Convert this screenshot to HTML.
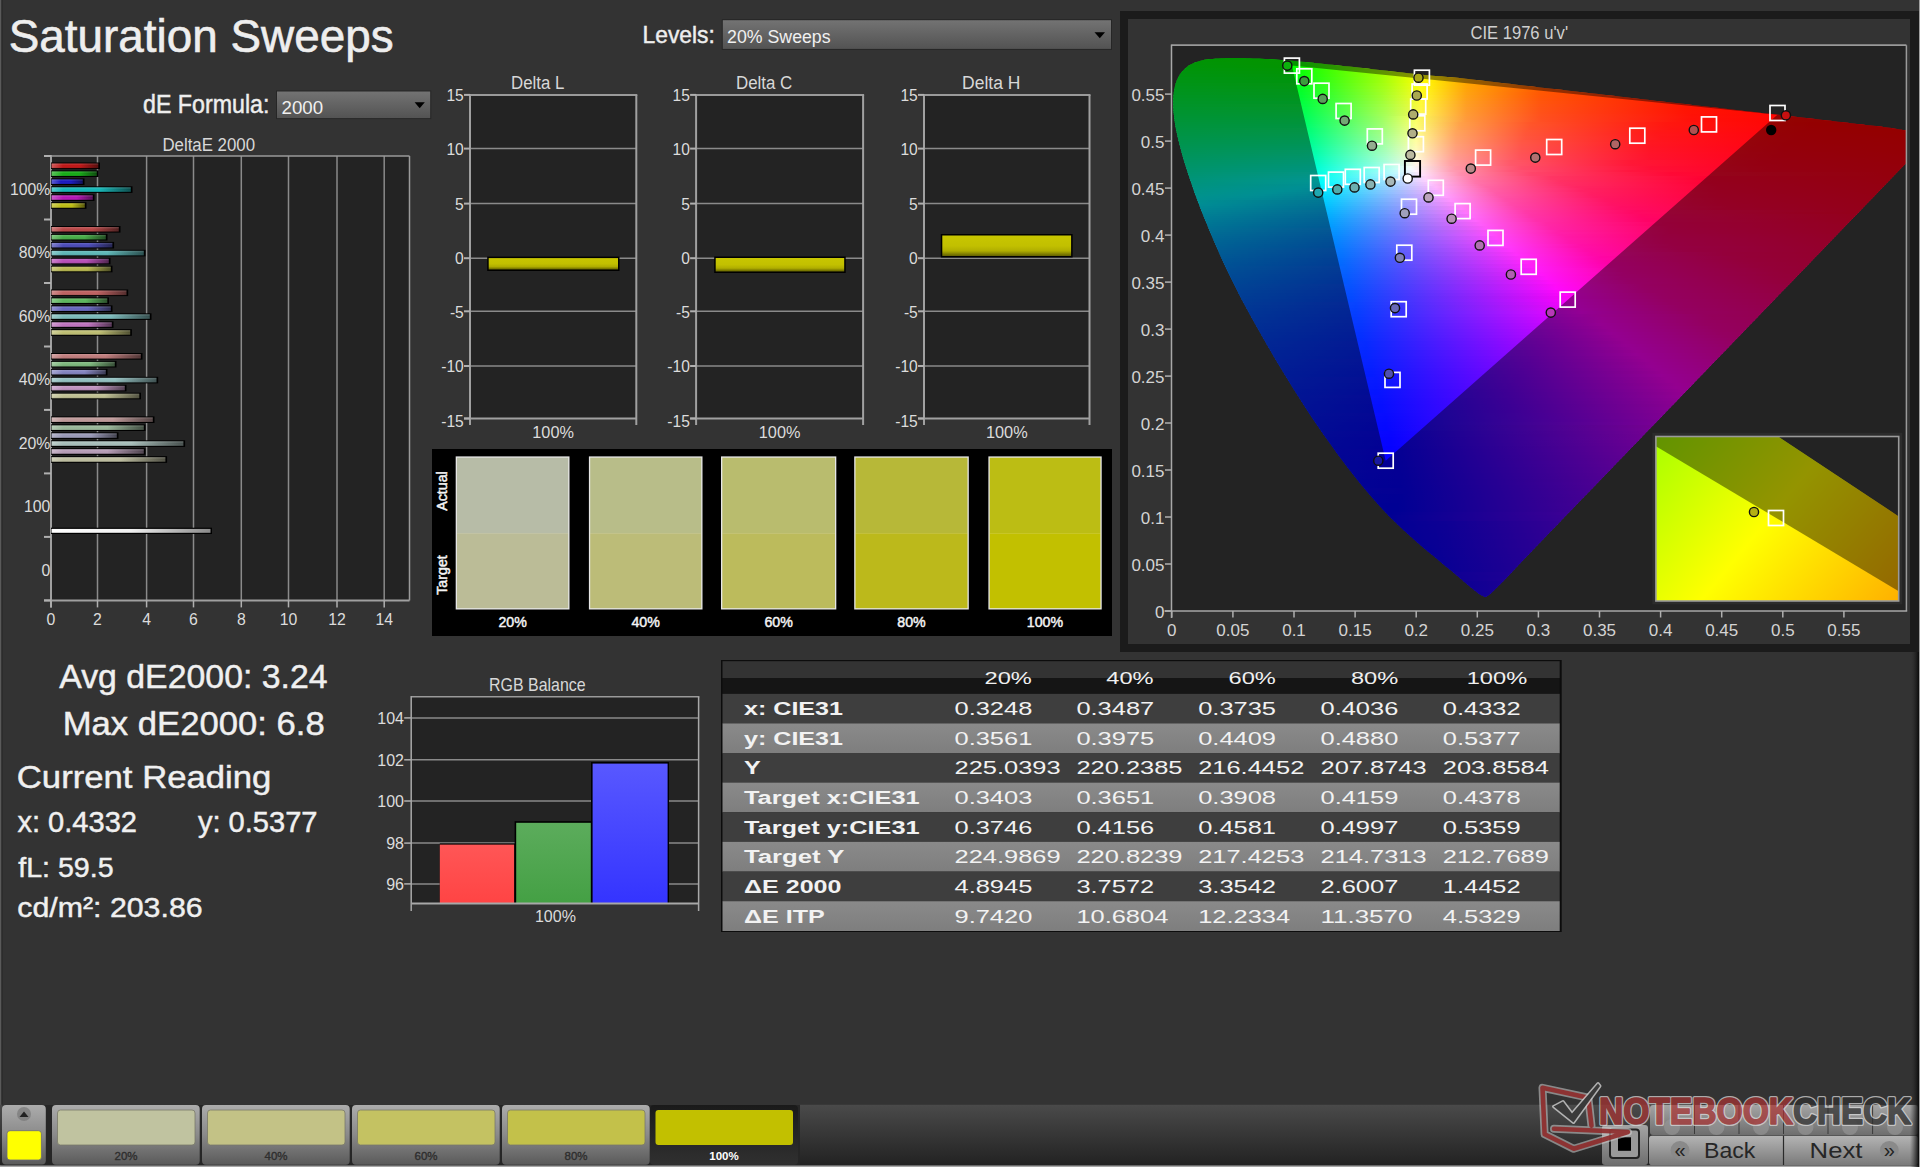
<!DOCTYPE html>
<html><head><meta charset="utf-8"><title>Saturation Sweeps</title>
<style>html,body{margin:0;padding:0;background:#333;overflow:hidden;width:1920px;height:1167px}svg{display:block}text{font-family:"Liberation Sans",sans-serif}</style></head>
<body><svg width="1920" height="1167" viewBox="0 0 1920 1167" font-family='"Liberation Sans", sans-serif'>
<defs><linearGradient id="dd" x1="0" y1="0" x2="0" y2="1"><stop offset="0" stop-color="#737373"/><stop offset="1" stop-color="#535353"/></linearGradient><linearGradient id="bhl" x1="0" y1="0" x2="0" y2="1"><stop offset="0" stop-color="#fff" stop-opacity="0.18"/><stop offset="0.5" stop-color="#fff" stop-opacity="0"/><stop offset="1" stop-color="#000" stop-opacity="0.15"/></linearGradient><linearGradient id="b1" gradientUnits="userSpaceOnUse" x1="51" y1="0" x2="99.5" y2="0"><stop offset="0" stop-color="#d25a5a"/><stop offset="0.247" stop-color="#be1313"/><stop offset="0.6" stop-color="#be1313"/><stop offset="1" stop-color="#4c0808"/></linearGradient><linearGradient id="b2" gradientUnits="userSpaceOnUse" x1="51" y1="0" x2="98" y2="0"><stop offset="0" stop-color="#5ac45a"/><stop offset="0.255" stop-color="#13ab13"/><stop offset="0.6" stop-color="#13ab13"/><stop offset="1" stop-color="#084408"/></linearGradient><linearGradient id="b3" gradientUnits="userSpaceOnUse" x1="51" y1="0" x2="84" y2="0"><stop offset="0" stop-color="#5d5dd2"/><stop offset="0.300" stop-color="#1717be"/><stop offset="0.6" stop-color="#1717be"/><stop offset="1" stop-color="#09094c"/></linearGradient><linearGradient id="b4" gradientUnits="userSpaceOnUse" x1="51" y1="0" x2="132" y2="0"><stop offset="0" stop-color="#5acccc"/><stop offset="0.148" stop-color="#13b6b6"/><stop offset="0.6" stop-color="#13b6b6"/><stop offset="1" stop-color="#084949"/></linearGradient><linearGradient id="b5" gradientUnits="userSpaceOnUse" x1="51" y1="0" x2="94" y2="0"><stop offset="0" stop-color="#cc5acc"/><stop offset="0.279" stop-color="#b613b6"/><stop offset="0.6" stop-color="#b613b6"/><stop offset="1" stop-color="#490849"/></linearGradient><linearGradient id="b6" gradientUnits="userSpaceOnUse" x1="51" y1="0" x2="86" y2="0"><stop offset="0" stop-color="#d2d25a"/><stop offset="0.300" stop-color="#bebe13"/><stop offset="0.6" stop-color="#bebe13"/><stop offset="1" stop-color="#4c4c08"/></linearGradient><linearGradient id="b7" gradientUnits="userSpaceOnUse" x1="51" y1="0" x2="120" y2="0"><stop offset="0" stop-color="#cc7c7c"/><stop offset="0.174" stop-color="#b64444"/><stop offset="0.6" stop-color="#b64444"/><stop offset="1" stop-color="#491b1b"/></linearGradient><linearGradient id="b8" gradientUnits="userSpaceOnUse" x1="51" y1="0" x2="107" y2="0"><stop offset="0" stop-color="#7cc47c"/><stop offset="0.214" stop-color="#44ab44"/><stop offset="0.6" stop-color="#44ab44"/><stop offset="1" stop-color="#1b441b"/></linearGradient><linearGradient id="b9" gradientUnits="userSpaceOnUse" x1="51" y1="0" x2="113.6" y2="0"><stop offset="0" stop-color="#7f7fcc"/><stop offset="0.192" stop-color="#4848b6"/><stop offset="0.6" stop-color="#4848b6"/><stop offset="1" stop-color="#1d1d49"/></linearGradient><linearGradient id="b10" gradientUnits="userSpaceOnUse" x1="51" y1="0" x2="145" y2="0"><stop offset="0" stop-color="#8ccccc"/><stop offset="0.128" stop-color="#5bb6b6"/><stop offset="0.6" stop-color="#5bb6b6"/><stop offset="1" stop-color="#244949"/></linearGradient><linearGradient id="b11" gradientUnits="userSpaceOnUse" x1="51" y1="0" x2="110" y2="0"><stop offset="0" stop-color="#cc82cc"/><stop offset="0.203" stop-color="#b64cb6"/><stop offset="0.6" stop-color="#b64cb6"/><stop offset="1" stop-color="#491e49"/></linearGradient><linearGradient id="b12" gradientUnits="userSpaceOnUse" x1="51" y1="0" x2="112" y2="0"><stop offset="0" stop-color="#cccc82"/><stop offset="0.197" stop-color="#b6b64c"/><stop offset="0.6" stop-color="#b6b64c"/><stop offset="1" stop-color="#49491e"/></linearGradient><linearGradient id="b13" gradientUnits="userSpaceOnUse" x1="51" y1="0" x2="127.7" y2="0"><stop offset="0" stop-color="#d28f8f"/><stop offset="0.156" stop-color="#be5f5f"/><stop offset="0.6" stop-color="#be5f5f"/><stop offset="1" stop-color="#4c2626"/></linearGradient><linearGradient id="b14" gradientUnits="userSpaceOnUse" x1="51" y1="0" x2="108.5" y2="0"><stop offset="0" stop-color="#8ccc8c"/><stop offset="0.209" stop-color="#5bb65b"/><stop offset="0.6" stop-color="#5bb65b"/><stop offset="1" stop-color="#244924"/></linearGradient><linearGradient id="b15" gradientUnits="userSpaceOnUse" x1="51" y1="0" x2="112" y2="0"><stop offset="0" stop-color="#9393d2"/><stop offset="0.197" stop-color="#6565be"/><stop offset="0.6" stop-color="#6565be"/><stop offset="1" stop-color="#28284c"/></linearGradient><linearGradient id="b16" gradientUnits="userSpaceOnUse" x1="51" y1="0" x2="151" y2="0"><stop offset="0" stop-color="#a2cfcf"/><stop offset="0.120" stop-color="#7ababa"/><stop offset="0.6" stop-color="#7ababa"/><stop offset="1" stop-color="#314a4a"/></linearGradient><linearGradient id="b17" gradientUnits="userSpaceOnUse" x1="51" y1="0" x2="113" y2="0"><stop offset="0" stop-color="#d29cd2"/><stop offset="0.194" stop-color="#be72be"/><stop offset="0.6" stop-color="#be72be"/><stop offset="1" stop-color="#4c2e4c"/></linearGradient><linearGradient id="b18" gradientUnits="userSpaceOnUse" x1="51" y1="0" x2="131.4" y2="0"><stop offset="0" stop-color="#d2d29c"/><stop offset="0.149" stop-color="#bebe72"/><stop offset="0.6" stop-color="#bebe72"/><stop offset="1" stop-color="#4c4c2e"/></linearGradient><linearGradient id="b19" gradientUnits="userSpaceOnUse" x1="51" y1="0" x2="142" y2="0"><stop offset="0" stop-color="#d2a2a2"/><stop offset="0.132" stop-color="#be7a7a"/><stop offset="0.6" stop-color="#be7a7a"/><stop offset="1" stop-color="#4c3131"/></linearGradient><linearGradient id="b20" gradientUnits="userSpaceOnUse" x1="51" y1="0" x2="116" y2="0"><stop offset="0" stop-color="#a2cca2"/><stop offset="0.185" stop-color="#7ab67a"/><stop offset="0.6" stop-color="#7ab67a"/><stop offset="1" stop-color="#314931"/></linearGradient><linearGradient id="b21" gradientUnits="userSpaceOnUse" x1="51" y1="0" x2="107" y2="0"><stop offset="0" stop-color="#a7a7d2"/><stop offset="0.214" stop-color="#8181be"/><stop offset="0.6" stop-color="#8181be"/><stop offset="1" stop-color="#34344c"/></linearGradient><linearGradient id="b22" gradientUnits="userSpaceOnUse" x1="51" y1="0" x2="157.7" y2="0"><stop offset="0" stop-color="#b1d2d2"/><stop offset="0.112" stop-color="#90bebe"/><stop offset="0.6" stop-color="#90bebe"/><stop offset="1" stop-color="#3a4c4c"/></linearGradient><linearGradient id="b23" gradientUnits="userSpaceOnUse" x1="51" y1="0" x2="126" y2="0"><stop offset="0" stop-color="#d2b1d2"/><stop offset="0.160" stop-color="#be90be"/><stop offset="0.6" stop-color="#be90be"/><stop offset="1" stop-color="#4c3a4c"/></linearGradient><linearGradient id="b24" gradientUnits="userSpaceOnUse" x1="51" y1="0" x2="140.5" y2="0"><stop offset="0" stop-color="#d2d2b1"/><stop offset="0.134" stop-color="#bebe90"/><stop offset="0.6" stop-color="#bebe90"/><stop offset="1" stop-color="#4c4c3a"/></linearGradient><linearGradient id="b25" gradientUnits="userSpaceOnUse" x1="51" y1="0" x2="154" y2="0"><stop offset="0" stop-color="#d2b7b7"/><stop offset="0.117" stop-color="#be9898"/><stop offset="0.6" stop-color="#be9898"/><stop offset="1" stop-color="#4c3d3d"/></linearGradient><linearGradient id="b26" gradientUnits="userSpaceOnUse" x1="51" y1="0" x2="145" y2="0"><stop offset="0" stop-color="#b7ccb7"/><stop offset="0.128" stop-color="#98b698"/><stop offset="0.6" stop-color="#98b698"/><stop offset="1" stop-color="#3d493d"/></linearGradient><linearGradient id="b27" gradientUnits="userSpaceOnUse" x1="51" y1="0" x2="118" y2="0"><stop offset="0" stop-color="#b7b7cc"/><stop offset="0.179" stop-color="#9898b6"/><stop offset="0.6" stop-color="#9898b6"/><stop offset="1" stop-color="#3d3d49"/></linearGradient><linearGradient id="b28" gradientUnits="userSpaceOnUse" x1="51" y1="0" x2="184.6" y2="0"><stop offset="0" stop-color="#c1d2cf"/><stop offset="0.090" stop-color="#a7beba"/><stop offset="0.6" stop-color="#a7beba"/><stop offset="1" stop-color="#434c4a"/></linearGradient><linearGradient id="b29" gradientUnits="userSpaceOnUse" x1="51" y1="0" x2="145" y2="0"><stop offset="0" stop-color="#ccbacc"/><stop offset="0.128" stop-color="#b69cb6"/><stop offset="0.6" stop-color="#b69cb6"/><stop offset="1" stop-color="#493e49"/></linearGradient><linearGradient id="b30" gradientUnits="userSpaceOnUse" x1="51" y1="0" x2="166.6" y2="0"><stop offset="0" stop-color="#d2d2bc"/><stop offset="0.104" stop-color="#bebea0"/><stop offset="0.6" stop-color="#bebea0"/><stop offset="1" stop-color="#4c4c40"/></linearGradient><linearGradient id="bw"><stop offset="0" stop-color="#ffffff"/><stop offset="0.5" stop-color="#f0f0f0"/><stop offset="1" stop-color="#8a8a8a"/></linearGradient><linearGradient id="yb" x1="0" y1="0" x2="0" y2="1"><stop offset="0" stop-color="#c8c600"/><stop offset="0.5" stop-color="#c2c000"/><stop offset="0.75" stop-color="#b0ae00"/><stop offset="1" stop-color="#626000"/></linearGradient><clipPath id="pf"><rect x="1171.5" y="45.2" width="734.9000000000001" height="565.8"/></clipPath><clipPath id="hs"><path d="M1482.6 595.6 L1482.0 595.8 L1481.7 595.9 L1481.7 595.8 L1481.7 595.8 L1481.7 595.6 L1481.4 595.4 L1481.0 595.1 L1480.5 594.8 L1479.9 594.4 L1479.2 594.0 L1478.6 593.5 L1477.9 593.0 L1477.2 592.5 L1476.5 591.9 L1475.8 591.3 L1475.0 590.7 L1474.1 590.1 L1473.3 589.3 L1472.3 588.6 L1471.3 587.8 L1470.3 586.9 L1469.2 586.0 L1468.0 585.1 L1466.8 584.1 L1465.6 583.1 L1464.3 582.0 L1463.0 580.8 L1461.7 579.6 L1460.2 578.4 L1458.7 577.1 L1457.2 575.8 L1455.6 574.5 L1453.9 573.1 L1452.2 571.6 L1450.4 570.1 L1448.5 568.5 L1446.5 566.9 L1444.4 565.2 L1442.3 563.4 L1440.0 561.5 L1437.7 559.6 L1435.3 557.6 L1432.9 555.6 L1430.4 553.5 L1427.9 551.4 L1425.2 549.2 L1422.5 546.9 L1419.7 544.5 L1416.7 541.9 L1413.7 539.3 L1410.6 536.5 L1407.4 533.6 L1404.0 530.6 L1400.6 527.3 L1397.1 523.9 L1393.6 520.5 L1389.9 516.9 L1386.1 513.0 L1382.1 508.7 L1377.8 504.0 L1373.2 498.8 L1368.4 493.2 L1363.4 487.3 L1358.2 481.0 L1352.9 474.3 L1347.4 467.2 L1341.8 459.7 L1336.0 451.9 L1330.0 443.6 L1323.9 435.1 L1317.7 426.1 L1311.5 416.9 L1305.2 407.2 L1298.7 397.1 L1292.1 386.7 L1285.6 376.1 L1279.0 365.3 L1272.6 354.4 L1266.2 343.4 L1259.7 332.1 L1253.3 320.7 L1247.0 309.3 L1240.9 297.9 L1235.2 286.7 L1229.7 275.7 L1224.4 264.5 L1219.4 253.5 L1214.6 242.6 L1210.1 232.0 L1205.9 221.8 L1201.9 212.0 L1198.2 202.3 L1194.7 192.9 L1191.6 183.8 L1188.6 175.2 L1186.0 167.1 L1183.6 159.5 L1181.6 152.3 L1179.8 145.6 L1178.2 139.2 L1176.9 133.2 L1175.7 127.4 L1174.8 121.9 L1174.1 116.8 L1173.6 112.0 L1173.3 107.4 L1173.2 103.2 L1173.2 99.1 L1173.5 95.2 L1173.9 91.7 L1174.5 88.3 L1175.2 85.2 L1176.1 82.3 L1177.2 79.6 L1178.4 77.1 L1179.7 74.7 L1181.2 72.6 L1182.9 70.7 L1184.6 68.9 L1186.5 67.3 L1188.4 65.8 L1190.5 64.6 L1192.7 63.5 L1195.0 62.5 L1197.3 61.7 L1199.7 61.0 L1202.2 60.3 L1204.7 59.8 L1207.3 59.4 L1210.0 59.1 L1212.7 58.9 L1215.4 58.6 L1218.2 58.4 L1221.1 58.3 L1223.9 58.2 L1226.8 58.1 L1229.7 58.1 L1232.6 58.1 L1235.5 58.0 L1238.4 58.0 L1241.3 58.1 L1244.2 58.1 L1247.1 58.2 L1250.0 58.3 L1253.0 58.4 L1256.0 58.5 L1259.0 58.6 L1262.0 58.8 L1265.1 58.9 L1268.2 59.1 L1271.4 59.3 L1274.6 59.5 L1277.8 59.8 L1281.1 60.0 L1284.4 60.3 L1287.8 60.5 L1291.2 60.8 L1294.7 61.1 L1298.2 61.4 L1301.8 61.8 L1305.4 62.1 L1309.1 62.5 L1312.8 62.8 L1316.6 63.2 L1320.5 63.6 L1324.4 64.0 L1328.4 64.4 L1332.5 64.8 L1336.7 65.3 L1340.9 65.7 L1345.1 66.2 L1349.5 66.6 L1353.9 67.1 L1358.4 67.6 L1363.0 68.1 L1367.7 68.6 L1372.4 69.2 L1377.2 69.7 L1382.1 70.3 L1387.1 70.8 L1392.2 71.4 L1397.3 72.0 L1402.6 72.6 L1407.9 73.2 L1413.3 73.8 L1418.8 74.4 L1424.4 74.9 L1430.1 75.4 L1435.8 75.9 L1441.7 76.3 L1447.7 76.9 L1453.7 77.4 L1459.8 78.1 L1466.0 78.8 L1472.3 79.5 L1478.7 80.3 L1485.2 81.0 L1491.8 81.8 L1498.4 82.6 L1505.1 83.4 L1511.9 84.1 L1518.8 84.9 L1525.8 85.7 L1532.8 86.5 L1539.9 87.4 L1547.0 88.2 L1554.2 89.0 L1561.5 89.8 L1568.8 90.7 L1576.2 91.5 L1583.6 92.4 L1591.0 93.2 L1598.5 94.1 L1606.0 95.0 L1613.5 95.8 L1620.9 96.7 L1628.2 97.5 L1635.4 98.4 L1642.6 99.2 L1649.8 100.0 L1657.0 100.9 L1664.1 101.7 L1671.2 102.5 L1678.4 103.3 L1685.5 104.1 L1692.5 104.9 L1699.4 105.7 L1706.2 106.5 L1712.8 107.3 L1719.3 108.0 L1725.7 108.8 L1732.0 109.5 L1738.2 110.2 L1744.2 110.9 L1750.1 111.6 L1755.9 112.2 L1761.6 112.9 L1767.2 113.5 L1772.6 114.1 L1777.9 114.8 L1783.0 115.3 L1788.0 115.9 L1792.8 116.5 L1797.5 117.0 L1802.1 117.6 L1806.6 118.1 L1810.9 118.6 L1815.1 119.1 L1819.1 119.5 L1823.1 120.0 L1826.9 120.4 L1830.6 120.8 L1834.3 121.3 L1837.8 121.7 L1841.2 122.0 L1844.5 122.4 L1847.7 122.8 L1850.9 123.2 L1854.0 123.5 L1857.0 123.9 L1860.0 124.2 L1862.9 124.5 L1865.7 124.9 L1868.4 125.2 L1871.1 125.5 L1873.7 125.8 L1876.2 126.1 L1878.6 126.3 L1881.0 126.6 L1883.3 126.9 L1885.5 127.2 L1887.6 127.5 L1889.7 127.8 L1891.7 128.1 L1893.6 128.4 L1895.4 128.7 L1897.0 129.0 L1898.5 129.2 L1899.8 129.4 L1901.2 129.6 L1902.8 129.9 L1904.6 130.2 L1906.7 130.5 L1909.2 130.9 L1911.9 131.4 L1914.5 131.8 L1916.9 132.2 L1918.9 132.6 L1920.6 132.9 L1921.9 133.2 L1923.0 133.5 L1924.1 133.7 L1925.1 134.0 L1926.1 134.3 L1927.3 134.5 L1928.6 134.8 L1929.8 135.1 L1930.9 135.4 L1931.8 135.6 L1932.5 135.8 L1933.4 135.3 L1934.6 134.2 L1935.7 133.0 L1936.0 132.5 L1935.1 133.2 L1932.5 135.8 L1927.7 140.8 L1921.1 147.6 L1913.2 155.8 L1904.8 164.5 L1896.3 173.3 L1888.4 181.5 L1881.1 189.1 L1873.8 196.7 L1866.4 204.3 L1859.1 211.9 L1851.7 219.5 L1844.4 227.1 L1837.0 234.7 L1829.7 242.3 L1822.4 250.0 L1815.0 257.6 L1807.7 265.2 L1800.3 272.8 L1793.0 280.4 L1785.6 288.0 L1778.3 295.6 L1771.0 303.2 L1763.6 310.8 L1756.3 318.5 L1748.9 326.1 L1741.6 333.7 L1734.2 341.3 L1726.9 348.9 L1719.5 356.5 L1712.2 364.1 L1704.9 371.7 L1697.5 379.3 L1690.2 386.9 L1682.8 394.6 L1675.5 402.2 L1668.1 409.8 L1660.8 417.4 L1653.5 425.0 L1646.1 432.6 L1638.8 440.2 L1631.4 447.8 L1624.1 455.4 L1616.7 463.1 L1609.4 470.7 L1602.1 478.3 L1594.7 485.9 L1587.4 493.5 L1580.0 501.1 L1572.7 508.7 L1565.3 516.3 L1558.0 523.9 L1550.6 531.6 L1543.3 539.2 L1536.0 546.8 L1528.2 554.9 L1520.0 563.6 L1511.8 572.3 L1504.0 580.4 L1497.2 587.3 L1491.9 592.4 L1488.3 595.5 L1485.9 596.8 L1484.6 596.9 L1483.8 596.4 L1483.3 595.8Z"/></clipPath><linearGradient id="c0" gradientUnits="userSpaceOnUse" x1="1171" y1="0" x2="1907" y2="0"><stop offset="0.000" stop-color="#00ff05"/><stop offset="0.163" stop-color="#02ff00"/><stop offset="0.285" stop-color="#9eff00"/><stop offset="0.346" stop-color="#fff900"/><stop offset="0.414" stop-color="#ffa000"/><stop offset="0.530" stop-color="#ff5400"/><stop offset="0.754" stop-color="#ff1600"/><stop offset="0.999" stop-color="#ff0000"/><stop offset="1.005" stop-color="#ff0000"/></linearGradient><linearGradient id="c1" gradientUnits="userSpaceOnUse" x1="1171" y1="0" x2="1907" y2="0"><stop offset="0.000" stop-color="#00ff09"/><stop offset="0.170" stop-color="#08ff00"/><stop offset="0.292" stop-color="#a8ff00"/><stop offset="0.346" stop-color="#fff800"/><stop offset="0.414" stop-color="#ff9f00"/><stop offset="0.530" stop-color="#ff5300"/><stop offset="0.754" stop-color="#ff1500"/><stop offset="0.992" stop-color="#ff0000"/><stop offset="1.005" stop-color="#ff0000"/></linearGradient><linearGradient id="c2" gradientUnits="userSpaceOnUse" x1="1171" y1="0" x2="1907" y2="0"><stop offset="0.000" stop-color="#00ff0d"/><stop offset="0.170" stop-color="#07ff00"/><stop offset="0.292" stop-color="#a8ff00"/><stop offset="0.346" stop-color="#fff700"/><stop offset="0.414" stop-color="#ff9e00"/><stop offset="0.530" stop-color="#ff5300"/><stop offset="0.754" stop-color="#ff1400"/><stop offset="0.992" stop-color="#ff0000"/><stop offset="1.005" stop-color="#ff0000"/></linearGradient><linearGradient id="c3" gradientUnits="userSpaceOnUse" x1="1171" y1="0" x2="1907" y2="0"><stop offset="0.000" stop-color="#00ff11"/><stop offset="0.170" stop-color="#06ff01"/><stop offset="0.292" stop-color="#a9ff00"/><stop offset="0.346" stop-color="#fff600"/><stop offset="0.414" stop-color="#ff9d00"/><stop offset="0.530" stop-color="#ff5200"/><stop offset="0.754" stop-color="#ff1400"/><stop offset="0.985" stop-color="#ff0000"/><stop offset="1.005" stop-color="#ff0000"/></linearGradient><linearGradient id="c4" gradientUnits="userSpaceOnUse" x1="1171" y1="0" x2="1907" y2="0"><stop offset="0.000" stop-color="#00ff15"/><stop offset="0.170" stop-color="#05ff06"/><stop offset="0.292" stop-color="#a9ff00"/><stop offset="0.340" stop-color="#fcff00"/><stop offset="0.414" stop-color="#ff9c00"/><stop offset="0.530" stop-color="#ff5100"/><stop offset="0.754" stop-color="#ff1300"/><stop offset="0.985" stop-color="#ff0000"/><stop offset="1.005" stop-color="#ff0000"/></linearGradient><linearGradient id="c5" gradientUnits="userSpaceOnUse" x1="1171" y1="0" x2="1907" y2="0"><stop offset="0.000" stop-color="#00ff19"/><stop offset="0.170" stop-color="#04ff0a"/><stop offset="0.285" stop-color="#9eff00"/><stop offset="0.340" stop-color="#fcff00"/><stop offset="0.408" stop-color="#ffa200"/><stop offset="0.516" stop-color="#ff5700"/><stop offset="0.727" stop-color="#ff1700"/><stop offset="0.965" stop-color="#ff0000"/><stop offset="1.005" stop-color="#ff0000"/></linearGradient><linearGradient id="c6" gradientUnits="userSpaceOnUse" x1="1171" y1="0" x2="1907" y2="0"><stop offset="0.000" stop-color="#00ff1d"/><stop offset="0.170" stop-color="#03ff0f"/><stop offset="0.285" stop-color="#9eff02"/><stop offset="0.340" stop-color="#fdff00"/><stop offset="0.408" stop-color="#ffa100"/><stop offset="0.516" stop-color="#ff5600"/><stop offset="0.727" stop-color="#ff1700"/><stop offset="0.958" stop-color="#ff0000"/><stop offset="1.005" stop-color="#ff0000"/></linearGradient><linearGradient id="c7" gradientUnits="userSpaceOnUse" x1="1171" y1="0" x2="1907" y2="0"><stop offset="0.000" stop-color="#00ff21"/><stop offset="0.170" stop-color="#02ff14"/><stop offset="0.285" stop-color="#9dff08"/><stop offset="0.340" stop-color="#feff00"/><stop offset="0.408" stop-color="#ffa000"/><stop offset="0.516" stop-color="#ff5500"/><stop offset="0.727" stop-color="#ff1600"/><stop offset="0.958" stop-color="#ff0000"/><stop offset="1.005" stop-color="#ff0000"/></linearGradient><linearGradient id="c8" gradientUnits="userSpaceOnUse" x1="1171" y1="0" x2="1907" y2="0"><stop offset="0.000" stop-color="#00ff25"/><stop offset="0.170" stop-color="#01ff19"/><stop offset="0.285" stop-color="#9dff0e"/><stop offset="0.340" stop-color="#ffff06"/><stop offset="0.401" stop-color="#ffa600"/><stop offset="0.510" stop-color="#ff5700"/><stop offset="0.713" stop-color="#ff1800"/><stop offset="0.944" stop-color="#ff0000"/><stop offset="1.005" stop-color="#ff0000"/></linearGradient><linearGradient id="c9" gradientUnits="userSpaceOnUse" x1="1171" y1="0" x2="1907" y2="0"><stop offset="0.000" stop-color="#00ff29"/><stop offset="0.177" stop-color="#07ff1e"/><stop offset="0.292" stop-color="#a9ff13"/><stop offset="0.340" stop-color="#ffff0d"/><stop offset="0.401" stop-color="#ffa602"/><stop offset="0.510" stop-color="#ff5600"/><stop offset="0.713" stop-color="#ff1800"/><stop offset="0.944" stop-color="#ff0000"/><stop offset="1.005" stop-color="#ff0000"/></linearGradient><linearGradient id="c10" gradientUnits="userSpaceOnUse" x1="1171" y1="0" x2="1907" y2="0"><stop offset="0.000" stop-color="#00ff2e"/><stop offset="0.177" stop-color="#06ff23"/><stop offset="0.292" stop-color="#a9ff19"/><stop offset="0.340" stop-color="#fffe13"/><stop offset="0.401" stop-color="#ffa507"/><stop offset="0.510" stop-color="#ff5600"/><stop offset="0.713" stop-color="#ff1700"/><stop offset="0.938" stop-color="#ff0000"/><stop offset="1.005" stop-color="#ff0000"/></linearGradient><linearGradient id="c11" gradientUnits="userSpaceOnUse" x1="1171" y1="0" x2="1907" y2="0"><stop offset="0.000" stop-color="#00ff32"/><stop offset="0.177" stop-color="#05ff29"/><stop offset="0.292" stop-color="#a9ff1f"/><stop offset="0.340" stop-color="#fffd1a"/><stop offset="0.401" stop-color="#ffa40c"/><stop offset="0.510" stop-color="#ff5500"/><stop offset="0.713" stop-color="#ff1600"/><stop offset="0.938" stop-color="#ff0000"/><stop offset="1.005" stop-color="#ff0000"/></linearGradient><linearGradient id="c12" gradientUnits="userSpaceOnUse" x1="1171" y1="0" x2="1907" y2="0"><stop offset="0.000" stop-color="#00ff36"/><stop offset="0.177" stop-color="#04ff2e"/><stop offset="0.285" stop-color="#9dff26"/><stop offset="0.340" stop-color="#fffc21"/><stop offset="0.401" stop-color="#ffa311"/><stop offset="0.503" stop-color="#ff5703"/><stop offset="0.700" stop-color="#ff1800"/><stop offset="0.924" stop-color="#ff0000"/><stop offset="1.005" stop-color="#ff0000"/></linearGradient><linearGradient id="c13" gradientUnits="userSpaceOnUse" x1="1171" y1="0" x2="1907" y2="0"><stop offset="0.000" stop-color="#00ff3b"/><stop offset="0.177" stop-color="#03ff33"/><stop offset="0.285" stop-color="#9dff2d"/><stop offset="0.340" stop-color="#fffc28"/><stop offset="0.401" stop-color="#ffa216"/><stop offset="0.503" stop-color="#ff5606"/><stop offset="0.700" stop-color="#ff1800"/><stop offset="0.924" stop-color="#ff0000"/><stop offset="1.005" stop-color="#ff0000"/></linearGradient><linearGradient id="c14" gradientUnits="userSpaceOnUse" x1="1171" y1="0" x2="1907" y2="0"><stop offset="0.000" stop-color="#00ff3f"/><stop offset="0.177" stop-color="#02ff39"/><stop offset="0.285" stop-color="#9dff33"/><stop offset="0.340" stop-color="#fffb2f"/><stop offset="0.401" stop-color="#ffa11b"/><stop offset="0.503" stop-color="#ff550a"/><stop offset="0.700" stop-color="#ff1700"/><stop offset="0.917" stop-color="#ff0000"/><stop offset="1.005" stop-color="#ff0000"/></linearGradient><linearGradient id="c15" gradientUnits="userSpaceOnUse" x1="1171" y1="0" x2="1907" y2="0"><stop offset="0.000" stop-color="#00ff44"/><stop offset="0.177" stop-color="#01ff3f"/><stop offset="0.285" stop-color="#9dff3a"/><stop offset="0.340" stop-color="#fffa36"/><stop offset="0.401" stop-color="#ffa020"/><stop offset="0.503" stop-color="#ff550d"/><stop offset="0.700" stop-color="#ff1600"/><stop offset="0.917" stop-color="#ff0000"/><stop offset="1.005" stop-color="#ff0000"/></linearGradient><linearGradient id="c16" gradientUnits="userSpaceOnUse" x1="1171" y1="0" x2="1907" y2="0"><stop offset="0.000" stop-color="#00ff48"/><stop offset="0.183" stop-color="#08ff44"/><stop offset="0.292" stop-color="#a9ff41"/><stop offset="0.340" stop-color="#fff93d"/><stop offset="0.401" stop-color="#ff9f25"/><stop offset="0.503" stop-color="#ff5411"/><stop offset="0.700" stop-color="#ff1600"/><stop offset="0.910" stop-color="#ff0000"/><stop offset="1.005" stop-color="#ff0000"/></linearGradient><linearGradient id="c17" gradientUnits="userSpaceOnUse" x1="1171" y1="0" x2="1907" y2="0"><stop offset="0.000" stop-color="#00ff4d"/><stop offset="0.183" stop-color="#07ff4a"/><stop offset="0.292" stop-color="#a9ff48"/><stop offset="0.340" stop-color="#fff844"/><stop offset="0.401" stop-color="#ff9e2a"/><stop offset="0.503" stop-color="#ff5314"/><stop offset="0.700" stop-color="#ff1502"/><stop offset="0.910" stop-color="#ff0000"/><stop offset="1.005" stop-color="#ff0000"/></linearGradient><linearGradient id="c18" gradientUnits="userSpaceOnUse" x1="1171" y1="0" x2="1907" y2="0"><stop offset="0.000" stop-color="#00ff51"/><stop offset="0.183" stop-color="#06ff4f"/><stop offset="0.292" stop-color="#a9ff4d"/><stop offset="0.340" stop-color="#fff84a"/><stop offset="0.401" stop-color="#ff9d2e"/><stop offset="0.503" stop-color="#ff5217"/><stop offset="0.700" stop-color="#ff1404"/><stop offset="0.904" stop-color="#ff0000"/><stop offset="1.005" stop-color="#ff0000"/></linearGradient><linearGradient id="c19" gradientUnits="userSpaceOnUse" x1="1171" y1="0" x2="1907" y2="0"><stop offset="0.000" stop-color="#00ff54"/><stop offset="0.183" stop-color="#05ff53"/><stop offset="0.292" stop-color="#a9ff52"/><stop offset="0.340" stop-color="#fff74f"/><stop offset="0.401" stop-color="#ff9c32"/><stop offset="0.503" stop-color="#ff5119"/><stop offset="0.700" stop-color="#ff1405"/><stop offset="0.904" stop-color="#ff0000"/><stop offset="1.005" stop-color="#ff0000"/></linearGradient><linearGradient id="c20" gradientUnits="userSpaceOnUse" x1="1171" y1="0" x2="1907" y2="0"><stop offset="0.000" stop-color="#00ff57"/><stop offset="0.183" stop-color="#04ff57"/><stop offset="0.292" stop-color="#a9ff57"/><stop offset="0.340" stop-color="#fff654"/><stop offset="0.401" stop-color="#ff9c35"/><stop offset="0.503" stop-color="#ff511c"/><stop offset="0.707" stop-color="#ff1206"/><stop offset="0.910" stop-color="#ff0000"/><stop offset="1.005" stop-color="#ff0000"/></linearGradient><linearGradient id="c21" gradientUnits="userSpaceOnUse" x1="1171" y1="0" x2="1907" y2="0"><stop offset="0.000" stop-color="#00ff5a"/><stop offset="0.183" stop-color="#03ff5b"/><stop offset="0.285" stop-color="#9cff5c"/><stop offset="0.333" stop-color="#faff5c"/><stop offset="0.401" stop-color="#ff9b39"/><stop offset="0.503" stop-color="#ff501e"/><stop offset="0.707" stop-color="#ff1208"/><stop offset="0.910" stop-color="#ff0000"/><stop offset="1.005" stop-color="#ff0000"/></linearGradient><linearGradient id="c22" gradientUnits="userSpaceOnUse" x1="1171" y1="0" x2="1907" y2="0"><stop offset="0.000" stop-color="#00ff5d"/><stop offset="0.183" stop-color="#02ff5f"/><stop offset="0.285" stop-color="#9cff61"/><stop offset="0.333" stop-color="#faff62"/><stop offset="0.401" stop-color="#ff9a3c"/><stop offset="0.503" stop-color="#ff5020"/><stop offset="0.707" stop-color="#ff1109"/><stop offset="0.904" stop-color="#ff0000"/><stop offset="1.005" stop-color="#ff0000"/></linearGradient><linearGradient id="c23" gradientUnits="userSpaceOnUse" x1="1171" y1="0" x2="1907" y2="0"><stop offset="0.000" stop-color="#00ff60"/><stop offset="0.183" stop-color="#02ff63"/><stop offset="0.285" stop-color="#9cff66"/><stop offset="0.333" stop-color="#fbff67"/><stop offset="0.401" stop-color="#ff9a40"/><stop offset="0.503" stop-color="#ff4f23"/><stop offset="0.707" stop-color="#ff110b"/><stop offset="0.904" stop-color="#ff0000"/><stop offset="1.005" stop-color="#ff0000"/></linearGradient><linearGradient id="c24" gradientUnits="userSpaceOnUse" x1="1171" y1="0" x2="1907" y2="0"><stop offset="0.000" stop-color="#00ff64"/><stop offset="0.183" stop-color="#01ff67"/><stop offset="0.285" stop-color="#9cff6b"/><stop offset="0.333" stop-color="#fbff6d"/><stop offset="0.394" stop-color="#ffa047"/><stop offset="0.489" stop-color="#ff5528"/><stop offset="0.673" stop-color="#ff170f"/><stop offset="0.876" stop-color="#ff0002"/><stop offset="1.005" stop-color="#ff0000"/></linearGradient><linearGradient id="c25" gradientUnits="userSpaceOnUse" x1="1171" y1="0" x2="1907" y2="0"><stop offset="0.000" stop-color="#00ff67"/><stop offset="0.183" stop-color="#00ff6c"/><stop offset="0.285" stop-color="#9cff70"/><stop offset="0.333" stop-color="#fcff72"/><stop offset="0.394" stop-color="#ffa04a"/><stop offset="0.489" stop-color="#ff552b"/><stop offset="0.673" stop-color="#ff1710"/><stop offset="0.876" stop-color="#ff0003"/><stop offset="1.005" stop-color="#ff0000"/></linearGradient><linearGradient id="c26" gradientUnits="userSpaceOnUse" x1="1171" y1="0" x2="1907" y2="0"><stop offset="0.000" stop-color="#00ff6a"/><stop offset="0.183" stop-color="#00ff70"/><stop offset="0.285" stop-color="#9cff75"/><stop offset="0.333" stop-color="#fcff78"/><stop offset="0.394" stop-color="#ff9f4e"/><stop offset="0.489" stop-color="#ff542d"/><stop offset="0.673" stop-color="#ff1612"/><stop offset="0.876" stop-color="#ff0005"/><stop offset="1.005" stop-color="#ff0000"/></linearGradient><linearGradient id="c27" gradientUnits="userSpaceOnUse" x1="1171" y1="0" x2="1907" y2="0"><stop offset="0.000" stop-color="#00ff6d"/><stop offset="0.190" stop-color="#07ff75"/><stop offset="0.292" stop-color="#a9ff7b"/><stop offset="0.333" stop-color="#fdff7e"/><stop offset="0.394" stop-color="#ff9e52"/><stop offset="0.489" stop-color="#ff5330"/><stop offset="0.679" stop-color="#ff1413"/><stop offset="0.876" stop-color="#ff0006"/><stop offset="1.005" stop-color="#ff0000"/></linearGradient><linearGradient id="c28" gradientUnits="userSpaceOnUse" x1="1171" y1="0" x2="1907" y2="0"><stop offset="0.000" stop-color="#00ff71"/><stop offset="0.190" stop-color="#06ff79"/><stop offset="0.292" stop-color="#a9ff80"/><stop offset="0.333" stop-color="#fdff84"/><stop offset="0.387" stop-color="#ffa659"/><stop offset="0.482" stop-color="#ff5734"/><stop offset="0.659" stop-color="#ff1816"/><stop offset="0.863" stop-color="#ff0007"/><stop offset="1.005" stop-color="#ff0001"/></linearGradient><linearGradient id="c29" gradientUnits="userSpaceOnUse" x1="1171" y1="0" x2="1907" y2="0"><stop offset="0.000" stop-color="#00ff74"/><stop offset="0.190" stop-color="#06ff7d"/><stop offset="0.292" stop-color="#a9ff85"/><stop offset="0.333" stop-color="#feff89"/><stop offset="0.387" stop-color="#ffa55d"/><stop offset="0.482" stop-color="#ff5637"/><stop offset="0.659" stop-color="#ff1718"/><stop offset="0.856" stop-color="#ff0009"/><stop offset="1.005" stop-color="#ff0002"/></linearGradient><linearGradient id="c30" gradientUnits="userSpaceOnUse" x1="1171" y1="0" x2="1907" y2="0"><stop offset="0.000" stop-color="#00ff77"/><stop offset="0.190" stop-color="#05ff82"/><stop offset="0.292" stop-color="#a9ff8b"/><stop offset="0.333" stop-color="#ffff8f"/><stop offset="0.387" stop-color="#ffa461"/><stop offset="0.482" stop-color="#ff5539"/><stop offset="0.659" stop-color="#ff171a"/><stop offset="0.856" stop-color="#ff000a"/><stop offset="1.005" stop-color="#ff0003"/></linearGradient><linearGradient id="c31" gradientUnits="userSpaceOnUse" x1="1171" y1="0" x2="1907" y2="0"><stop offset="0.000" stop-color="#00ff7b"/><stop offset="0.190" stop-color="#04ff86"/><stop offset="0.285" stop-color="#9cff8f"/><stop offset="0.333" stop-color="#ffff95"/><stop offset="0.387" stop-color="#ffa465"/><stop offset="0.482" stop-color="#ff553c"/><stop offset="0.666" stop-color="#ff151a"/><stop offset="0.856" stop-color="#ff000b"/><stop offset="1.005" stop-color="#ff0004"/></linearGradient><linearGradient id="c32" gradientUnits="userSpaceOnUse" x1="1171" y1="0" x2="1907" y2="0"><stop offset="0.000" stop-color="#00ff7e"/><stop offset="0.190" stop-color="#03ff8b"/><stop offset="0.285" stop-color="#9cff95"/><stop offset="0.333" stop-color="#fffe9b"/><stop offset="0.387" stop-color="#ffa369"/><stop offset="0.482" stop-color="#ff543e"/><stop offset="0.666" stop-color="#ff151c"/><stop offset="0.856" stop-color="#ff000c"/><stop offset="1.005" stop-color="#ff0005"/></linearGradient><linearGradient id="c33" gradientUnits="userSpaceOnUse" x1="1171" y1="0" x2="1907" y2="0"><stop offset="0.000" stop-color="#00ff82"/><stop offset="0.190" stop-color="#02ff90"/><stop offset="0.285" stop-color="#9bff9b"/><stop offset="0.333" stop-color="#fffea1"/><stop offset="0.387" stop-color="#ffa26d"/><stop offset="0.476" stop-color="#ff5743"/><stop offset="0.652" stop-color="#ff171f"/><stop offset="0.849" stop-color="#ff000e"/><stop offset="1.005" stop-color="#ff0006"/></linearGradient><linearGradient id="c34" gradientUnits="userSpaceOnUse" x1="1171" y1="0" x2="1907" y2="0"><stop offset="0.000" stop-color="#00ff85"/><stop offset="0.190" stop-color="#01ff94"/><stop offset="0.285" stop-color="#9bffa0"/><stop offset="0.333" stop-color="#fffda7"/><stop offset="0.387" stop-color="#ffa171"/><stop offset="0.476" stop-color="#ff5746"/><stop offset="0.652" stop-color="#ff1721"/><stop offset="0.842" stop-color="#ff000f"/><stop offset="1.005" stop-color="#ff0007"/></linearGradient><linearGradient id="c35" gradientUnits="userSpaceOnUse" x1="1171" y1="0" x2="1907" y2="0"><stop offset="0.000" stop-color="#00ff89"/><stop offset="0.190" stop-color="#01ff99"/><stop offset="0.285" stop-color="#9bffa6"/><stop offset="0.333" stop-color="#fffcad"/><stop offset="0.387" stop-color="#ffa176"/><stop offset="0.476" stop-color="#ff5649"/><stop offset="0.652" stop-color="#ff1622"/><stop offset="0.842" stop-color="#ff0010"/><stop offset="1.005" stop-color="#ff0008"/></linearGradient><linearGradient id="c36" gradientUnits="userSpaceOnUse" x1="1171" y1="0" x2="1907" y2="0"><stop offset="0.000" stop-color="#00ff8c"/><stop offset="0.190" stop-color="#00ff9e"/><stop offset="0.285" stop-color="#9bffac"/><stop offset="0.333" stop-color="#fffcb3"/><stop offset="0.387" stop-color="#ffa07a"/><stop offset="0.476" stop-color="#ff554c"/><stop offset="0.652" stop-color="#ff1524"/><stop offset="0.836" stop-color="#ff0012"/><stop offset="1.005" stop-color="#ff0009"/></linearGradient><linearGradient id="c37" gradientUnits="userSpaceOnUse" x1="1171" y1="0" x2="1907" y2="0"><stop offset="0.000" stop-color="#00ff90"/><stop offset="0.190" stop-color="#00ffa3"/><stop offset="0.285" stop-color="#9bffb2"/><stop offset="0.333" stop-color="#fffbb9"/><stop offset="0.387" stop-color="#ff9f7e"/><stop offset="0.476" stop-color="#ff544e"/><stop offset="0.652" stop-color="#ff1526"/><stop offset="0.836" stop-color="#ff0013"/><stop offset="1.005" stop-color="#ff0009"/></linearGradient><linearGradient id="c38" gradientUnits="userSpaceOnUse" x1="1171" y1="0" x2="1907" y2="0"><stop offset="0.000" stop-color="#00ff93"/><stop offset="0.197" stop-color="#07ffa8"/><stop offset="0.292" stop-color="#a9ffb9"/><stop offset="0.333" stop-color="#fffbbf"/><stop offset="0.387" stop-color="#ff9e82"/><stop offset="0.476" stop-color="#ff5451"/><stop offset="0.652" stop-color="#ff1427"/><stop offset="0.836" stop-color="#ff0014"/><stop offset="1.005" stop-color="#ff000a"/></linearGradient><linearGradient id="c39" gradientUnits="userSpaceOnUse" x1="1171" y1="0" x2="1907" y2="0"><stop offset="0.000" stop-color="#00ff97"/><stop offset="0.197" stop-color="#06ffad"/><stop offset="0.292" stop-color="#a9ffbf"/><stop offset="0.333" stop-color="#fffac5"/><stop offset="0.387" stop-color="#ff9e86"/><stop offset="0.476" stop-color="#ff5354"/><stop offset="0.652" stop-color="#ff1429"/><stop offset="0.836" stop-color="#ff0016"/><stop offset="1.005" stop-color="#ff000b"/></linearGradient><linearGradient id="c40" gradientUnits="userSpaceOnUse" x1="1171" y1="0" x2="1907" y2="0"><stop offset="0.000" stop-color="#00ff9b"/><stop offset="0.197" stop-color="#06ffb2"/><stop offset="0.292" stop-color="#a9ffc5"/><stop offset="0.333" stop-color="#fff9cb"/><stop offset="0.387" stop-color="#ff9d8b"/><stop offset="0.476" stop-color="#ff5257"/><stop offset="0.652" stop-color="#ff132b"/><stop offset="0.829" stop-color="#ff0017"/><stop offset="1.005" stop-color="#ff000c"/></linearGradient><linearGradient id="c41" gradientUnits="userSpaceOnUse" x1="1171" y1="0" x2="1907" y2="0"><stop offset="0.000" stop-color="#00ff9e"/><stop offset="0.197" stop-color="#05ffb8"/><stop offset="0.292" stop-color="#a9ffcb"/><stop offset="0.333" stop-color="#fff9d1"/><stop offset="0.387" stop-color="#ff9c8f"/><stop offset="0.476" stop-color="#ff5259"/><stop offset="0.652" stop-color="#ff132c"/><stop offset="0.829" stop-color="#ff0018"/><stop offset="1.005" stop-color="#ff000d"/></linearGradient><linearGradient id="c42" gradientUnits="userSpaceOnUse" x1="1171" y1="0" x2="1907" y2="0"><stop offset="0.000" stop-color="#00ffa2"/><stop offset="0.197" stop-color="#04ffbd"/><stop offset="0.285" stop-color="#9bffd0"/><stop offset="0.333" stop-color="#fff8d8"/><stop offset="0.387" stop-color="#ff9b93"/><stop offset="0.476" stop-color="#ff515c"/><stop offset="0.652" stop-color="#ff122e"/><stop offset="0.829" stop-color="#ff001a"/><stop offset="1.005" stop-color="#ff000e"/></linearGradient><linearGradient id="c43" gradientUnits="userSpaceOnUse" x1="1171" y1="0" x2="1907" y2="0"><stop offset="0.000" stop-color="#00ffa6"/><stop offset="0.197" stop-color="#03ffc2"/><stop offset="0.285" stop-color="#9bffd6"/><stop offset="0.333" stop-color="#fff7de"/><stop offset="0.380" stop-color="#ffa39e"/><stop offset="0.462" stop-color="#ff5865"/><stop offset="0.625" stop-color="#ff1835"/><stop offset="0.808" stop-color="#ff001d"/><stop offset="1.005" stop-color="#ff000f"/></linearGradient><linearGradient id="c44" gradientUnits="userSpaceOnUse" x1="1171" y1="0" x2="1907" y2="0"><stop offset="0.000" stop-color="#00ffaa"/><stop offset="0.197" stop-color="#02ffc7"/><stop offset="0.285" stop-color="#9bffdd"/><stop offset="0.333" stop-color="#fff7e4"/><stop offset="0.380" stop-color="#ffa2a3"/><stop offset="0.462" stop-color="#ff5868"/><stop offset="0.625" stop-color="#ff1836"/><stop offset="0.808" stop-color="#ff001e"/><stop offset="1.005" stop-color="#ff0010"/></linearGradient><linearGradient id="c45" gradientUnits="userSpaceOnUse" x1="1171" y1="0" x2="1907" y2="0"><stop offset="0.000" stop-color="#00ffad"/><stop offset="0.197" stop-color="#01ffcd"/><stop offset="0.285" stop-color="#9affe3"/><stop offset="0.333" stop-color="#fff6eb"/><stop offset="0.380" stop-color="#ffa2a7"/><stop offset="0.462" stop-color="#ff576b"/><stop offset="0.625" stop-color="#ff1738"/><stop offset="0.802" stop-color="#ff0020"/><stop offset="1.005" stop-color="#ff0011"/></linearGradient><linearGradient id="c46" gradientUnits="userSpaceOnUse" x1="1171" y1="0" x2="1907" y2="0"><stop offset="0.000" stop-color="#00ffb1"/><stop offset="0.197" stop-color="#00ffd2"/><stop offset="0.285" stop-color="#9affea"/><stop offset="0.326" stop-color="#f8fff8"/><stop offset="0.387" stop-color="#ff98a5"/><stop offset="0.476" stop-color="#ff4e68"/><stop offset="0.652" stop-color="#ff1035"/><stop offset="0.822" stop-color="#ff001f"/><stop offset="1.005" stop-color="#ff0012"/></linearGradient><linearGradient id="c47" gradientUnits="userSpaceOnUse" x1="1171" y1="0" x2="1907" y2="0"><stop offset="0.000" stop-color="#00ffb5"/><stop offset="0.197" stop-color="#00ffd7"/><stop offset="0.285" stop-color="#9afff1"/><stop offset="0.326" stop-color="#f8feff"/><stop offset="0.387" stop-color="#ff97a9"/><stop offset="0.476" stop-color="#ff4d6b"/><stop offset="0.652" stop-color="#ff1037"/><stop offset="0.822" stop-color="#ff0020"/><stop offset="1.005" stop-color="#ff0013"/></linearGradient><linearGradient id="c48" gradientUnits="userSpaceOnUse" x1="1171" y1="0" x2="1907" y2="0"><stop offset="0.000" stop-color="#00ffb9"/><stop offset="0.197" stop-color="#00ffdd"/><stop offset="0.279" stop-color="#8cfff5"/><stop offset="0.333" stop-color="#fff4ff"/><stop offset="0.380" stop-color="#ff9fb5"/><stop offset="0.462" stop-color="#ff5575"/><stop offset="0.625" stop-color="#ff153e"/><stop offset="0.795" stop-color="#ff0024"/><stop offset="1.005" stop-color="#ff0014"/></linearGradient><linearGradient id="c49" gradientUnits="userSpaceOnUse" x1="1171" y1="0" x2="1907" y2="0"><stop offset="0.000" stop-color="#00ffbd"/><stop offset="0.204" stop-color="#07ffe4"/><stop offset="0.306" stop-color="#c2f8ff"/><stop offset="0.340" stop-color="#ffe4f8"/><stop offset="0.394" stop-color="#ff8eab"/><stop offset="0.489" stop-color="#ff456a"/><stop offset="0.679" stop-color="#ff0935"/><stop offset="0.999" stop-color="#ff0015"/><stop offset="1.005" stop-color="#ff0015"/></linearGradient><linearGradient id="c50" gradientUnits="userSpaceOnUse" x1="1171" y1="0" x2="1907" y2="0"><stop offset="0.000" stop-color="#00ffc1"/><stop offset="0.204" stop-color="#06ffea"/><stop offset="0.299" stop-color="#b0f4ff"/><stop offset="0.340" stop-color="#ffe3fe"/><stop offset="0.394" stop-color="#ff8daf"/><stop offset="0.489" stop-color="#ff446d"/><stop offset="0.679" stop-color="#ff0937"/><stop offset="1.005" stop-color="#ff0015"/></linearGradient><linearGradient id="c51" gradientUnits="userSpaceOnUse" x1="1171" y1="0" x2="1907" y2="0"><stop offset="0.000" stop-color="#00ffc5"/><stop offset="0.204" stop-color="#06fff0"/><stop offset="0.285" stop-color="#92f2ff"/><stop offset="0.346" stop-color="#ffd4f7"/><stop offset="0.408" stop-color="#ff7ea6"/><stop offset="0.516" stop-color="#ff3664"/><stop offset="0.734" stop-color="#ff0030"/><stop offset="1.005" stop-color="#ff0016"/></linearGradient><linearGradient id="c52" gradientUnits="userSpaceOnUse" x1="1171" y1="0" x2="1907" y2="0"><stop offset="0.000" stop-color="#00ffc9"/><stop offset="0.204" stop-color="#05fff6"/><stop offset="0.319" stop-color="#cddfff"/><stop offset="0.346" stop-color="#ffd3fd"/><stop offset="0.408" stop-color="#ff7daa"/><stop offset="0.516" stop-color="#ff3666"/><stop offset="0.727" stop-color="#ff0032"/><stop offset="1.005" stop-color="#ff0017"/></linearGradient><linearGradient id="c53" gradientUnits="userSpaceOnUse" x1="1171" y1="0" x2="1907" y2="0"><stop offset="0.000" stop-color="#00ffcd"/><stop offset="0.204" stop-color="#04fffc"/><stop offset="0.346" stop-color="#fbcfff"/><stop offset="0.414" stop-color="#ff75a8"/><stop offset="0.530" stop-color="#ff3063"/><stop offset="0.740" stop-color="#ff0032"/><stop offset="1.005" stop-color="#ff0018"/></linearGradient><linearGradient id="c54" gradientUnits="userSpaceOnUse" x1="1171" y1="0" x2="1907" y2="0"><stop offset="0.000" stop-color="#00ffd1"/><stop offset="0.204" stop-color="#03fcff"/><stop offset="0.353" stop-color="#ffc5fd"/><stop offset="0.414" stop-color="#ff75ac"/><stop offset="0.530" stop-color="#ff2f66"/><stop offset="0.734" stop-color="#ff0034"/><stop offset="1.005" stop-color="#ff0019"/></linearGradient><linearGradient id="c55" gradientUnits="userSpaceOnUse" x1="1171" y1="0" x2="1907" y2="0"><stop offset="0.000" stop-color="#00ffd5"/><stop offset="0.204" stop-color="#02f7ff"/><stop offset="0.353" stop-color="#fbc1ff"/><stop offset="0.421" stop-color="#ff6eaa"/><stop offset="0.537" stop-color="#ff2c65"/><stop offset="0.740" stop-color="#ff0035"/><stop offset="1.005" stop-color="#ff001a"/></linearGradient><linearGradient id="c56" gradientUnits="userSpaceOnUse" x1="1171" y1="0" x2="1907" y2="0"><stop offset="0.000" stop-color="#00ffd9"/><stop offset="0.183" stop-color="#00f7ff"/><stop offset="0.211" stop-color="#0befff"/><stop offset="0.360" stop-color="#ffb7fc"/><stop offset="0.428" stop-color="#ff67a7"/><stop offset="0.550" stop-color="#ff2663"/><stop offset="0.747" stop-color="#ff0035"/><stop offset="1.005" stop-color="#ff001b"/></linearGradient><linearGradient id="c57" gradientUnits="userSpaceOnUse" x1="1171" y1="0" x2="1907" y2="0"><stop offset="0.000" stop-color="#00ffde"/><stop offset="0.170" stop-color="#00f6ff"/><stop offset="0.204" stop-color="#00ebff"/><stop offset="0.360" stop-color="#fcb4ff"/><stop offset="0.435" stop-color="#ff61a5"/><stop offset="0.564" stop-color="#ff2160"/><stop offset="0.747" stop-color="#ff0036"/><stop offset="1.005" stop-color="#ff001c"/></linearGradient><linearGradient id="c58" gradientUnits="userSpaceOnUse" x1="1171" y1="0" x2="1907" y2="0"><stop offset="0.000" stop-color="#00ffe2"/><stop offset="0.149" stop-color="#00f7ff"/><stop offset="0.211" stop-color="#09e4ff"/><stop offset="0.367" stop-color="#ffaafb"/><stop offset="0.435" stop-color="#ff60a9"/><stop offset="0.557" stop-color="#ff2265"/><stop offset="0.740" stop-color="#ff0039"/><stop offset="1.005" stop-color="#ff001d"/></linearGradient><linearGradient id="c59" gradientUnits="userSpaceOnUse" x1="1171" y1="0" x2="1907" y2="0"><stop offset="0.000" stop-color="#00ffe6"/><stop offset="0.136" stop-color="#00f6ff"/><stop offset="0.211" stop-color="#07dfff"/><stop offset="0.367" stop-color="#fda8ff"/><stop offset="0.442" stop-color="#ff5aa7"/><stop offset="0.571" stop-color="#ff1e62"/><stop offset="0.747" stop-color="#ff0039"/><stop offset="1.005" stop-color="#ff001e"/></linearGradient><linearGradient id="c60" gradientUnits="userSpaceOnUse" x1="1171" y1="0" x2="1907" y2="0"><stop offset="0.000" stop-color="#00ffea"/><stop offset="0.122" stop-color="#00f5ff"/><stop offset="0.211" stop-color="#06daff"/><stop offset="0.374" stop-color="#ff9efb"/><stop offset="0.442" stop-color="#ff59ab"/><stop offset="0.571" stop-color="#ff1d64"/><stop offset="0.740" stop-color="#ff003c"/><stop offset="1.005" stop-color="#ff001f"/></linearGradient><linearGradient id="c61" gradientUnits="userSpaceOnUse" x1="1171" y1="0" x2="1907" y2="0"><stop offset="0.000" stop-color="#00ffef"/><stop offset="0.115" stop-color="#00f2ff"/><stop offset="0.211" stop-color="#05d5ff"/><stop offset="0.374" stop-color="#fe9dff"/><stop offset="0.448" stop-color="#ff54a9"/><stop offset="0.577" stop-color="#ff1a64"/><stop offset="0.740" stop-color="#ff003d"/><stop offset="1.005" stop-color="#ff0020"/></linearGradient><linearGradient id="c62" gradientUnits="userSpaceOnUse" x1="1171" y1="0" x2="1907" y2="0"><stop offset="0.000" stop-color="#00fff3"/><stop offset="0.115" stop-color="#00edff"/><stop offset="0.211" stop-color="#05d1ff"/><stop offset="0.380" stop-color="#ff93fa"/><stop offset="0.455" stop-color="#ff4ea7"/><stop offset="0.591" stop-color="#ff1662"/><stop offset="0.747" stop-color="#ff003e"/><stop offset="1.005" stop-color="#ff0021"/></linearGradient><linearGradient id="c63" gradientUnits="userSpaceOnUse" x1="1171" y1="0" x2="1907" y2="0"><stop offset="0.000" stop-color="#00fff8"/><stop offset="0.211" stop-color="#04ccff"/><stop offset="0.380" stop-color="#fe92ff"/><stop offset="0.455" stop-color="#ff4eaa"/><stop offset="0.591" stop-color="#ff1564"/><stop offset="0.747" stop-color="#ff003f"/><stop offset="1.005" stop-color="#ff0022"/></linearGradient><linearGradient id="c64" gradientUnits="userSpaceOnUse" x1="1171" y1="0" x2="1907" y2="0"><stop offset="0.000" stop-color="#00fffc"/><stop offset="0.211" stop-color="#03c8ff"/><stop offset="0.387" stop-color="#ff89fa"/><stop offset="0.462" stop-color="#ff49a8"/><stop offset="0.598" stop-color="#ff1364"/><stop offset="0.747" stop-color="#ff0040"/><stop offset="1.005" stop-color="#ff0023"/></linearGradient><linearGradient id="c65" gradientUnits="userSpaceOnUse" x1="1171" y1="0" x2="1907" y2="0"><stop offset="0.000" stop-color="#00fdff"/><stop offset="0.211" stop-color="#02c4ff"/><stop offset="0.387" stop-color="#ff88ff"/><stop offset="0.462" stop-color="#ff48ab"/><stop offset="0.598" stop-color="#ff1266"/><stop offset="0.747" stop-color="#ff0042"/><stop offset="1.005" stop-color="#ff0024"/></linearGradient><linearGradient id="c66" gradientUnits="userSpaceOnUse" x1="1171" y1="0" x2="1907" y2="0"><stop offset="0.000" stop-color="#00f9ff"/><stop offset="0.211" stop-color="#01c0ff"/><stop offset="0.394" stop-color="#ff7ff9"/><stop offset="0.469" stop-color="#ff43a9"/><stop offset="0.611" stop-color="#ff0e64"/><stop offset="0.768" stop-color="#ff0040"/><stop offset="1.005" stop-color="#ff0025"/></linearGradient><linearGradient id="c67" gradientUnits="userSpaceOnUse" x1="1171" y1="0" x2="1907" y2="0"><stop offset="0.000" stop-color="#00f5ff"/><stop offset="0.211" stop-color="#00bcff"/><stop offset="0.394" stop-color="#ff7efe"/><stop offset="0.469" stop-color="#ff42ad"/><stop offset="0.605" stop-color="#ff0f68"/><stop offset="0.747" stop-color="#ff0045"/><stop offset="1.005" stop-color="#ff0026"/></linearGradient><linearGradient id="c68" gradientUnits="userSpaceOnUse" x1="1171" y1="0" x2="1907" y2="0"><stop offset="0.000" stop-color="#00f0ff"/><stop offset="0.217" stop-color="#08b6ff"/><stop offset="0.401" stop-color="#ff76f9"/><stop offset="0.482" stop-color="#ff3aa6"/><stop offset="0.632" stop-color="#ff0861"/><stop offset="0.951" stop-color="#ff002b"/><stop offset="1.005" stop-color="#ff0027"/></linearGradient><linearGradient id="c69" gradientUnits="userSpaceOnUse" x1="1171" y1="0" x2="1907" y2="0"><stop offset="0.000" stop-color="#00ecff"/><stop offset="0.217" stop-color="#07b2ff"/><stop offset="0.401" stop-color="#ff75fe"/><stop offset="0.482" stop-color="#ff39a9"/><stop offset="0.625" stop-color="#ff0965"/><stop offset="0.883" stop-color="#ff0034"/><stop offset="1.005" stop-color="#ff0027"/></linearGradient><linearGradient id="c70" gradientUnits="userSpaceOnUse" x1="1171" y1="0" x2="1907" y2="0"><stop offset="0.000" stop-color="#00e8ff"/><stop offset="0.217" stop-color="#06aeff"/><stop offset="0.408" stop-color="#ff6df9"/><stop offset="0.489" stop-color="#ff35a7"/><stop offset="0.639" stop-color="#ff0663"/><stop offset="0.958" stop-color="#ff002d"/><stop offset="1.005" stop-color="#ff0028"/></linearGradient><linearGradient id="c71" gradientUnits="userSpaceOnUse" x1="1171" y1="0" x2="1907" y2="0"><stop offset="0.000" stop-color="#00e4ff"/><stop offset="0.217" stop-color="#05abff"/><stop offset="0.408" stop-color="#ff6cfd"/><stop offset="0.489" stop-color="#ff34aa"/><stop offset="0.639" stop-color="#ff0565"/><stop offset="0.958" stop-color="#ff002e"/><stop offset="1.005" stop-color="#ff0029"/></linearGradient><linearGradient id="c72" gradientUnits="userSpaceOnUse" x1="1171" y1="0" x2="1907" y2="0"><stop offset="0.000" stop-color="#00e1ff"/><stop offset="0.217" stop-color="#04a7ff"/><stop offset="0.414" stop-color="#ff65f8"/><stop offset="0.496" stop-color="#ff30a9"/><stop offset="0.645" stop-color="#ff0365"/><stop offset="0.965" stop-color="#ff002e"/><stop offset="1.005" stop-color="#ff002a"/></linearGradient><linearGradient id="c73" gradientUnits="userSpaceOnUse" x1="1171" y1="0" x2="1907" y2="0"><stop offset="0.000" stop-color="#00ddff"/><stop offset="0.217" stop-color="#04a4ff"/><stop offset="0.414" stop-color="#ff64fd"/><stop offset="0.496" stop-color="#ff2fac"/><stop offset="0.645" stop-color="#ff0367"/><stop offset="0.965" stop-color="#ff002f"/><stop offset="1.005" stop-color="#ff002b"/></linearGradient><linearGradient id="c74" gradientUnits="userSpaceOnUse" x1="1171" y1="0" x2="1907" y2="0"><stop offset="0.000" stop-color="#00d9ff"/><stop offset="0.217" stop-color="#03a1ff"/><stop offset="0.421" stop-color="#ff5df8"/><stop offset="0.510" stop-color="#ff29a5"/><stop offset="0.673" stop-color="#ff0061"/><stop offset="1.005" stop-color="#ff002c"/></linearGradient><linearGradient id="c75" gradientUnits="userSpaceOnUse" x1="1171" y1="0" x2="1907" y2="0"><stop offset="0.000" stop-color="#00d6ff"/><stop offset="0.217" stop-color="#029eff"/><stop offset="0.421" stop-color="#ff5cfc"/><stop offset="0.510" stop-color="#ff28a8"/><stop offset="0.666" stop-color="#ff0064"/><stop offset="0.999" stop-color="#ff002e"/><stop offset="1.005" stop-color="#ff002d"/></linearGradient><linearGradient id="c76" gradientUnits="userSpaceOnUse" x1="1171" y1="0" x2="1907" y2="0"><stop offset="0.000" stop-color="#00d2ff"/><stop offset="0.217" stop-color="#019bff"/><stop offset="0.428" stop-color="#ff56f7"/><stop offset="0.516" stop-color="#ff25a7"/><stop offset="0.679" stop-color="#ff0062"/><stop offset="1.005" stop-color="#ff002e"/></linearGradient><linearGradient id="c77" gradientUnits="userSpaceOnUse" x1="1171" y1="0" x2="1907" y2="0"><stop offset="0.000" stop-color="#00cfff"/><stop offset="0.224" stop-color="#0896ff"/><stop offset="0.428" stop-color="#ff55fc"/><stop offset="0.516" stop-color="#ff24a9"/><stop offset="0.679" stop-color="#ff0064"/><stop offset="1.005" stop-color="#ff002f"/></linearGradient><linearGradient id="c78" gradientUnits="userSpaceOnUse" x1="1171" y1="0" x2="1907" y2="0"><stop offset="0.000" stop-color="#00ccff"/><stop offset="0.224" stop-color="#0793ff"/><stop offset="0.435" stop-color="#ff4ff7"/><stop offset="0.530" stop-color="#ff1ea4"/><stop offset="0.679" stop-color="#ff0066"/><stop offset="1.005" stop-color="#ff0030"/></linearGradient><linearGradient id="c79" gradientUnits="userSpaceOnUse" x1="1171" y1="0" x2="1907" y2="0"><stop offset="0.000" stop-color="#00c8ff"/><stop offset="0.224" stop-color="#0690ff"/><stop offset="0.435" stop-color="#ff4efb"/><stop offset="0.523" stop-color="#ff20ab"/><stop offset="0.679" stop-color="#ff0067"/><stop offset="1.005" stop-color="#ff0031"/></linearGradient><linearGradient id="c80" gradientUnits="userSpaceOnUse" x1="1171" y1="0" x2="1907" y2="0"><stop offset="0.000" stop-color="#00c5ff"/><stop offset="0.224" stop-color="#068dff"/><stop offset="0.435" stop-color="#ff4dff"/><stop offset="0.530" stop-color="#ff1ca9"/><stop offset="0.673" stop-color="#ff006b"/><stop offset="0.999" stop-color="#ff0033"/><stop offset="1.005" stop-color="#ff0032"/></linearGradient><linearGradient id="c81" gradientUnits="userSpaceOnUse" x1="1171" y1="0" x2="1907" y2="0"><stop offset="0.000" stop-color="#00c2ff"/><stop offset="0.224" stop-color="#058aff"/><stop offset="0.442" stop-color="#ff47fb"/><stop offset="0.537" stop-color="#ff19a7"/><stop offset="0.673" stop-color="#ff006d"/><stop offset="0.992" stop-color="#ff0035"/><stop offset="1.005" stop-color="#ff0033"/></linearGradient><linearGradient id="c82" gradientUnits="userSpaceOnUse" x1="1171" y1="0" x2="1907" y2="0"><stop offset="0.000" stop-color="#00bfff"/><stop offset="0.224" stop-color="#0488ff"/><stop offset="0.442" stop-color="#ff46ff"/><stop offset="0.537" stop-color="#ff19aa"/><stop offset="0.673" stop-color="#ff006f"/><stop offset="0.992" stop-color="#ff0036"/><stop offset="1.005" stop-color="#ff0034"/></linearGradient><linearGradient id="c83" gradientUnits="userSpaceOnUse" x1="1171" y1="0" x2="1907" y2="0"><stop offset="0.000" stop-color="#00bcff"/><stop offset="0.224" stop-color="#0385ff"/><stop offset="0.448" stop-color="#ff41fa"/><stop offset="0.543" stop-color="#ff16a9"/><stop offset="0.673" stop-color="#ff0071"/><stop offset="0.985" stop-color="#ff0037"/><stop offset="1.005" stop-color="#ff0035"/></linearGradient><linearGradient id="c84" gradientUnits="userSpaceOnUse" x1="1171" y1="0" x2="1907" y2="0"><stop offset="0.000" stop-color="#00b9ff"/><stop offset="0.224" stop-color="#0382ff"/><stop offset="0.448" stop-color="#ff40fe"/><stop offset="0.543" stop-color="#ff15ab"/><stop offset="0.673" stop-color="#ff0072"/><stop offset="0.985" stop-color="#ff0038"/><stop offset="1.005" stop-color="#ff0036"/></linearGradient><linearGradient id="c85" gradientUnits="userSpaceOnUse" x1="1171" y1="0" x2="1907" y2="0"><stop offset="0.000" stop-color="#00b6ff"/><stop offset="0.224" stop-color="#0280ff"/><stop offset="0.455" stop-color="#ff3bfa"/><stop offset="0.557" stop-color="#ff10a6"/><stop offset="0.686" stop-color="#ff0070"/><stop offset="1.005" stop-color="#ff0037"/></linearGradient><linearGradient id="c86" gradientUnits="userSpaceOnUse" x1="1171" y1="0" x2="1907" y2="0"><stop offset="0.000" stop-color="#00b4ff"/><stop offset="0.224" stop-color="#017eff"/><stop offset="0.455" stop-color="#ff3afe"/><stop offset="0.550" stop-color="#ff11ac"/><stop offset="0.673" stop-color="#ff0076"/><stop offset="0.978" stop-color="#ff003b"/><stop offset="1.005" stop-color="#ff0038"/></linearGradient><linearGradient id="c87" gradientUnits="userSpaceOnUse" x1="1171" y1="0" x2="1907" y2="0"><stop offset="0.000" stop-color="#00b1ff"/><stop offset="0.231" stop-color="#0779ff"/><stop offset="0.462" stop-color="#ff35fa"/><stop offset="0.564" stop-color="#ff0da7"/><stop offset="0.693" stop-color="#ff0071"/><stop offset="1.005" stop-color="#ff0039"/></linearGradient><linearGradient id="c88" gradientUnits="userSpaceOnUse" x1="1171" y1="0" x2="1907" y2="0"><stop offset="0.000" stop-color="#00aeff"/><stop offset="0.231" stop-color="#0777ff"/><stop offset="0.462" stop-color="#ff34fe"/><stop offset="0.564" stop-color="#ff0ca9"/><stop offset="0.707" stop-color="#ff006f"/><stop offset="1.005" stop-color="#ff003a"/></linearGradient><linearGradient id="c89" gradientUnits="userSpaceOnUse" x1="1171" y1="0" x2="1907" y2="0"><stop offset="0.000" stop-color="#00acff"/><stop offset="0.231" stop-color="#0675ff"/><stop offset="0.469" stop-color="#ff2ff9"/><stop offset="0.571" stop-color="#ff0aa8"/><stop offset="0.761" stop-color="#ff0063"/><stop offset="1.005" stop-color="#ff003b"/></linearGradient><linearGradient id="c90" gradientUnits="userSpaceOnUse" x1="1171" y1="0" x2="1907" y2="0"><stop offset="0.000" stop-color="#00a9ff"/><stop offset="0.231" stop-color="#0573ff"/><stop offset="0.469" stop-color="#ff2ffd"/><stop offset="0.571" stop-color="#ff09aa"/><stop offset="0.754" stop-color="#ff0066"/><stop offset="1.005" stop-color="#ff003c"/></linearGradient><linearGradient id="c91" gradientUnits="userSpaceOnUse" x1="1171" y1="0" x2="1907" y2="0"><stop offset="0.000" stop-color="#00a7ff"/><stop offset="0.231" stop-color="#0571ff"/><stop offset="0.476" stop-color="#ff2af9"/><stop offset="0.584" stop-color="#ff05a5"/><stop offset="0.781" stop-color="#ff0061"/><stop offset="1.005" stop-color="#ff003d"/></linearGradient><linearGradient id="c92" gradientUnits="userSpaceOnUse" x1="1171" y1="0" x2="1907" y2="0"><stop offset="0.000" stop-color="#00a4ff"/><stop offset="0.231" stop-color="#046eff"/><stop offset="0.476" stop-color="#ff29fd"/><stop offset="0.577" stop-color="#ff06ab"/><stop offset="0.768" stop-color="#ff0065"/><stop offset="1.005" stop-color="#ff003e"/></linearGradient><linearGradient id="c93" gradientUnits="userSpaceOnUse" x1="1171" y1="0" x2="1907" y2="0"><stop offset="0.000" stop-color="#00a2ff"/><stop offset="0.231" stop-color="#036cff"/><stop offset="0.482" stop-color="#ff25f9"/><stop offset="0.591" stop-color="#ff02a6"/><stop offset="0.788" stop-color="#ff0062"/><stop offset="1.005" stop-color="#ff003f"/></linearGradient><linearGradient id="c94" gradientUnits="userSpaceOnUse" x1="1171" y1="0" x2="1907" y2="0"><stop offset="0.000" stop-color="#009fff"/><stop offset="0.231" stop-color="#036aff"/><stop offset="0.482" stop-color="#ff24fc"/><stop offset="0.591" stop-color="#ff01a9"/><stop offset="0.788" stop-color="#ff0064"/><stop offset="1.005" stop-color="#ff0040"/></linearGradient><linearGradient id="c95" gradientUnits="userSpaceOnUse" x1="1171" y1="0" x2="1907" y2="0"><stop offset="0.000" stop-color="#009dff"/><stop offset="0.231" stop-color="#0268ff"/><stop offset="0.489" stop-color="#ff20f8"/><stop offset="0.598" stop-color="#ff00a7"/><stop offset="0.802" stop-color="#ff0062"/><stop offset="1.005" stop-color="#ff0041"/></linearGradient><linearGradient id="c96" gradientUnits="userSpaceOnUse" x1="1171" y1="0" x2="1907" y2="0"><stop offset="0.000" stop-color="#009bff"/><stop offset="0.238" stop-color="#0865ff"/><stop offset="0.489" stop-color="#ff1ffc"/><stop offset="0.598" stop-color="#ff00aa"/><stop offset="0.795" stop-color="#ff0065"/><stop offset="1.005" stop-color="#ff0042"/></linearGradient><linearGradient id="c97" gradientUnits="userSpaceOnUse" x1="1171" y1="0" x2="1907" y2="0"><stop offset="0.000" stop-color="#0099ff"/><stop offset="0.238" stop-color="#0763ff"/><stop offset="0.496" stop-color="#ff1cf8"/><stop offset="0.611" stop-color="#ff00a5"/><stop offset="0.822" stop-color="#ff0060"/><stop offset="1.005" stop-color="#ff0043"/></linearGradient><linearGradient id="c98" gradientUnits="userSpaceOnUse" x1="1171" y1="0" x2="1907" y2="0"><stop offset="0.000" stop-color="#0096ff"/><stop offset="0.238" stop-color="#0661ff"/><stop offset="0.496" stop-color="#ff1bfc"/><stop offset="0.611" stop-color="#ff00a7"/><stop offset="0.822" stop-color="#ff0062"/><stop offset="1.005" stop-color="#ff0044"/></linearGradient><linearGradient id="c99" gradientUnits="userSpaceOnUse" x1="1171" y1="0" x2="1907" y2="0"><stop offset="0.000" stop-color="#0094ff"/><stop offset="0.238" stop-color="#065fff"/><stop offset="0.503" stop-color="#ff17f8"/><stop offset="0.618" stop-color="#ff00a6"/><stop offset="0.829" stop-color="#ff0062"/><stop offset="1.005" stop-color="#ff0045"/></linearGradient><linearGradient id="c100" gradientUnits="userSpaceOnUse" x1="1171" y1="0" x2="1907" y2="0"><stop offset="0.000" stop-color="#0092ff"/><stop offset="0.238" stop-color="#055dff"/><stop offset="0.503" stop-color="#ff16fb"/><stop offset="0.611" stop-color="#ff00ab"/><stop offset="0.815" stop-color="#ff0066"/><stop offset="1.005" stop-color="#ff0046"/></linearGradient><linearGradient id="c101" gradientUnits="userSpaceOnUse" x1="1171" y1="0" x2="1907" y2="0"><stop offset="0.000" stop-color="#0090ff"/><stop offset="0.238" stop-color="#055cff"/><stop offset="0.510" stop-color="#ff13f8"/><stop offset="0.618" stop-color="#ff00aa"/><stop offset="0.829" stop-color="#ff0064"/><stop offset="1.005" stop-color="#ff0047"/></linearGradient><linearGradient id="c102" gradientUnits="userSpaceOnUse" x1="1171" y1="0" x2="1907" y2="0"><stop offset="0.000" stop-color="#008eff"/><stop offset="0.238" stop-color="#045aff"/><stop offset="0.510" stop-color="#ff12fb"/><stop offset="0.611" stop-color="#ff00b0"/><stop offset="0.815" stop-color="#ff0069"/><stop offset="1.005" stop-color="#ff0048"/></linearGradient><linearGradient id="c103" gradientUnits="userSpaceOnUse" x1="1171" y1="0" x2="1907" y2="0"><stop offset="0.000" stop-color="#008cff"/><stop offset="0.238" stop-color="#0358ff"/><stop offset="0.516" stop-color="#ff0ff7"/><stop offset="0.625" stop-color="#ff00ab"/><stop offset="0.836" stop-color="#ff0066"/><stop offset="1.005" stop-color="#ff0049"/></linearGradient><linearGradient id="c104" gradientUnits="userSpaceOnUse" x1="1171" y1="0" x2="1907" y2="0"><stop offset="0.000" stop-color="#008aff"/><stop offset="0.238" stop-color="#0357ff"/><stop offset="0.516" stop-color="#ff0efb"/><stop offset="0.625" stop-color="#ff00ad"/><stop offset="0.836" stop-color="#ff0067"/><stop offset="1.005" stop-color="#ff004a"/></linearGradient><linearGradient id="c105" gradientUnits="userSpaceOnUse" x1="1171" y1="0" x2="1907" y2="0"><stop offset="0.000" stop-color="#0088ff"/><stop offset="0.245" stop-color="#0853ff"/><stop offset="0.523" stop-color="#ff0bf7"/><stop offset="0.645" stop-color="#ff00a5"/><stop offset="0.870" stop-color="#ff0061"/><stop offset="1.005" stop-color="#ff004b"/></linearGradient><linearGradient id="c106" gradientUnits="userSpaceOnUse" x1="1171" y1="0" x2="1907" y2="0"><stop offset="0.000" stop-color="#0086ff"/><stop offset="0.245" stop-color="#0752ff"/><stop offset="0.523" stop-color="#ff0afa"/><stop offset="0.645" stop-color="#ff00a7"/><stop offset="0.870" stop-color="#ff0062"/><stop offset="1.005" stop-color="#ff004c"/></linearGradient><linearGradient id="c107" gradientUnits="userSpaceOnUse" x1="1171" y1="0" x2="1907" y2="0"><stop offset="0.000" stop-color="#0084ff"/><stop offset="0.245" stop-color="#0750ff"/><stop offset="0.523" stop-color="#ff09fd"/><stop offset="0.645" stop-color="#ff00a9"/><stop offset="0.870" stop-color="#ff0064"/><stop offset="1.005" stop-color="#ff004d"/></linearGradient><linearGradient id="c108" gradientUnits="userSpaceOnUse" x1="1171" y1="0" x2="1907" y2="0"><stop offset="0.000" stop-color="#0082ff"/><stop offset="0.245" stop-color="#064eff"/><stop offset="0.530" stop-color="#ff06fb"/><stop offset="0.652" stop-color="#ff00a9"/><stop offset="0.876" stop-color="#ff0064"/><stop offset="1.005" stop-color="#ff004f"/></linearGradient><linearGradient id="c109" gradientUnits="userSpaceOnUse" x1="1171" y1="0" x2="1907" y2="0"><stop offset="0.000" stop-color="#007fff"/><stop offset="0.245" stop-color="#054cff"/><stop offset="0.537" stop-color="#ff03f9"/><stop offset="0.666" stop-color="#ff00a6"/><stop offset="0.904" stop-color="#ff0061"/><stop offset="1.005" stop-color="#ff0050"/></linearGradient><linearGradient id="c110" gradientUnits="userSpaceOnUse" x1="1171" y1="0" x2="1907" y2="0"><stop offset="0.000" stop-color="#007dff"/><stop offset="0.245" stop-color="#044aff"/><stop offset="0.543" stop-color="#ff00f7"/><stop offset="0.673" stop-color="#ff00a5"/><stop offset="0.910" stop-color="#ff0061"/><stop offset="1.005" stop-color="#ff0052"/></linearGradient><linearGradient id="c111" gradientUnits="userSpaceOnUse" x1="1171" y1="0" x2="1907" y2="0"><stop offset="0.000" stop-color="#007aff"/><stop offset="0.245" stop-color="#0448ff"/><stop offset="0.543" stop-color="#ff00fc"/><stop offset="0.673" stop-color="#ff00a8"/><stop offset="0.910" stop-color="#ff0063"/><stop offset="1.005" stop-color="#ff0053"/></linearGradient><linearGradient id="c112" gradientUnits="userSpaceOnUse" x1="1171" y1="0" x2="1907" y2="0"><stop offset="0.000" stop-color="#0078ff"/><stop offset="0.251" stop-color="#0844ff"/><stop offset="0.550" stop-color="#ff00fa"/><stop offset="0.679" stop-color="#ff00a8"/><stop offset="0.917" stop-color="#ff0063"/><stop offset="1.005" stop-color="#ff0055"/></linearGradient><linearGradient id="c113" gradientUnits="userSpaceOnUse" x1="1171" y1="0" x2="1907" y2="0"><stop offset="0.000" stop-color="#0075ff"/><stop offset="0.251" stop-color="#0742ff"/><stop offset="0.557" stop-color="#ff00f8"/><stop offset="0.693" stop-color="#ff00a5"/><stop offset="0.944" stop-color="#ff0060"/><stop offset="1.005" stop-color="#ff0056"/></linearGradient><linearGradient id="c114" gradientUnits="userSpaceOnUse" x1="1171" y1="0" x2="1907" y2="0"><stop offset="0.000" stop-color="#0073ff"/><stop offset="0.251" stop-color="#0640ff"/><stop offset="0.557" stop-color="#ff00fc"/><stop offset="0.693" stop-color="#ff00a8"/><stop offset="0.938" stop-color="#ff0063"/><stop offset="1.005" stop-color="#ff0058"/></linearGradient><linearGradient id="c115" gradientUnits="userSpaceOnUse" x1="1171" y1="0" x2="1907" y2="0"><stop offset="0.000" stop-color="#0070ff"/><stop offset="0.251" stop-color="#053fff"/><stop offset="0.557" stop-color="#fd00ff"/><stop offset="0.700" stop-color="#ff00a8"/><stop offset="0.951" stop-color="#ff0062"/><stop offset="1.005" stop-color="#ff0059"/></linearGradient><linearGradient id="c116" gradientUnits="userSpaceOnUse" x1="1171" y1="0" x2="1907" y2="0"><stop offset="0.000" stop-color="#006eff"/><stop offset="0.251" stop-color="#053dff"/><stop offset="0.550" stop-color="#f300ff"/><stop offset="0.584" stop-color="#ff00ee"/><stop offset="0.734" stop-color="#ff009d"/><stop offset="1.005" stop-color="#ff005b"/></linearGradient><linearGradient id="c117" gradientUnits="userSpaceOnUse" x1="1171" y1="0" x2="1907" y2="0"><stop offset="0.000" stop-color="#006cff"/><stop offset="0.251" stop-color="#043bff"/><stop offset="0.543" stop-color="#e900ff"/><stop offset="0.584" stop-color="#ff00f2"/><stop offset="0.734" stop-color="#ff009f"/><stop offset="1.005" stop-color="#ff005d"/></linearGradient><linearGradient id="c118" gradientUnits="userSpaceOnUse" x1="1171" y1="0" x2="1907" y2="0"><stop offset="0.000" stop-color="#006aff"/><stop offset="0.258" stop-color="#0838ff"/><stop offset="0.543" stop-color="#e500ff"/><stop offset="0.584" stop-color="#ff00f6"/><stop offset="0.727" stop-color="#ff00a5"/><stop offset="0.992" stop-color="#ff0060"/><stop offset="1.005" stop-color="#ff005e"/></linearGradient><linearGradient id="c119" gradientUnits="userSpaceOnUse" x1="1171" y1="0" x2="1907" y2="0"><stop offset="0.000" stop-color="#0068ff"/><stop offset="0.258" stop-color="#0736ff"/><stop offset="0.537" stop-color="#dc00ff"/><stop offset="0.584" stop-color="#ff00fa"/><stop offset="0.727" stop-color="#ff00a7"/><stop offset="0.992" stop-color="#ff0062"/><stop offset="1.005" stop-color="#ff0060"/></linearGradient><linearGradient id="c120" gradientUnits="userSpaceOnUse" x1="1171" y1="0" x2="1907" y2="0"><stop offset="0.000" stop-color="#0066ff"/><stop offset="0.258" stop-color="#0734ff"/><stop offset="0.537" stop-color="#d800ff"/><stop offset="0.591" stop-color="#ff00f8"/><stop offset="0.740" stop-color="#ff00a5"/><stop offset="1.005" stop-color="#ff0061"/></linearGradient><linearGradient id="c121" gradientUnits="userSpaceOnUse" x1="1171" y1="0" x2="1907" y2="0"><stop offset="0.000" stop-color="#0064ff"/><stop offset="0.258" stop-color="#0633ff"/><stop offset="0.530" stop-color="#cf00ff"/><stop offset="0.598" stop-color="#ff00f7"/><stop offset="0.747" stop-color="#ff00a4"/><stop offset="1.005" stop-color="#ff0063"/></linearGradient><linearGradient id="c122" gradientUnits="userSpaceOnUse" x1="1171" y1="0" x2="1907" y2="0"><stop offset="0.000" stop-color="#0062ff"/><stop offset="0.258" stop-color="#0531ff"/><stop offset="0.530" stop-color="#cc00ff"/><stop offset="0.598" stop-color="#ff00fb"/><stop offset="0.747" stop-color="#ff00a7"/><stop offset="1.005" stop-color="#ff0065"/></linearGradient><linearGradient id="c123" gradientUnits="userSpaceOnUse" x1="1171" y1="0" x2="1907" y2="0"><stop offset="0.000" stop-color="#0060ff"/><stop offset="0.258" stop-color="#0430ff"/><stop offset="0.523" stop-color="#c400ff"/><stop offset="0.605" stop-color="#ff00f9"/><stop offset="0.754" stop-color="#ff00a7"/><stop offset="1.005" stop-color="#ff0066"/></linearGradient><linearGradient id="c124" gradientUnits="userSpaceOnUse" x1="1171" y1="0" x2="1907" y2="0"><stop offset="0.000" stop-color="#005eff"/><stop offset="0.258" stop-color="#042eff"/><stop offset="0.516" stop-color="#bb00ff"/><stop offset="0.611" stop-color="#ff00f8"/><stop offset="0.768" stop-color="#ff00a4"/><stop offset="1.005" stop-color="#ff0068"/></linearGradient><linearGradient id="c125" gradientUnits="userSpaceOnUse" x1="1171" y1="0" x2="1907" y2="0"><stop offset="0.000" stop-color="#005cff"/><stop offset="0.265" stop-color="#072bff"/><stop offset="0.516" stop-color="#b800ff"/><stop offset="0.618" stop-color="#ff00f6"/><stop offset="0.774" stop-color="#ff00a4"/><stop offset="1.005" stop-color="#ff0069"/></linearGradient><linearGradient id="c126" gradientUnits="userSpaceOnUse" x1="1171" y1="0" x2="1907" y2="0"><stop offset="0.000" stop-color="#005aff"/><stop offset="0.265" stop-color="#072aff"/><stop offset="0.510" stop-color="#b100ff"/><stop offset="0.618" stop-color="#ff00fa"/><stop offset="0.774" stop-color="#ff00a7"/><stop offset="1.005" stop-color="#ff006b"/></linearGradient><linearGradient id="c127" gradientUnits="userSpaceOnUse" x1="1171" y1="0" x2="1907" y2="0"><stop offset="0.000" stop-color="#0058ff"/><stop offset="0.265" stop-color="#0629ff"/><stop offset="0.510" stop-color="#ae00ff"/><stop offset="0.625" stop-color="#ff00f9"/><stop offset="0.781" stop-color="#ff00a7"/><stop offset="1.005" stop-color="#ff006d"/></linearGradient><linearGradient id="c128" gradientUnits="userSpaceOnUse" x1="1171" y1="0" x2="1907" y2="0"><stop offset="0.000" stop-color="#0056ff"/><stop offset="0.265" stop-color="#0527ff"/><stop offset="0.503" stop-color="#a600ff"/><stop offset="0.632" stop-color="#ff00f7"/><stop offset="0.795" stop-color="#ff00a4"/><stop offset="1.005" stop-color="#ff006e"/></linearGradient><linearGradient id="c129" gradientUnits="userSpaceOnUse" x1="1171" y1="0" x2="1907" y2="0"><stop offset="0.000" stop-color="#0055ff"/><stop offset="0.265" stop-color="#0526ff"/><stop offset="0.503" stop-color="#a400ff"/><stop offset="0.632" stop-color="#ff00fb"/><stop offset="0.795" stop-color="#ff00a6"/><stop offset="1.005" stop-color="#ff0070"/></linearGradient><linearGradient id="c130" gradientUnits="userSpaceOnUse" x1="1171" y1="0" x2="1907" y2="0"><stop offset="0.000" stop-color="#0053ff"/><stop offset="0.265" stop-color="#0425ff"/><stop offset="0.496" stop-color="#9c00ff"/><stop offset="0.639" stop-color="#ff00f9"/><stop offset="0.802" stop-color="#ff00a6"/><stop offset="1.005" stop-color="#ff0071"/></linearGradient><linearGradient id="c131" gradientUnits="userSpaceOnUse" x1="1171" y1="0" x2="1907" y2="0"><stop offset="0.000" stop-color="#0051ff"/><stop offset="0.272" stop-color="#0822ff"/><stop offset="0.496" stop-color="#9a00ff"/><stop offset="0.645" stop-color="#ff00f8"/><stop offset="0.815" stop-color="#ff00a4"/><stop offset="1.005" stop-color="#ff0073"/></linearGradient><linearGradient id="c132" gradientUnits="userSpaceOnUse" x1="1171" y1="0" x2="1907" y2="0"><stop offset="0.000" stop-color="#0050ff"/><stop offset="0.272" stop-color="#0721ff"/><stop offset="0.489" stop-color="#9300ff"/><stop offset="0.652" stop-color="#ff00f7"/><stop offset="0.822" stop-color="#ff00a4"/><stop offset="1.005" stop-color="#ff0075"/></linearGradient><linearGradient id="c133" gradientUnits="userSpaceOnUse" x1="1171" y1="0" x2="1907" y2="0"><stop offset="0.000" stop-color="#004eff"/><stop offset="0.272" stop-color="#0620ff"/><stop offset="0.489" stop-color="#9100ff"/><stop offset="0.652" stop-color="#ff00fa"/><stop offset="0.822" stop-color="#ff00a6"/><stop offset="1.005" stop-color="#ff0076"/></linearGradient><linearGradient id="c134" gradientUnits="userSpaceOnUse" x1="1171" y1="0" x2="1907" y2="0"><stop offset="0.000" stop-color="#004dff"/><stop offset="0.272" stop-color="#061eff"/><stop offset="0.482" stop-color="#8a00ff"/><stop offset="0.659" stop-color="#ff00f9"/><stop offset="0.829" stop-color="#ff00a6"/><stop offset="1.005" stop-color="#ff0078"/></linearGradient><linearGradient id="c135" gradientUnits="userSpaceOnUse" x1="1171" y1="0" x2="1907" y2="0"><stop offset="0.000" stop-color="#004bff"/><stop offset="0.272" stop-color="#051dff"/><stop offset="0.482" stop-color="#8800ff"/><stop offset="0.666" stop-color="#ff00f7"/><stop offset="0.842" stop-color="#ff00a4"/><stop offset="1.005" stop-color="#ff007a"/></linearGradient><linearGradient id="c136" gradientUnits="userSpaceOnUse" x1="1171" y1="0" x2="1907" y2="0"><stop offset="0.000" stop-color="#004aff"/><stop offset="0.272" stop-color="#041cff"/><stop offset="0.476" stop-color="#8200ff"/><stop offset="0.666" stop-color="#ff00fb"/><stop offset="0.836" stop-color="#ff00a8"/><stop offset="1.005" stop-color="#ff007b"/></linearGradient><linearGradient id="c137" gradientUnits="userSpaceOnUse" x1="1171" y1="0" x2="1907" y2="0"><stop offset="0.000" stop-color="#0048ff"/><stop offset="0.279" stop-color="#081aff"/><stop offset="0.476" stop-color="#8000ff"/><stop offset="0.673" stop-color="#ff00f9"/><stop offset="0.849" stop-color="#ff00a6"/><stop offset="1.005" stop-color="#ff007d"/></linearGradient><linearGradient id="c138" gradientUnits="userSpaceOnUse" x1="1171" y1="0" x2="1907" y2="0"><stop offset="0.000" stop-color="#0047ff"/><stop offset="0.279" stop-color="#0719ff"/><stop offset="0.476" stop-color="#7e00ff"/><stop offset="0.679" stop-color="#ff00f8"/><stop offset="0.856" stop-color="#ff00a6"/><stop offset="1.005" stop-color="#ff007f"/></linearGradient><linearGradient id="c139" gradientUnits="userSpaceOnUse" x1="1171" y1="0" x2="1907" y2="0"><stop offset="0.000" stop-color="#0045ff"/><stop offset="0.279" stop-color="#0618ff"/><stop offset="0.469" stop-color="#7800ff"/><stop offset="0.686" stop-color="#ff00f7"/><stop offset="0.870" stop-color="#ff00a3"/><stop offset="1.005" stop-color="#ff0080"/></linearGradient><linearGradient id="c140" gradientUnits="userSpaceOnUse" x1="1171" y1="0" x2="1907" y2="0"><stop offset="0.000" stop-color="#0044ff"/><stop offset="0.279" stop-color="#0617ff"/><stop offset="0.469" stop-color="#7600ff"/><stop offset="0.686" stop-color="#ff00fa"/><stop offset="0.863" stop-color="#ff00a8"/><stop offset="1.005" stop-color="#ff0082"/></linearGradient><linearGradient id="c141" gradientUnits="userSpaceOnUse" x1="1171" y1="0" x2="1907" y2="0"><stop offset="0.000" stop-color="#0042ff"/><stop offset="0.279" stop-color="#0515ff"/><stop offset="0.462" stop-color="#7000ff"/><stop offset="0.693" stop-color="#ff00f9"/><stop offset="0.876" stop-color="#ff00a5"/><stop offset="1.005" stop-color="#ff0084"/></linearGradient><linearGradient id="c142" gradientUnits="userSpaceOnUse" x1="1171" y1="0" x2="1907" y2="0"><stop offset="0.000" stop-color="#0041ff"/><stop offset="0.279" stop-color="#0514ff"/><stop offset="0.462" stop-color="#6e00ff"/><stop offset="0.700" stop-color="#ff00f8"/><stop offset="0.883" stop-color="#ff00a5"/><stop offset="1.005" stop-color="#ff0085"/></linearGradient><linearGradient id="c143" gradientUnits="userSpaceOnUse" x1="1171" y1="0" x2="1907" y2="0"><stop offset="0.000" stop-color="#0040ff"/><stop offset="0.285" stop-color="#0812ff"/><stop offset="0.469" stop-color="#7100ff"/><stop offset="0.700" stop-color="#ff00fb"/><stop offset="0.883" stop-color="#ff00a7"/><stop offset="1.005" stop-color="#ff0087"/></linearGradient><linearGradient id="c144" gradientUnits="userSpaceOnUse" x1="1171" y1="0" x2="1907" y2="0"><stop offset="0.000" stop-color="#003fff"/><stop offset="0.285" stop-color="#0711ff"/><stop offset="0.462" stop-color="#6b00ff"/><stop offset="0.707" stop-color="#ff00fa"/><stop offset="0.897" stop-color="#ff00a5"/><stop offset="1.005" stop-color="#ff0089"/></linearGradient><linearGradient id="c145" gradientUnits="userSpaceOnUse" x1="1171" y1="0" x2="1907" y2="0"><stop offset="0.000" stop-color="#003dff"/><stop offset="0.285" stop-color="#0710ff"/><stop offset="0.462" stop-color="#6a00ff"/><stop offset="0.713" stop-color="#ff00f8"/><stop offset="0.904" stop-color="#ff00a5"/><stop offset="1.005" stop-color="#ff008a"/></linearGradient><linearGradient id="c146" gradientUnits="userSpaceOnUse" x1="1171" y1="0" x2="1907" y2="0"><stop offset="0.000" stop-color="#003cff"/><stop offset="0.285" stop-color="#060fff"/><stop offset="0.469" stop-color="#6c00ff"/><stop offset="0.720" stop-color="#ff00f7"/><stop offset="0.910" stop-color="#ff00a5"/><stop offset="1.005" stop-color="#ff008c"/></linearGradient><linearGradient id="c147" gradientUnits="userSpaceOnUse" x1="1171" y1="0" x2="1907" y2="0"><stop offset="0.000" stop-color="#003bff"/><stop offset="0.285" stop-color="#060fff"/><stop offset="0.469" stop-color="#6b00ff"/><stop offset="0.720" stop-color="#ff00fa"/><stop offset="0.910" stop-color="#ff00a7"/><stop offset="1.005" stop-color="#ff008e"/></linearGradient><linearGradient id="c148" gradientUnits="userSpaceOnUse" x1="1171" y1="0" x2="1907" y2="0"><stop offset="0.000" stop-color="#003aff"/><stop offset="0.285" stop-color="#050eff"/><stop offset="0.469" stop-color="#6900ff"/><stop offset="0.727" stop-color="#ff00f9"/><stop offset="0.924" stop-color="#ff00a5"/><stop offset="1.005" stop-color="#ff008f"/></linearGradient><linearGradient id="c149" gradientUnits="userSpaceOnUse" x1="1171" y1="0" x2="1907" y2="0"><stop offset="0.000" stop-color="#0038ff"/><stop offset="0.292" stop-color="#080cff"/><stop offset="0.503" stop-color="#7b00ff"/><stop offset="0.734" stop-color="#ff00f8"/><stop offset="0.931" stop-color="#ff00a5"/><stop offset="1.005" stop-color="#ff0091"/></linearGradient><linearGradient id="c150" gradientUnits="userSpaceOnUse" x1="1171" y1="0" x2="1907" y2="0"><stop offset="0.000" stop-color="#0037ff"/><stop offset="0.292" stop-color="#070bff"/><stop offset="0.523" stop-color="#8500ff"/><stop offset="0.734" stop-color="#ff00fb"/><stop offset="0.931" stop-color="#ff00a7"/><stop offset="1.005" stop-color="#ff0093"/></linearGradient><linearGradient id="c151" gradientUnits="userSpaceOnUse" x1="1171" y1="0" x2="1907" y2="0"><stop offset="0.000" stop-color="#0036ff"/><stop offset="0.292" stop-color="#070aff"/><stop offset="0.557" stop-color="#9600ff"/><stop offset="0.740" stop-color="#ff00fa"/><stop offset="0.938" stop-color="#ff00a7"/><stop offset="1.005" stop-color="#ff0095"/></linearGradient><linearGradient id="c152" gradientUnits="userSpaceOnUse" x1="1171" y1="0" x2="1907" y2="0"><stop offset="0.000" stop-color="#0035ff"/><stop offset="0.292" stop-color="#0609ff"/><stop offset="0.666" stop-color="#d400ff"/><stop offset="0.747" stop-color="#ff00f9"/><stop offset="0.951" stop-color="#ff00a5"/><stop offset="1.005" stop-color="#ff0096"/></linearGradient><linearGradient id="c153" gradientUnits="userSpaceOnUse" x1="1171" y1="0" x2="1907" y2="0"><stop offset="0.000" stop-color="#0034ff"/><stop offset="0.292" stop-color="#0608ff"/><stop offset="0.754" stop-color="#ff00f7"/><stop offset="0.958" stop-color="#ff00a5"/><stop offset="1.005" stop-color="#ff0098"/></linearGradient><linearGradient id="c154" gradientUnits="userSpaceOnUse" x1="1171" y1="0" x2="1907" y2="0"><stop offset="0.000" stop-color="#0033ff"/><stop offset="0.292" stop-color="#0508ff"/><stop offset="0.754" stop-color="#ff00fa"/><stop offset="0.958" stop-color="#ff00a7"/><stop offset="1.005" stop-color="#ff009a"/></linearGradient><linearGradient id="c155" gradientUnits="userSpaceOnUse" x1="1171" y1="0" x2="1907" y2="0"><stop offset="0.000" stop-color="#0032ff"/><stop offset="0.299" stop-color="#0806ff"/><stop offset="0.761" stop-color="#ff00f9"/><stop offset="0.965" stop-color="#ff00a6"/><stop offset="1.005" stop-color="#ff009c"/></linearGradient><linearGradient id="c156" gradientUnits="userSpaceOnUse" x1="1171" y1="0" x2="1907" y2="0"><stop offset="0.000" stop-color="#0030ff"/><stop offset="0.299" stop-color="#0805ff"/><stop offset="0.768" stop-color="#ff00f8"/><stop offset="0.978" stop-color="#ff00a5"/><stop offset="1.005" stop-color="#ff009d"/></linearGradient><linearGradient id="c157" gradientUnits="userSpaceOnUse" x1="1171" y1="0" x2="1907" y2="0"><stop offset="0.000" stop-color="#002fff"/><stop offset="0.299" stop-color="#0704ff"/><stop offset="0.768" stop-color="#ff00fb"/><stop offset="0.978" stop-color="#ff00a6"/><stop offset="1.005" stop-color="#ff009f"/></linearGradient><linearGradient id="c158" gradientUnits="userSpaceOnUse" x1="1171" y1="0" x2="1907" y2="0"><stop offset="0.000" stop-color="#002eff"/><stop offset="0.299" stop-color="#0603ff"/><stop offset="0.774" stop-color="#ff00fa"/><stop offset="0.985" stop-color="#ff00a6"/><stop offset="1.005" stop-color="#ff00a1"/></linearGradient><linearGradient id="c159" gradientUnits="userSpaceOnUse" x1="1171" y1="0" x2="1907" y2="0"><stop offset="0.000" stop-color="#002dff"/><stop offset="0.299" stop-color="#0603ff"/><stop offset="0.781" stop-color="#ff00f9"/><stop offset="0.999" stop-color="#ff00a4"/><stop offset="1.005" stop-color="#ff00a3"/></linearGradient><linearGradient id="c160" gradientUnits="userSpaceOnUse" x1="1171" y1="0" x2="1907" y2="0"><stop offset="0.000" stop-color="#002cff"/><stop offset="0.299" stop-color="#0502ff"/><stop offset="0.788" stop-color="#ff00f8"/><stop offset="1.005" stop-color="#ff00a4"/></linearGradient><linearGradient id="c161" gradientUnits="userSpaceOnUse" x1="1171" y1="0" x2="1907" y2="0"><stop offset="0.000" stop-color="#002bff"/><stop offset="0.306" stop-color="#0800ff"/><stop offset="0.788" stop-color="#ff00fa"/><stop offset="1.005" stop-color="#ff00a6"/></linearGradient><linearGradient id="c162" gradientUnits="userSpaceOnUse" x1="1171" y1="0" x2="1907" y2="0"><stop offset="0.000" stop-color="#002aff"/><stop offset="0.306" stop-color="#0800ff"/><stop offset="0.795" stop-color="#ff00f9"/><stop offset="1.005" stop-color="#ff00a8"/></linearGradient><linearGradient id="c163" gradientUnits="userSpaceOnUse" x1="1171" y1="0" x2="1907" y2="0"><stop offset="0.000" stop-color="#0029ff"/><stop offset="0.306" stop-color="#0700ff"/><stop offset="0.802" stop-color="#ff00f8"/><stop offset="1.005" stop-color="#ff00aa"/></linearGradient><linearGradient id="c164" gradientUnits="userSpaceOnUse" x1="1171" y1="0" x2="1907" y2="0"><stop offset="0.000" stop-color="#0029ff"/><stop offset="0.306" stop-color="#0700ff"/><stop offset="0.808" stop-color="#ff00f7"/><stop offset="1.005" stop-color="#ff00ab"/></linearGradient><linearGradient id="c165" gradientUnits="userSpaceOnUse" x1="1171" y1="0" x2="1907" y2="0"><stop offset="0.000" stop-color="#0028ff"/><stop offset="0.306" stop-color="#0600ff"/><stop offset="0.808" stop-color="#ff00fa"/><stop offset="1.005" stop-color="#ff00ad"/></linearGradient><linearGradient id="c166" gradientUnits="userSpaceOnUse" x1="1171" y1="0" x2="1907" y2="0"><stop offset="0.000" stop-color="#0027ff"/><stop offset="0.306" stop-color="#0600ff"/><stop offset="0.815" stop-color="#ff00f9"/><stop offset="1.005" stop-color="#ff00af"/></linearGradient><linearGradient id="c167" gradientUnits="userSpaceOnUse" x1="1171" y1="0" x2="1907" y2="0"><stop offset="0.000" stop-color="#0026ff"/><stop offset="0.306" stop-color="#0500ff"/><stop offset="0.822" stop-color="#ff00f8"/><stop offset="1.005" stop-color="#ff00b1"/></linearGradient><linearGradient id="c168" gradientUnits="userSpaceOnUse" x1="1171" y1="0" x2="1907" y2="0"><stop offset="0.000" stop-color="#0025ff"/><stop offset="0.312" stop-color="#0800ff"/><stop offset="0.822" stop-color="#ff00fa"/><stop offset="1.005" stop-color="#ff00b3"/></linearGradient><linearGradient id="c169" gradientUnits="userSpaceOnUse" x1="1171" y1="0" x2="1907" y2="0"><stop offset="0.000" stop-color="#0024ff"/><stop offset="0.312" stop-color="#0700ff"/><stop offset="0.829" stop-color="#ff00f9"/><stop offset="1.005" stop-color="#ff00b4"/></linearGradient><linearGradient id="c170" gradientUnits="userSpaceOnUse" x1="1171" y1="0" x2="1907" y2="0"><stop offset="0.000" stop-color="#0023ff"/><stop offset="0.312" stop-color="#0700ff"/><stop offset="0.836" stop-color="#ff00f8"/><stop offset="1.005" stop-color="#ff00b6"/></linearGradient><linearGradient id="c171" gradientUnits="userSpaceOnUse" x1="1171" y1="0" x2="1907" y2="0"><stop offset="0.000" stop-color="#0022ff"/><stop offset="0.312" stop-color="#0600ff"/><stop offset="0.842" stop-color="#ff00f7"/><stop offset="1.005" stop-color="#ff00b8"/></linearGradient><linearGradient id="c172" gradientUnits="userSpaceOnUse" x1="1171" y1="0" x2="1907" y2="0"><stop offset="0.000" stop-color="#0021ff"/><stop offset="0.312" stop-color="#0600ff"/><stop offset="0.842" stop-color="#ff00fa"/><stop offset="1.005" stop-color="#ff00ba"/></linearGradient><linearGradient id="c173" gradientUnits="userSpaceOnUse" x1="1171" y1="0" x2="1907" y2="0"><stop offset="0.000" stop-color="#0021ff"/><stop offset="0.312" stop-color="#0500ff"/><stop offset="0.849" stop-color="#ff00f9"/><stop offset="1.005" stop-color="#ff00bc"/></linearGradient><linearGradient id="c174" gradientUnits="userSpaceOnUse" x1="1171" y1="0" x2="1907" y2="0"><stop offset="0.000" stop-color="#0020ff"/><stop offset="0.319" stop-color="#0800ff"/><stop offset="0.856" stop-color="#ff00f8"/><stop offset="1.005" stop-color="#ff00be"/></linearGradient><linearGradient id="c175" gradientUnits="userSpaceOnUse" x1="1171" y1="0" x2="1907" y2="0"><stop offset="0.000" stop-color="#001fff"/><stop offset="0.319" stop-color="#0700ff"/><stop offset="0.856" stop-color="#ff00fa"/><stop offset="1.005" stop-color="#ff00bf"/></linearGradient><linearGradient id="c176" gradientUnits="userSpaceOnUse" x1="1171" y1="0" x2="1907" y2="0"><stop offset="0.000" stop-color="#001eff"/><stop offset="0.312" stop-color="#0400ff"/><stop offset="0.863" stop-color="#ff00f9"/><stop offset="1.005" stop-color="#ff00c1"/></linearGradient><linearGradient id="c177" gradientUnits="userSpaceOnUse" x1="1171" y1="0" x2="1907" y2="0"><stop offset="0.000" stop-color="#001dff"/><stop offset="0.312" stop-color="#0400ff"/><stop offset="0.870" stop-color="#ff00f8"/><stop offset="1.005" stop-color="#ff00c3"/></linearGradient><linearGradient id="c178" gradientUnits="userSpaceOnUse" x1="1171" y1="0" x2="1907" y2="0"><stop offset="0.000" stop-color="#001dff"/><stop offset="0.312" stop-color="#0300ff"/><stop offset="0.876" stop-color="#ff00f8"/><stop offset="1.005" stop-color="#ff00c5"/></linearGradient><linearGradient id="c179" gradientUnits="userSpaceOnUse" x1="1171" y1="0" x2="1907" y2="0"><stop offset="0.000" stop-color="#001cff"/><stop offset="0.306" stop-color="#0000ff"/><stop offset="0.876" stop-color="#ff00fa"/><stop offset="1.005" stop-color="#ff00c7"/></linearGradient><linearGradient id="c180" gradientUnits="userSpaceOnUse" x1="1171" y1="0" x2="1907" y2="0"><stop offset="0.000" stop-color="#001bff"/><stop offset="0.306" stop-color="#0000ff"/><stop offset="0.883" stop-color="#ff00f9"/><stop offset="1.005" stop-color="#ff00c9"/></linearGradient><linearGradient id="c181" gradientUnits="userSpaceOnUse" x1="1171" y1="0" x2="1907" y2="0"><stop offset="0.000" stop-color="#001aff"/><stop offset="0.306" stop-color="#0000ff"/><stop offset="0.890" stop-color="#ff00f8"/><stop offset="1.005" stop-color="#ff00ca"/></linearGradient><linearGradient id="c182" gradientUnits="userSpaceOnUse" x1="1171" y1="0" x2="1907" y2="0"><stop offset="0.000" stop-color="#001aff"/><stop offset="0.299" stop-color="#0000ff"/><stop offset="0.829" stop-color="#e600ff"/><stop offset="0.904" stop-color="#ff00f4"/><stop offset="1.005" stop-color="#ff00cc"/></linearGradient><linearGradient id="c183" gradientUnits="userSpaceOnUse" x1="1171" y1="0" x2="1907" y2="0"><stop offset="0.000" stop-color="#0019ff"/><stop offset="0.292" stop-color="#0000ff"/><stop offset="0.707" stop-color="#aa00ff"/><stop offset="0.897" stop-color="#ff00f9"/><stop offset="1.005" stop-color="#ff00ce"/></linearGradient><linearGradient id="c184" gradientUnits="userSpaceOnUse" x1="1171" y1="0" x2="1907" y2="0"><stop offset="0.000" stop-color="#0018ff"/><stop offset="0.292" stop-color="#0000ff"/><stop offset="0.679" stop-color="#9c00ff"/><stop offset="0.904" stop-color="#ff00f9"/><stop offset="1.005" stop-color="#ff00d0"/></linearGradient><linearGradient id="c185" gradientUnits="userSpaceOnUse" x1="1171" y1="0" x2="1907" y2="0"><stop offset="0.000" stop-color="#0018ff"/><stop offset="0.285" stop-color="#0000ff"/><stop offset="0.380" stop-color="#1b00ff"/><stop offset="0.910" stop-color="#ff00f8"/><stop offset="1.005" stop-color="#ff00d2"/></linearGradient><linearGradient id="c186" gradientUnits="userSpaceOnUse" x1="1171" y1="0" x2="1907" y2="0"><stop offset="0.000" stop-color="#0017ff"/><stop offset="0.285" stop-color="#0000ff"/><stop offset="0.374" stop-color="#1800ff"/><stop offset="0.910" stop-color="#ff00fa"/><stop offset="1.005" stop-color="#ff00d4"/></linearGradient><linearGradient id="c187" gradientUnits="userSpaceOnUse" x1="1171" y1="0" x2="1907" y2="0"><stop offset="0.000" stop-color="#0016ff"/><stop offset="0.285" stop-color="#0000ff"/><stop offset="0.380" stop-color="#1a00ff"/><stop offset="0.917" stop-color="#ff00f9"/><stop offset="1.005" stop-color="#ff00d6"/></linearGradient><linearGradient id="c188" gradientUnits="userSpaceOnUse" x1="1171" y1="0" x2="1907" y2="0"><stop offset="0.000" stop-color="#0015ff"/><stop offset="0.279" stop-color="#0000ff"/><stop offset="0.360" stop-color="#1200ff"/><stop offset="0.924" stop-color="#ff00f8"/><stop offset="1.005" stop-color="#ff00d8"/></linearGradient><linearGradient id="c189" gradientUnits="userSpaceOnUse" x1="1171" y1="0" x2="1907" y2="0"><stop offset="0.000" stop-color="#0015ff"/><stop offset="0.279" stop-color="#0000ff"/><stop offset="0.360" stop-color="#1100ff"/><stop offset="0.931" stop-color="#ff00f7"/><stop offset="1.005" stop-color="#ff00da"/></linearGradient><linearGradient id="c190" gradientUnits="userSpaceOnUse" x1="1171" y1="0" x2="1907" y2="0"><stop offset="0.000" stop-color="#0014ff"/><stop offset="0.279" stop-color="#0000ff"/><stop offset="0.360" stop-color="#1100ff"/><stop offset="0.931" stop-color="#ff00fa"/><stop offset="1.005" stop-color="#ff00dc"/></linearGradient><linearGradient id="c191" gradientUnits="userSpaceOnUse" x1="1171" y1="0" x2="1907" y2="0"><stop offset="0.000" stop-color="#0013ff"/><stop offset="0.279" stop-color="#0000ff"/><stop offset="0.360" stop-color="#1000ff"/><stop offset="0.938" stop-color="#ff00f9"/><stop offset="1.005" stop-color="#ff00dd"/></linearGradient><linearGradient id="c192" gradientUnits="userSpaceOnUse" x1="1171" y1="0" x2="1907" y2="0"><stop offset="0.000" stop-color="#0013ff"/><stop offset="0.279" stop-color="#0000ff"/><stop offset="0.360" stop-color="#1000ff"/><stop offset="0.944" stop-color="#ff00f8"/><stop offset="1.005" stop-color="#ff00df"/></linearGradient><linearGradient id="c193" gradientUnits="userSpaceOnUse" x1="1171" y1="0" x2="1907" y2="0"><stop offset="0.000" stop-color="#0012ff"/><stop offset="0.279" stop-color="#0000ff"/><stop offset="0.353" stop-color="#0d00ff"/><stop offset="0.944" stop-color="#ff00fa"/><stop offset="1.005" stop-color="#ff00e1"/></linearGradient><linearGradient id="c194" gradientUnits="userSpaceOnUse" x1="1171" y1="0" x2="1907" y2="0"><stop offset="0.000" stop-color="#0012ff"/><stop offset="0.272" stop-color="#0000ff"/><stop offset="0.353" stop-color="#0c00ff"/><stop offset="0.951" stop-color="#ff00f9"/><stop offset="1.005" stop-color="#ff00e3"/></linearGradient><linearGradient id="c195" gradientUnits="userSpaceOnUse" x1="1171" y1="0" x2="1907" y2="0"><stop offset="0.000" stop-color="#0011ff"/><stop offset="0.272" stop-color="#0000ff"/><stop offset="0.353" stop-color="#0c00ff"/><stop offset="0.958" stop-color="#ff00f8"/><stop offset="1.005" stop-color="#ff00e5"/></linearGradient><linearGradient id="c196" gradientUnits="userSpaceOnUse" x1="1171" y1="0" x2="1907" y2="0"><stop offset="0.000" stop-color="#0010ff"/><stop offset="0.279" stop-color="#0000ff"/><stop offset="0.367" stop-color="#1100ff"/><stop offset="0.965" stop-color="#ff00f8"/><stop offset="1.005" stop-color="#ff00e7"/></linearGradient><linearGradient id="c197" gradientUnits="userSpaceOnUse" x1="1171" y1="0" x2="1907" y2="0"><stop offset="0.000" stop-color="#0010ff"/><stop offset="0.279" stop-color="#0000ff"/><stop offset="0.367" stop-color="#1000ff"/><stop offset="0.965" stop-color="#ff00fa"/><stop offset="1.005" stop-color="#ff00e9"/></linearGradient><linearGradient id="c198" gradientUnits="userSpaceOnUse" x1="1171" y1="0" x2="1907" y2="0"><stop offset="0.000" stop-color="#000fff"/><stop offset="0.279" stop-color="#0000ff"/><stop offset="0.360" stop-color="#0d00ff"/><stop offset="0.971" stop-color="#ff00f9"/><stop offset="1.005" stop-color="#ff00eb"/></linearGradient><linearGradient id="c199" gradientUnits="userSpaceOnUse" x1="1171" y1="0" x2="1907" y2="0"><stop offset="0.000" stop-color="#000eff"/><stop offset="0.285" stop-color="#0000ff"/><stop offset="0.367" stop-color="#0f00ff"/><stop offset="0.978" stop-color="#ff00f8"/><stop offset="1.005" stop-color="#ff00ed"/></linearGradient><linearGradient id="c200" gradientUnits="userSpaceOnUse" x1="1171" y1="0" x2="1907" y2="0"><stop offset="0.000" stop-color="#000eff"/><stop offset="0.285" stop-color="#0000ff"/><stop offset="0.367" stop-color="#0f00ff"/><stop offset="0.985" stop-color="#ff00f7"/><stop offset="1.005" stop-color="#ff00ef"/></linearGradient><linearGradient id="c201" gradientUnits="userSpaceOnUse" x1="1171" y1="0" x2="1907" y2="0"><stop offset="0.000" stop-color="#000dff"/><stop offset="0.285" stop-color="#0000ff"/><stop offset="0.367" stop-color="#0e00ff"/><stop offset="0.985" stop-color="#ff00f9"/><stop offset="1.005" stop-color="#ff00f1"/></linearGradient><linearGradient id="c202" gradientUnits="userSpaceOnUse" x1="1171" y1="0" x2="1907" y2="0"><stop offset="0.000" stop-color="#000dff"/><stop offset="0.306" stop-color="#0000ff"/><stop offset="0.611" stop-color="#6900ff"/><stop offset="0.992" stop-color="#ff00f8"/><stop offset="1.005" stop-color="#ff00f3"/></linearGradient><linearGradient id="c203" gradientUnits="userSpaceOnUse" x1="1171" y1="0" x2="1907" y2="0"><stop offset="0.000" stop-color="#000cff"/><stop offset="0.306" stop-color="#0000ff"/><stop offset="0.557" stop-color="#5300ff"/><stop offset="0.999" stop-color="#ff00f8"/><stop offset="1.005" stop-color="#ff00f5"/></linearGradient><linearGradient id="c204" gradientUnits="userSpaceOnUse" x1="1171" y1="0" x2="1907" y2="0"><stop offset="0.000" stop-color="#000cff"/><stop offset="0.319" stop-color="#0000ff"/><stop offset="0.931" stop-color="#e700ff"/><stop offset="1.005" stop-color="#ff00f7"/></linearGradient><linearGradient id="c205" gradientUnits="userSpaceOnUse" x1="1171" y1="0" x2="1907" y2="0"><stop offset="0.000" stop-color="#000bff"/><stop offset="0.346" stop-color="#0500ff"/><stop offset="1.005" stop-color="#ff00f9"/></linearGradient><linearGradient id="c206" gradientUnits="userSpaceOnUse" x1="1171" y1="0" x2="1907" y2="0"><stop offset="0.000" stop-color="#000bff"/><stop offset="0.353" stop-color="#0700ff"/><stop offset="1.005" stop-color="#ff00fb"/></linearGradient><linearGradient id="c207" gradientUnits="userSpaceOnUse" x1="1171" y1="0" x2="1907" y2="0"><stop offset="0.000" stop-color="#000aff"/><stop offset="0.353" stop-color="#0700ff"/><stop offset="1.005" stop-color="#ff00fd"/></linearGradient><linearGradient id="c208" gradientUnits="userSpaceOnUse" x1="1171" y1="0" x2="1907" y2="0"><stop offset="0.000" stop-color="#0009ff"/><stop offset="0.353" stop-color="#0700ff"/><stop offset="1.005" stop-color="#ff00ff"/></linearGradient><linearGradient id="c209" gradientUnits="userSpaceOnUse" x1="1171" y1="0" x2="1907" y2="0"><stop offset="0.000" stop-color="#0009ff"/><stop offset="0.353" stop-color="#0600ff"/><stop offset="1.005" stop-color="#fd00ff"/></linearGradient><linearGradient id="c210" gradientUnits="userSpaceOnUse" x1="1171" y1="0" x2="1907" y2="0"><stop offset="0.000" stop-color="#0008ff"/><stop offset="0.360" stop-color="#0800ff"/><stop offset="1.005" stop-color="#fb00ff"/></linearGradient><linearGradient id="ig" gradientUnits="userSpaceOnUse" x1="1630.0" y1="468.0" x2="1854.8" y2="654.9"><stop offset="0" stop-color="#a8ff00"/><stop offset="0.476" stop-color="#ffff00"/><stop offset="1" stop-color="#ffb000"/></linearGradient><linearGradient id="rr" x1="0" y1="0" x2="0" y2="1"><stop offset="0" stop-color="#ff5656"/><stop offset="1" stop-color="#ff4444"/></linearGradient><linearGradient id="rg" x1="0" y1="0" x2="0" y2="1"><stop offset="0" stop-color="#5cac5c"/><stop offset="1" stop-color="#44a044"/></linearGradient><linearGradient id="rbl" x1="0" y1="0" x2="0" y2="1"><stop offset="0" stop-color="#5858ff"/><stop offset="1" stop-color="#3434ff"/></linearGradient><linearGradient id="lr" x1="0" y1="0" x2="0" y2="1"><stop offset="0" stop-color="#8a8a8a"/><stop offset="1" stop-color="#7e7e7e"/></linearGradient><linearGradient id="bar" x1="0" y1="0" x2="0" y2="1"><stop offset="0" stop-color="#4a4a4a"/><stop offset="1" stop-color="#222222"/></linearGradient><linearGradient id="btn" x1="0" y1="0" x2="0" y2="1"><stop offset="0" stop-color="#acacac"/><stop offset="0.5" stop-color="#8a8a8a"/><stop offset="1" stop-color="#5a5a5a"/></linearGradient><linearGradient id="sel" x1="0" y1="0" x2="0" y2="1"><stop offset="0" stop-color="#1a1a1a"/><stop offset="1" stop-color="#303030"/></linearGradient><linearGradient id="nb" x1="0" y1="0" x2="0" y2="1"><stop offset="0" stop-color="#a4a4a4"/><stop offset="1" stop-color="#6e6e6e"/></linearGradient><linearGradient id="nb2" x1="0" y1="0" x2="0" y2="1"><stop offset="0" stop-color="#b4b4b4"/><stop offset="1" stop-color="#7a7a7a"/></linearGradient><linearGradient id="re" x1="0" y1="0" x2="1" y2="0"><stop offset="0" stop-color="#333" stop-opacity="0"/><stop offset="1" stop-color="#0a0a0a"/></linearGradient></defs>
<rect x="0.0" y="0.0" width="1920.0" height="1167.0" fill="#333333"/><rect x="0.0" y="0.0" width="1.5" height="1167.0" fill="#5a5a5a"/><rect x="1.5" y="0.0" width="1.0" height="1167.0" fill="#262626"/><text x="8.8" y="51.7" font-size="46.2" fill="#eeeeee" text-anchor="start" textLength="384.8" lengthAdjust="spacingAndGlyphs" stroke="#eeeeee" stroke-width="0.6">Saturation Sweeps</text><text x="143.0" y="113.1" font-size="25.0" fill="#eeeeee" text-anchor="start" textLength="126.5" lengthAdjust="spacingAndGlyphs" stroke="#eeeeee" stroke-width="0.45">dE Formula:</text><rect x="276.0" y="90.5" width="155.2" height="28.6" fill="#262626"/><rect x="277.0" y="91.5" width="153.2" height="26.6" fill="url(#dd)"/><text x="281.5" y="114.0" font-size="18.3" fill="#f0f0f0" text-anchor="start" textLength="41.6" lengthAdjust="spacingAndGlyphs">2000</text><path d="M414.6 102.3H424.8L419.7 108.2Z" fill="#000"/><text x="642.5" y="42.9" font-size="23.4" fill="#eeeeee" text-anchor="start" textLength="72.3" lengthAdjust="spacingAndGlyphs" stroke="#eeeeee" stroke-width="0.45">Levels:</text><rect x="721.8" y="19.2" width="390.2" height="30.7" fill="#262626"/><rect x="722.8" y="20.2" width="388.2" height="28.7" fill="url(#dd)"/><text x="727.1" y="42.6" font-size="17.5" fill="#f0f0f0" text-anchor="start" textLength="103.5" lengthAdjust="spacingAndGlyphs">20% Sweeps</text><path d="M1094.5 32.2H1105L1099.8 38.2Z" fill="#000"/><text x="162.4" y="151.2" font-size="18.0" fill="#d8d8d8" text-anchor="start" textLength="92.7" lengthAdjust="spacingAndGlyphs">DeltaE 2000</text><rect x="51.0" y="156.0" width="358.5" height="444.4" fill="#232323"/><line x1="97.5" y1="156.0" x2="97.5" y2="600.4" stroke="#8a8a8a" stroke-width="1.5"/><line x1="146.6" y1="156.0" x2="146.6" y2="600.4" stroke="#8a8a8a" stroke-width="1.5"/><line x1="193.5" y1="156.0" x2="193.5" y2="600.4" stroke="#8a8a8a" stroke-width="1.5"/><line x1="241.3" y1="156.0" x2="241.3" y2="600.4" stroke="#8a8a8a" stroke-width="1.5"/><line x1="288.5" y1="156.0" x2="288.5" y2="600.4" stroke="#8a8a8a" stroke-width="1.5"/><line x1="337.0" y1="156.0" x2="337.0" y2="600.4" stroke="#8a8a8a" stroke-width="1.5"/><line x1="384.2" y1="156.0" x2="384.2" y2="600.4" stroke="#8a8a8a" stroke-width="1.5"/><line x1="50.5" y1="156.0" x2="409.5" y2="156.0" stroke="#9a9a9a" stroke-width="1.5"/><line x1="409.5" y1="156.0" x2="409.5" y2="600.4" stroke="#9a9a9a" stroke-width="1.5"/><line x1="51.0" y1="155.0" x2="51.0" y2="607.4" stroke="#a0a0a0" stroke-width="2"/><line x1="44.0" y1="600.4" x2="409.5" y2="600.4" stroke="#a0a0a0" stroke-width="2"/><line x1="44.0" y1="156.0" x2="51.0" y2="156.0" stroke="#b0b0b0" stroke-width="2"/><line x1="44.0" y1="219.5" x2="51.0" y2="219.5" stroke="#b0b0b0" stroke-width="2"/><line x1="44.0" y1="283.0" x2="51.0" y2="283.0" stroke="#b0b0b0" stroke-width="2"/><line x1="44.0" y1="346.5" x2="51.0" y2="346.5" stroke="#b0b0b0" stroke-width="2"/><line x1="44.0" y1="409.9" x2="51.0" y2="409.9" stroke="#b0b0b0" stroke-width="2"/><line x1="44.0" y1="473.4" x2="51.0" y2="473.4" stroke="#b0b0b0" stroke-width="2"/><line x1="44.0" y1="536.9" x2="51.0" y2="536.9" stroke="#b0b0b0" stroke-width="2"/><line x1="44.0" y1="600.4" x2="51.0" y2="600.4" stroke="#b0b0b0" stroke-width="2"/><line x1="51.0" y1="600.4" x2="51.0" y2="607.4" stroke="#b0b0b0" stroke-width="1.5"/><text x="51.0" y="624.7" font-size="15.8" fill="#dcdcdc" text-anchor="middle">0</text><line x1="97.5" y1="600.4" x2="97.5" y2="607.4" stroke="#b0b0b0" stroke-width="1.5"/><text x="97.5" y="624.7" font-size="15.8" fill="#dcdcdc" text-anchor="middle">2</text><line x1="146.6" y1="600.4" x2="146.6" y2="607.4" stroke="#b0b0b0" stroke-width="1.5"/><text x="146.6" y="624.7" font-size="15.8" fill="#dcdcdc" text-anchor="middle">4</text><line x1="193.5" y1="600.4" x2="193.5" y2="607.4" stroke="#b0b0b0" stroke-width="1.5"/><text x="193.5" y="624.7" font-size="15.8" fill="#dcdcdc" text-anchor="middle">6</text><line x1="241.3" y1="600.4" x2="241.3" y2="607.4" stroke="#b0b0b0" stroke-width="1.5"/><text x="241.3" y="624.7" font-size="15.8" fill="#dcdcdc" text-anchor="middle">8</text><line x1="288.5" y1="600.4" x2="288.5" y2="607.4" stroke="#b0b0b0" stroke-width="1.5"/><text x="288.5" y="624.7" font-size="15.8" fill="#dcdcdc" text-anchor="middle">10</text><line x1="337.0" y1="600.4" x2="337.0" y2="607.4" stroke="#b0b0b0" stroke-width="1.5"/><text x="337.0" y="624.7" font-size="15.8" fill="#dcdcdc" text-anchor="middle">12</text><line x1="384.2" y1="600.4" x2="384.2" y2="607.4" stroke="#b0b0b0" stroke-width="1.5"/><text x="384.2" y="624.7" font-size="15.8" fill="#dcdcdc" text-anchor="middle">14</text><text x="50.3" y="194.7" font-size="15.8" fill="#dcdcdc" text-anchor="end">100%</text><text x="50.3" y="258.2" font-size="15.8" fill="#dcdcdc" text-anchor="end">80%</text><text x="50.3" y="321.7" font-size="15.8" fill="#dcdcdc" text-anchor="end">60%</text><text x="50.3" y="385.2" font-size="15.8" fill="#dcdcdc" text-anchor="end">40%</text><text x="50.3" y="448.7" font-size="15.8" fill="#dcdcdc" text-anchor="end">20%</text><text x="50.3" y="512.2" font-size="15.8" fill="#dcdcdc" text-anchor="end">100</text><text x="50.3" y="575.7" font-size="15.8" fill="#dcdcdc" text-anchor="end">0</text><rect x="51.0" y="162.5" width="49.0" height="6.6" fill="#000"/><rect x="51.5" y="163.5" width="46.8" height="4.6" fill="url(#b1)"/><rect x="51.5" y="163.5" width="46.8" height="4.6" fill="url(#bhl)"/><rect x="51.0" y="170.4" width="47.5" height="6.6" fill="#000"/><rect x="51.5" y="171.4" width="45.3" height="4.6" fill="url(#b2)"/><rect x="51.5" y="171.4" width="45.3" height="4.6" fill="url(#bhl)"/><rect x="51.0" y="178.4" width="33.5" height="6.6" fill="#000"/><rect x="51.5" y="179.4" width="31.3" height="4.6" fill="url(#b3)"/><rect x="51.5" y="179.4" width="31.3" height="4.6" fill="url(#bhl)"/><rect x="51.0" y="186.3" width="81.5" height="6.6" fill="#000"/><rect x="51.5" y="187.3" width="79.3" height="4.6" fill="url(#b4)"/><rect x="51.5" y="187.3" width="79.3" height="4.6" fill="url(#bhl)"/><rect x="51.0" y="194.3" width="43.5" height="6.6" fill="#000"/><rect x="51.5" y="195.3" width="41.3" height="4.6" fill="url(#b5)"/><rect x="51.5" y="195.3" width="41.3" height="4.6" fill="url(#bhl)"/><rect x="51.0" y="202.2" width="35.5" height="6.6" fill="#000"/><rect x="51.5" y="203.2" width="33.3" height="4.6" fill="url(#b6)"/><rect x="51.5" y="203.2" width="33.3" height="4.6" fill="url(#bhl)"/><rect x="51.0" y="226.0" width="69.5" height="6.6" fill="#000"/><rect x="51.5" y="227.0" width="67.3" height="4.6" fill="url(#b7)"/><rect x="51.5" y="227.0" width="67.3" height="4.6" fill="url(#bhl)"/><rect x="51.0" y="233.9" width="56.5" height="6.6" fill="#000"/><rect x="51.5" y="234.9" width="54.3" height="4.6" fill="url(#b8)"/><rect x="51.5" y="234.9" width="54.3" height="4.6" fill="url(#bhl)"/><rect x="51.0" y="241.9" width="63.1" height="6.6" fill="#000"/><rect x="51.5" y="242.9" width="60.9" height="4.6" fill="url(#b9)"/><rect x="51.5" y="242.9" width="60.9" height="4.6" fill="url(#bhl)"/><rect x="51.0" y="249.8" width="94.5" height="6.6" fill="#000"/><rect x="51.5" y="250.8" width="92.3" height="4.6" fill="url(#b10)"/><rect x="51.5" y="250.8" width="92.3" height="4.6" fill="url(#bhl)"/><rect x="51.0" y="257.8" width="59.5" height="6.6" fill="#000"/><rect x="51.5" y="258.8" width="57.3" height="4.6" fill="url(#b11)"/><rect x="51.5" y="258.8" width="57.3" height="4.6" fill="url(#bhl)"/><rect x="51.0" y="265.7" width="61.5" height="6.6" fill="#000"/><rect x="51.5" y="266.7" width="59.3" height="4.6" fill="url(#b12)"/><rect x="51.5" y="266.7" width="59.3" height="4.6" fill="url(#bhl)"/><rect x="51.0" y="289.5" width="77.2" height="6.6" fill="#000"/><rect x="51.5" y="290.5" width="75.0" height="4.6" fill="url(#b13)"/><rect x="51.5" y="290.5" width="75.0" height="4.6" fill="url(#bhl)"/><rect x="51.0" y="297.4" width="58.0" height="6.6" fill="#000"/><rect x="51.5" y="298.4" width="55.8" height="4.6" fill="url(#b14)"/><rect x="51.5" y="298.4" width="55.8" height="4.6" fill="url(#bhl)"/><rect x="51.0" y="305.4" width="61.5" height="6.6" fill="#000"/><rect x="51.5" y="306.4" width="59.3" height="4.6" fill="url(#b15)"/><rect x="51.5" y="306.4" width="59.3" height="4.6" fill="url(#bhl)"/><rect x="51.0" y="313.3" width="100.5" height="6.6" fill="#000"/><rect x="51.5" y="314.3" width="98.3" height="4.6" fill="url(#b16)"/><rect x="51.5" y="314.3" width="98.3" height="4.6" fill="url(#bhl)"/><rect x="51.0" y="321.3" width="62.5" height="6.6" fill="#000"/><rect x="51.5" y="322.3" width="60.3" height="4.6" fill="url(#b17)"/><rect x="51.5" y="322.3" width="60.3" height="4.6" fill="url(#bhl)"/><rect x="51.0" y="329.2" width="80.9" height="6.6" fill="#000"/><rect x="51.5" y="330.2" width="78.7" height="4.6" fill="url(#b18)"/><rect x="51.5" y="330.2" width="78.7" height="4.6" fill="url(#bhl)"/><rect x="51.0" y="353.0" width="91.5" height="6.6" fill="#000"/><rect x="51.5" y="354.0" width="89.3" height="4.6" fill="url(#b19)"/><rect x="51.5" y="354.0" width="89.3" height="4.6" fill="url(#bhl)"/><rect x="51.0" y="360.9" width="65.5" height="6.6" fill="#000"/><rect x="51.5" y="361.9" width="63.3" height="4.6" fill="url(#b20)"/><rect x="51.5" y="361.9" width="63.3" height="4.6" fill="url(#bhl)"/><rect x="51.0" y="368.9" width="56.5" height="6.6" fill="#000"/><rect x="51.5" y="369.9" width="54.3" height="4.6" fill="url(#b21)"/><rect x="51.5" y="369.9" width="54.3" height="4.6" fill="url(#bhl)"/><rect x="51.0" y="376.8" width="107.2" height="6.6" fill="#000"/><rect x="51.5" y="377.8" width="105.0" height="4.6" fill="url(#b22)"/><rect x="51.5" y="377.8" width="105.0" height="4.6" fill="url(#bhl)"/><rect x="51.0" y="384.8" width="75.5" height="6.6" fill="#000"/><rect x="51.5" y="385.8" width="73.3" height="4.6" fill="url(#b23)"/><rect x="51.5" y="385.8" width="73.3" height="4.6" fill="url(#bhl)"/><rect x="51.0" y="392.7" width="90.0" height="6.6" fill="#000"/><rect x="51.5" y="393.7" width="87.8" height="4.6" fill="url(#b24)"/><rect x="51.5" y="393.7" width="87.8" height="4.6" fill="url(#bhl)"/><rect x="51.0" y="416.4" width="103.5" height="6.6" fill="#000"/><rect x="51.5" y="417.4" width="101.3" height="4.6" fill="url(#b25)"/><rect x="51.5" y="417.4" width="101.3" height="4.6" fill="url(#bhl)"/><rect x="51.0" y="424.4" width="94.5" height="6.6" fill="#000"/><rect x="51.5" y="425.4" width="92.3" height="4.6" fill="url(#b26)"/><rect x="51.5" y="425.4" width="92.3" height="4.6" fill="url(#bhl)"/><rect x="51.0" y="432.3" width="67.5" height="6.6" fill="#000"/><rect x="51.5" y="433.3" width="65.3" height="4.6" fill="url(#b27)"/><rect x="51.5" y="433.3" width="65.3" height="4.6" fill="url(#bhl)"/><rect x="51.0" y="440.3" width="134.1" height="6.6" fill="#000"/><rect x="51.5" y="441.3" width="131.9" height="4.6" fill="url(#b28)"/><rect x="51.5" y="441.3" width="131.9" height="4.6" fill="url(#bhl)"/><rect x="51.0" y="448.2" width="94.5" height="6.6" fill="#000"/><rect x="51.5" y="449.2" width="92.3" height="4.6" fill="url(#b29)"/><rect x="51.5" y="449.2" width="92.3" height="4.6" fill="url(#bhl)"/><rect x="51.0" y="456.2" width="116.1" height="6.6" fill="#000"/><rect x="51.5" y="457.2" width="113.9" height="4.6" fill="url(#b30)"/><rect x="51.5" y="457.2" width="113.9" height="4.6" fill="url(#bhl)"/><rect x="51.0" y="527.7" width="161.0" height="6.3" fill="#000"/><rect x="51.5" y="528.9" width="159.0" height="3.9" fill="url(#bw)"/><text x="511.0" y="88.7" font-size="17.6" fill="#d8d8d8" text-anchor="start" textLength="53.3" lengthAdjust="spacingAndGlyphs">Delta L</text><rect x="470.0" y="94.9" width="166.3" height="323.6" fill="#232323"/><line x1="470.0" y1="148.6" x2="636.3" y2="148.6" stroke="#8a8a8a" stroke-width="1.5"/><line x1="470.0" y1="203.6" x2="636.3" y2="203.6" stroke="#8a8a8a" stroke-width="1.5"/><line x1="470.0" y1="258.2" x2="636.3" y2="258.2" stroke="#8a8a8a" stroke-width="1.5"/><line x1="470.0" y1="311.3" x2="636.3" y2="311.3" stroke="#8a8a8a" stroke-width="1.5"/><line x1="470.0" y1="366.0" x2="636.3" y2="366.0" stroke="#8a8a8a" stroke-width="1.5"/><line x1="469.0" y1="94.9" x2="637.3" y2="94.9" stroke="#9a9a9a" stroke-width="2"/><line x1="636.3" y1="94.9" x2="636.3" y2="425.0" stroke="#a0a0a0" stroke-width="2"/><line x1="470.0" y1="93.9" x2="470.0" y2="425.0" stroke="#a0a0a0" stroke-width="2"/><line x1="464.0" y1="418.5" x2="636.3" y2="418.5" stroke="#a0a0a0" stroke-width="2"/><line x1="464.0" y1="94.9" x2="470.0" y2="94.9" stroke="#b0b0b0" stroke-width="2"/><text x="463.8" y="101.1" font-size="15.6" fill="#dcdcdc" text-anchor="end">15</text><line x1="464.0" y1="148.6" x2="470.0" y2="148.6" stroke="#b0b0b0" stroke-width="2"/><text x="463.8" y="154.8" font-size="15.6" fill="#dcdcdc" text-anchor="end">10</text><line x1="464.0" y1="203.6" x2="470.0" y2="203.6" stroke="#b0b0b0" stroke-width="2"/><text x="463.8" y="209.8" font-size="15.6" fill="#dcdcdc" text-anchor="end">5</text><line x1="464.0" y1="258.2" x2="470.0" y2="258.2" stroke="#b0b0b0" stroke-width="2"/><text x="463.8" y="264.4" font-size="15.6" fill="#dcdcdc" text-anchor="end">0</text><line x1="464.0" y1="311.3" x2="470.0" y2="311.3" stroke="#b0b0b0" stroke-width="2"/><text x="463.8" y="317.5" font-size="15.6" fill="#dcdcdc" text-anchor="end">-5</text><line x1="464.0" y1="366.0" x2="470.0" y2="366.0" stroke="#b0b0b0" stroke-width="2"/><text x="463.8" y="372.2" font-size="15.6" fill="#dcdcdc" text-anchor="end">-10</text><line x1="464.0" y1="418.5" x2="470.0" y2="418.5" stroke="#b0b0b0" stroke-width="2"/><text x="463.8" y="427.3" font-size="15.6" fill="#dcdcdc" text-anchor="end">-15</text><text x="553.1" y="438.0" font-size="16.3" fill="#dcdcdc" text-anchor="middle">100%</text><rect x="487.2" y="256.6" width="132.3" height="14.4" fill="#000"/><rect x="488.7" y="258.1" width="129.3" height="11.4" fill="url(#yb)"/><text x="736.0" y="88.7" font-size="17.6" fill="#d8d8d8" text-anchor="start" textLength="56.3" lengthAdjust="spacingAndGlyphs">Delta C</text><rect x="696.1" y="94.9" width="167.0" height="323.6" fill="#232323"/><line x1="696.1" y1="148.6" x2="863.1" y2="148.6" stroke="#8a8a8a" stroke-width="1.5"/><line x1="696.1" y1="203.6" x2="863.1" y2="203.6" stroke="#8a8a8a" stroke-width="1.5"/><line x1="696.1" y1="258.2" x2="863.1" y2="258.2" stroke="#8a8a8a" stroke-width="1.5"/><line x1="696.1" y1="311.3" x2="863.1" y2="311.3" stroke="#8a8a8a" stroke-width="1.5"/><line x1="696.1" y1="366.0" x2="863.1" y2="366.0" stroke="#8a8a8a" stroke-width="1.5"/><line x1="695.1" y1="94.9" x2="864.1" y2="94.9" stroke="#9a9a9a" stroke-width="2"/><line x1="863.1" y1="94.9" x2="863.1" y2="425.0" stroke="#a0a0a0" stroke-width="2"/><line x1="696.1" y1="93.9" x2="696.1" y2="425.0" stroke="#a0a0a0" stroke-width="2"/><line x1="690.1" y1="418.5" x2="863.1" y2="418.5" stroke="#a0a0a0" stroke-width="2"/><line x1="690.1" y1="94.9" x2="696.1" y2="94.9" stroke="#b0b0b0" stroke-width="2"/><text x="689.9" y="101.1" font-size="15.6" fill="#dcdcdc" text-anchor="end">15</text><line x1="690.1" y1="148.6" x2="696.1" y2="148.6" stroke="#b0b0b0" stroke-width="2"/><text x="689.9" y="154.8" font-size="15.6" fill="#dcdcdc" text-anchor="end">10</text><line x1="690.1" y1="203.6" x2="696.1" y2="203.6" stroke="#b0b0b0" stroke-width="2"/><text x="689.9" y="209.8" font-size="15.6" fill="#dcdcdc" text-anchor="end">5</text><line x1="690.1" y1="258.2" x2="696.1" y2="258.2" stroke="#b0b0b0" stroke-width="2"/><text x="689.9" y="264.4" font-size="15.6" fill="#dcdcdc" text-anchor="end">0</text><line x1="690.1" y1="311.3" x2="696.1" y2="311.3" stroke="#b0b0b0" stroke-width="2"/><text x="689.9" y="317.5" font-size="15.6" fill="#dcdcdc" text-anchor="end">-5</text><line x1="690.1" y1="366.0" x2="696.1" y2="366.0" stroke="#b0b0b0" stroke-width="2"/><text x="689.9" y="372.2" font-size="15.6" fill="#dcdcdc" text-anchor="end">-10</text><line x1="690.1" y1="418.5" x2="696.1" y2="418.5" stroke="#b0b0b0" stroke-width="2"/><text x="689.9" y="427.3" font-size="15.6" fill="#dcdcdc" text-anchor="end">-15</text><text x="779.6" y="438.0" font-size="16.3" fill="#dcdcdc" text-anchor="middle">100%</text><rect x="714.2" y="256.5" width="131.5" height="16.5" fill="#000"/><rect x="715.7" y="258.0" width="128.5" height="13.5" fill="url(#yb)"/><text x="962.0" y="88.7" font-size="17.6" fill="#d8d8d8" text-anchor="start" textLength="58.4" lengthAdjust="spacingAndGlyphs">Delta H</text><rect x="924.0" y="94.9" width="165.5" height="323.6" fill="#232323"/><line x1="924.0" y1="148.6" x2="1089.5" y2="148.6" stroke="#8a8a8a" stroke-width="1.5"/><line x1="924.0" y1="203.6" x2="1089.5" y2="203.6" stroke="#8a8a8a" stroke-width="1.5"/><line x1="924.0" y1="258.2" x2="1089.5" y2="258.2" stroke="#8a8a8a" stroke-width="1.5"/><line x1="924.0" y1="311.3" x2="1089.5" y2="311.3" stroke="#8a8a8a" stroke-width="1.5"/><line x1="924.0" y1="366.0" x2="1089.5" y2="366.0" stroke="#8a8a8a" stroke-width="1.5"/><line x1="923.0" y1="94.9" x2="1090.5" y2="94.9" stroke="#9a9a9a" stroke-width="2"/><line x1="1089.5" y1="94.9" x2="1089.5" y2="425.0" stroke="#a0a0a0" stroke-width="2"/><line x1="924.0" y1="93.9" x2="924.0" y2="425.0" stroke="#a0a0a0" stroke-width="2"/><line x1="918.0" y1="418.5" x2="1089.5" y2="418.5" stroke="#a0a0a0" stroke-width="2"/><line x1="918.0" y1="94.9" x2="924.0" y2="94.9" stroke="#b0b0b0" stroke-width="2"/><text x="917.8" y="101.1" font-size="15.6" fill="#dcdcdc" text-anchor="end">15</text><line x1="918.0" y1="148.6" x2="924.0" y2="148.6" stroke="#b0b0b0" stroke-width="2"/><text x="917.8" y="154.8" font-size="15.6" fill="#dcdcdc" text-anchor="end">10</text><line x1="918.0" y1="203.6" x2="924.0" y2="203.6" stroke="#b0b0b0" stroke-width="2"/><text x="917.8" y="209.8" font-size="15.6" fill="#dcdcdc" text-anchor="end">5</text><line x1="918.0" y1="258.2" x2="924.0" y2="258.2" stroke="#b0b0b0" stroke-width="2"/><text x="917.8" y="264.4" font-size="15.6" fill="#dcdcdc" text-anchor="end">0</text><line x1="918.0" y1="311.3" x2="924.0" y2="311.3" stroke="#b0b0b0" stroke-width="2"/><text x="917.8" y="317.5" font-size="15.6" fill="#dcdcdc" text-anchor="end">-5</text><line x1="918.0" y1="366.0" x2="924.0" y2="366.0" stroke="#b0b0b0" stroke-width="2"/><text x="917.8" y="372.2" font-size="15.6" fill="#dcdcdc" text-anchor="end">-10</text><line x1="918.0" y1="418.5" x2="924.0" y2="418.5" stroke="#b0b0b0" stroke-width="2"/><text x="917.8" y="427.3" font-size="15.6" fill="#dcdcdc" text-anchor="end">-15</text><text x="1006.8" y="438.0" font-size="16.3" fill="#dcdcdc" text-anchor="middle">100%</text><rect x="940.8" y="234.0" width="131.8" height="23.5" fill="#000"/><rect x="942.3" y="235.5" width="128.8" height="20.5" fill="url(#yb)"/><rect x="432.0" y="449.0" width="680.0" height="187.0" fill="#000000"/><rect x="455.7" y="456.4" width="113.8" height="153.1" fill="#e6e6e6"/><rect x="457.0" y="457.7" width="111.2" height="75.5" fill="#b7bca7"/><rect x="457.0" y="533.2" width="111.2" height="75.0" fill="#bbbc97"/><text x="512.6" y="626.6" font-size="14.2" fill="#f4f4f4" text-anchor="middle" stroke="#f4f4f4" stroke-width="0.45">20%</text><rect x="588.9" y="456.4" width="113.6" height="153.1" fill="#e6e6e6"/><rect x="590.2" y="457.7" width="111.0" height="75.5" fill="#b8bd89"/><rect x="590.2" y="533.2" width="111.0" height="75.0" fill="#bcbc78"/><text x="645.7" y="626.6" font-size="14.2" fill="#f4f4f4" text-anchor="middle" stroke="#f4f4f4" stroke-width="0.45">40%</text><rect x="721.0" y="456.4" width="115.3" height="153.1" fill="#e6e6e6"/><rect x="722.3" y="457.7" width="112.7" height="75.5" fill="#b9bc6e"/><rect x="722.3" y="533.2" width="112.7" height="75.0" fill="#bcbb5c"/><text x="778.6" y="626.6" font-size="14.2" fill="#f4f4f4" text-anchor="middle" stroke="#f4f4f4" stroke-width="0.45">60%</text><rect x="854.2" y="456.4" width="114.6" height="153.1" fill="#e6e6e6"/><rect x="855.5" y="457.7" width="112.0" height="75.5" fill="#b7b838"/><rect x="855.5" y="533.2" width="112.0" height="75.0" fill="#bcb91b"/><text x="911.5" y="626.6" font-size="14.2" fill="#f4f4f4" text-anchor="middle" stroke="#f4f4f4" stroke-width="0.45">80%</text><rect x="988.4" y="456.4" width="113.3" height="153.1" fill="#e6e6e6"/><rect x="989.7" y="457.7" width="110.7" height="75.5" fill="#bcbd14"/><rect x="989.7" y="533.2" width="110.7" height="75.0" fill="#c2c000"/><text x="1045.0" y="626.6" font-size="14.2" fill="#f4f4f4" text-anchor="middle" stroke="#f4f4f4" stroke-width="0.45">100%</text><text transform="translate(446.8,491) rotate(-90)" font-size="14.2" fill="#f4f4f4" text-anchor="middle" stroke="#f4f4f4" stroke-width="0.45">Actual</text><text transform="translate(446.8,575) rotate(-90)" font-size="14.2" fill="#f4f4f4" text-anchor="middle" stroke="#f4f4f4" stroke-width="0.45">Target</text><rect x="1120.0" y="11.0" width="799.0" height="641.0" fill="#1b1b1b"/><rect x="1128.0" y="19.0" width="782.0" height="625.0" fill="#333333"/><text x="1470.4" y="39.4" font-size="18.0" fill="#d0d0d0" text-anchor="start" textLength="97.7" lengthAdjust="spacingAndGlyphs">CIE 1976 u'v'</text><rect x="1171.5" y="45.2" width="734.9" height="565.8" fill="#232323"/><g clip-path="url(#pf)"><g clip-path="url(#hs)"><rect x="1171" y="56" width="736" height="3.6" fill="url(#c0)"/><rect x="1171" y="59" width="736" height="3.6" fill="url(#c1)"/><rect x="1171" y="62" width="736" height="3.6" fill="url(#c2)"/><rect x="1171" y="65" width="736" height="3.6" fill="url(#c3)"/><rect x="1171" y="68" width="736" height="3.6" fill="url(#c4)"/><rect x="1171" y="71" width="736" height="3.6" fill="url(#c5)"/><rect x="1171" y="74" width="736" height="3.6" fill="url(#c6)"/><rect x="1171" y="77" width="736" height="3.6" fill="url(#c7)"/><rect x="1171" y="80" width="736" height="3.6" fill="url(#c8)"/><rect x="1171" y="83" width="736" height="3.6" fill="url(#c9)"/><rect x="1171" y="86" width="736" height="3.6" fill="url(#c10)"/><rect x="1171" y="89" width="736" height="3.6" fill="url(#c11)"/><rect x="1171" y="92" width="736" height="3.6" fill="url(#c12)"/><rect x="1171" y="95" width="736" height="3.6" fill="url(#c13)"/><rect x="1171" y="98" width="736" height="3.6" fill="url(#c14)"/><rect x="1171" y="101" width="736" height="3.6" fill="url(#c15)"/><rect x="1171" y="104" width="736" height="3.6" fill="url(#c16)"/><rect x="1171" y="107" width="736" height="3.6" fill="url(#c17)"/><rect x="1171" y="110" width="736" height="2.6" fill="url(#c18)"/><rect x="1171" y="112" width="736" height="2.6" fill="url(#c19)"/><rect x="1171" y="114" width="736" height="2.6" fill="url(#c20)"/><rect x="1171" y="116" width="736" height="2.6" fill="url(#c21)"/><rect x="1171" y="118" width="736" height="2.6" fill="url(#c22)"/><rect x="1171" y="120" width="736" height="2.6" fill="url(#c23)"/><rect x="1171" y="122" width="736" height="2.6" fill="url(#c24)"/><rect x="1171" y="124" width="736" height="2.6" fill="url(#c25)"/><rect x="1171" y="126" width="736" height="2.6" fill="url(#c26)"/><rect x="1171" y="128" width="736" height="2.6" fill="url(#c27)"/><rect x="1171" y="130" width="736" height="2.6" fill="url(#c28)"/><rect x="1171" y="132" width="736" height="2.6" fill="url(#c29)"/><rect x="1171" y="134" width="736" height="2.6" fill="url(#c30)"/><rect x="1171" y="136" width="736" height="2.6" fill="url(#c31)"/><rect x="1171" y="138" width="736" height="2.6" fill="url(#c32)"/><rect x="1171" y="140" width="736" height="2.6" fill="url(#c33)"/><rect x="1171" y="142" width="736" height="2.6" fill="url(#c34)"/><rect x="1171" y="144" width="736" height="2.6" fill="url(#c35)"/><rect x="1171" y="146" width="736" height="2.6" fill="url(#c36)"/><rect x="1171" y="148" width="736" height="2.6" fill="url(#c37)"/><rect x="1171" y="150" width="736" height="2.6" fill="url(#c38)"/><rect x="1171" y="152" width="736" height="2.6" fill="url(#c39)"/><rect x="1171" y="154" width="736" height="2.6" fill="url(#c40)"/><rect x="1171" y="156" width="736" height="2.6" fill="url(#c41)"/><rect x="1171" y="158" width="736" height="2.6" fill="url(#c42)"/><rect x="1171" y="160" width="736" height="2.6" fill="url(#c43)"/><rect x="1171" y="162" width="736" height="2.6" fill="url(#c44)"/><rect x="1171" y="164" width="736" height="2.6" fill="url(#c45)"/><rect x="1171" y="166" width="736" height="2.6" fill="url(#c46)"/><rect x="1171" y="168" width="736" height="2.6" fill="url(#c47)"/><rect x="1171" y="170" width="736" height="2.6" fill="url(#c48)"/><rect x="1171" y="172" width="736" height="2.6" fill="url(#c49)"/><rect x="1171" y="174" width="736" height="2.6" fill="url(#c50)"/><rect x="1171" y="176" width="736" height="2.6" fill="url(#c51)"/><rect x="1171" y="178" width="736" height="2.6" fill="url(#c52)"/><rect x="1171" y="180" width="736" height="2.6" fill="url(#c53)"/><rect x="1171" y="182" width="736" height="2.6" fill="url(#c54)"/><rect x="1171" y="184" width="736" height="2.6" fill="url(#c55)"/><rect x="1171" y="186" width="736" height="2.6" fill="url(#c56)"/><rect x="1171" y="188" width="736" height="2.6" fill="url(#c57)"/><rect x="1171" y="190" width="736" height="2.6" fill="url(#c58)"/><rect x="1171" y="192" width="736" height="2.6" fill="url(#c59)"/><rect x="1171" y="194" width="736" height="2.6" fill="url(#c60)"/><rect x="1171" y="196" width="736" height="2.6" fill="url(#c61)"/><rect x="1171" y="198" width="736" height="2.6" fill="url(#c62)"/><rect x="1171" y="200" width="736" height="2.6" fill="url(#c63)"/><rect x="1171" y="202" width="736" height="2.6" fill="url(#c64)"/><rect x="1171" y="204" width="736" height="2.6" fill="url(#c65)"/><rect x="1171" y="206" width="736" height="2.6" fill="url(#c66)"/><rect x="1171" y="208" width="736" height="2.6" fill="url(#c67)"/><rect x="1171" y="210" width="736" height="2.6" fill="url(#c68)"/><rect x="1171" y="212" width="736" height="2.6" fill="url(#c69)"/><rect x="1171" y="214" width="736" height="2.6" fill="url(#c70)"/><rect x="1171" y="216" width="736" height="2.6" fill="url(#c71)"/><rect x="1171" y="218" width="736" height="2.6" fill="url(#c72)"/><rect x="1171" y="220" width="736" height="2.6" fill="url(#c73)"/><rect x="1171" y="222" width="736" height="2.6" fill="url(#c74)"/><rect x="1171" y="224" width="736" height="2.6" fill="url(#c75)"/><rect x="1171" y="226" width="736" height="2.6" fill="url(#c76)"/><rect x="1171" y="228" width="736" height="2.6" fill="url(#c77)"/><rect x="1171" y="230" width="736" height="2.6" fill="url(#c78)"/><rect x="1171" y="232" width="736" height="2.6" fill="url(#c79)"/><rect x="1171" y="234" width="736" height="2.6" fill="url(#c80)"/><rect x="1171" y="236" width="736" height="2.6" fill="url(#c81)"/><rect x="1171" y="238" width="736" height="2.6" fill="url(#c82)"/><rect x="1171" y="240" width="736" height="2.6" fill="url(#c83)"/><rect x="1171" y="242" width="736" height="2.6" fill="url(#c84)"/><rect x="1171" y="244" width="736" height="2.6" fill="url(#c85)"/><rect x="1171" y="246" width="736" height="2.6" fill="url(#c86)"/><rect x="1171" y="248" width="736" height="2.6" fill="url(#c87)"/><rect x="1171" y="250" width="736" height="2.6" fill="url(#c88)"/><rect x="1171" y="252" width="736" height="2.6" fill="url(#c89)"/><rect x="1171" y="254" width="736" height="2.6" fill="url(#c90)"/><rect x="1171" y="256" width="736" height="2.6" fill="url(#c91)"/><rect x="1171" y="258" width="736" height="2.6" fill="url(#c92)"/><rect x="1171" y="260" width="736" height="2.6" fill="url(#c93)"/><rect x="1171" y="262" width="736" height="2.6" fill="url(#c94)"/><rect x="1171" y="264" width="736" height="2.6" fill="url(#c95)"/><rect x="1171" y="266" width="736" height="2.6" fill="url(#c96)"/><rect x="1171" y="268" width="736" height="2.6" fill="url(#c97)"/><rect x="1171" y="270" width="736" height="2.6" fill="url(#c98)"/><rect x="1171" y="272" width="736" height="2.6" fill="url(#c99)"/><rect x="1171" y="274" width="736" height="2.6" fill="url(#c100)"/><rect x="1171" y="276" width="736" height="2.6" fill="url(#c101)"/><rect x="1171" y="278" width="736" height="2.6" fill="url(#c102)"/><rect x="1171" y="280" width="736" height="2.6" fill="url(#c103)"/><rect x="1171" y="282" width="736" height="2.6" fill="url(#c104)"/><rect x="1171" y="284" width="736" height="2.6" fill="url(#c105)"/><rect x="1171" y="286" width="736" height="2.6" fill="url(#c106)"/><rect x="1171" y="288" width="736" height="2.6" fill="url(#c107)"/><rect x="1171" y="290" width="736" height="3.6" fill="url(#c108)"/><rect x="1171" y="293" width="736" height="3.6" fill="url(#c109)"/><rect x="1171" y="296" width="736" height="3.6" fill="url(#c110)"/><rect x="1171" y="299" width="736" height="3.6" fill="url(#c111)"/><rect x="1171" y="302" width="736" height="3.6" fill="url(#c112)"/><rect x="1171" y="305" width="736" height="3.6" fill="url(#c113)"/><rect x="1171" y="308" width="736" height="3.6" fill="url(#c114)"/><rect x="1171" y="311" width="736" height="3.6" fill="url(#c115)"/><rect x="1171" y="314" width="736" height="3.6" fill="url(#c116)"/><rect x="1171" y="317" width="736" height="3.6" fill="url(#c117)"/><rect x="1171" y="320" width="736" height="3.6" fill="url(#c118)"/><rect x="1171" y="323" width="736" height="3.6" fill="url(#c119)"/><rect x="1171" y="326" width="736" height="3.6" fill="url(#c120)"/><rect x="1171" y="329" width="736" height="3.6" fill="url(#c121)"/><rect x="1171" y="332" width="736" height="3.6" fill="url(#c122)"/><rect x="1171" y="335" width="736" height="3.6" fill="url(#c123)"/><rect x="1171" y="338" width="736" height="3.6" fill="url(#c124)"/><rect x="1171" y="341" width="736" height="3.6" fill="url(#c125)"/><rect x="1171" y="344" width="736" height="3.6" fill="url(#c126)"/><rect x="1171" y="347" width="736" height="3.6" fill="url(#c127)"/><rect x="1171" y="350" width="736" height="3.6" fill="url(#c128)"/><rect x="1171" y="353" width="736" height="3.6" fill="url(#c129)"/><rect x="1171" y="356" width="736" height="3.6" fill="url(#c130)"/><rect x="1171" y="359" width="736" height="3.6" fill="url(#c131)"/><rect x="1171" y="362" width="736" height="3.6" fill="url(#c132)"/><rect x="1171" y="365" width="736" height="3.6" fill="url(#c133)"/><rect x="1171" y="368" width="736" height="3.6" fill="url(#c134)"/><rect x="1171" y="371" width="736" height="3.6" fill="url(#c135)"/><rect x="1171" y="374" width="736" height="3.6" fill="url(#c136)"/><rect x="1171" y="377" width="736" height="3.6" fill="url(#c137)"/><rect x="1171" y="380" width="736" height="3.6" fill="url(#c138)"/><rect x="1171" y="383" width="736" height="3.6" fill="url(#c139)"/><rect x="1171" y="386" width="736" height="3.6" fill="url(#c140)"/><rect x="1171" y="389" width="736" height="3.6" fill="url(#c141)"/><rect x="1171" y="392" width="736" height="3.6" fill="url(#c142)"/><rect x="1171" y="395" width="736" height="3.6" fill="url(#c143)"/><rect x="1171" y="398" width="736" height="3.6" fill="url(#c144)"/><rect x="1171" y="401" width="736" height="3.6" fill="url(#c145)"/><rect x="1171" y="404" width="736" height="3.6" fill="url(#c146)"/><rect x="1171" y="407" width="736" height="3.6" fill="url(#c147)"/><rect x="1171" y="410" width="736" height="3.6" fill="url(#c148)"/><rect x="1171" y="413" width="736" height="3.6" fill="url(#c149)"/><rect x="1171" y="416" width="736" height="3.6" fill="url(#c150)"/><rect x="1171" y="419" width="736" height="3.6" fill="url(#c151)"/><rect x="1171" y="422" width="736" height="3.6" fill="url(#c152)"/><rect x="1171" y="425" width="736" height="3.6" fill="url(#c153)"/><rect x="1171" y="428" width="736" height="3.6" fill="url(#c154)"/><rect x="1171" y="431" width="736" height="3.6" fill="url(#c155)"/><rect x="1171" y="434" width="736" height="3.6" fill="url(#c156)"/><rect x="1171" y="437" width="736" height="3.6" fill="url(#c157)"/><rect x="1171" y="440" width="736" height="3.6" fill="url(#c158)"/><rect x="1171" y="443" width="736" height="3.6" fill="url(#c159)"/><rect x="1171" y="446" width="736" height="3.6" fill="url(#c160)"/><rect x="1171" y="449" width="736" height="3.6" fill="url(#c161)"/><rect x="1171" y="452" width="736" height="3.6" fill="url(#c162)"/><rect x="1171" y="455" width="736" height="3.6" fill="url(#c163)"/><rect x="1171" y="458" width="736" height="3.6" fill="url(#c164)"/><rect x="1171" y="461" width="736" height="3.6" fill="url(#c165)"/><rect x="1171" y="464" width="736" height="3.6" fill="url(#c166)"/><rect x="1171" y="467" width="736" height="3.6" fill="url(#c167)"/><rect x="1171" y="470" width="736" height="3.6" fill="url(#c168)"/><rect x="1171" y="473" width="736" height="3.6" fill="url(#c169)"/><rect x="1171" y="476" width="736" height="3.6" fill="url(#c170)"/><rect x="1171" y="479" width="736" height="3.6" fill="url(#c171)"/><rect x="1171" y="482" width="736" height="3.6" fill="url(#c172)"/><rect x="1171" y="485" width="736" height="3.6" fill="url(#c173)"/><rect x="1171" y="488" width="736" height="3.6" fill="url(#c174)"/><rect x="1171" y="491" width="736" height="3.6" fill="url(#c175)"/><rect x="1171" y="494" width="736" height="3.6" fill="url(#c176)"/><rect x="1171" y="497" width="736" height="3.6" fill="url(#c177)"/><rect x="1171" y="500" width="736" height="3.6" fill="url(#c178)"/><rect x="1171" y="503" width="736" height="3.6" fill="url(#c179)"/><rect x="1171" y="506" width="736" height="3.6" fill="url(#c180)"/><rect x="1171" y="509" width="736" height="3.6" fill="url(#c181)"/><rect x="1171" y="512" width="736" height="3.6" fill="url(#c182)"/><rect x="1171" y="515" width="736" height="3.6" fill="url(#c183)"/><rect x="1171" y="518" width="736" height="3.6" fill="url(#c184)"/><rect x="1171" y="521" width="736" height="3.6" fill="url(#c185)"/><rect x="1171" y="524" width="736" height="3.6" fill="url(#c186)"/><rect x="1171" y="527" width="736" height="3.6" fill="url(#c187)"/><rect x="1171" y="530" width="736" height="3.6" fill="url(#c188)"/><rect x="1171" y="533" width="736" height="3.6" fill="url(#c189)"/><rect x="1171" y="536" width="736" height="3.6" fill="url(#c190)"/><rect x="1171" y="539" width="736" height="3.6" fill="url(#c191)"/><rect x="1171" y="542" width="736" height="3.6" fill="url(#c192)"/><rect x="1171" y="545" width="736" height="3.6" fill="url(#c193)"/><rect x="1171" y="548" width="736" height="3.6" fill="url(#c194)"/><rect x="1171" y="551" width="736" height="3.6" fill="url(#c195)"/><rect x="1171" y="554" width="736" height="3.6" fill="url(#c196)"/><rect x="1171" y="557" width="736" height="3.6" fill="url(#c197)"/><rect x="1171" y="560" width="736" height="3.6" fill="url(#c198)"/><rect x="1171" y="563" width="736" height="3.6" fill="url(#c199)"/><rect x="1171" y="566" width="736" height="3.6" fill="url(#c200)"/><rect x="1171" y="569" width="736" height="3.6" fill="url(#c201)"/><rect x="1171" y="572" width="736" height="3.6" fill="url(#c202)"/><rect x="1171" y="575" width="736" height="3.6" fill="url(#c203)"/><rect x="1171" y="578" width="736" height="3.6" fill="url(#c204)"/><rect x="1171" y="581" width="736" height="3.6" fill="url(#c205)"/><rect x="1171" y="584" width="736" height="3.6" fill="url(#c206)"/><rect x="1171" y="587" width="736" height="3.6" fill="url(#c207)"/><rect x="1171" y="590" width="736" height="3.6" fill="url(#c208)"/><rect x="1171" y="593" width="736" height="3.6" fill="url(#c209)"/><rect x="1171" y="596" width="736" height="3.6" fill="url(#c210)"/><path d="M1166.5 51.03373467351427H1911.4V603.8839533092776H1166.5Z M1777.4 114.7 L1291.9 65.6 L1385.7 460.7Z" fill="#000" fill-opacity="0.42000000000000004" fill-rule="evenodd"/></g></g><line x1="1171.5" y1="45.2" x2="1906.4" y2="45.2" stroke="#9a9a9a" stroke-width="1.8"/><line x1="1906.4" y1="45.2" x2="1906.4" y2="611.0" stroke="#9a9a9a" stroke-width="1.5"/><line x1="1171.5" y1="44.5" x2="1171.5" y2="618.0" stroke="#a8a8a8" stroke-width="1.5"/><line x1="1164.5" y1="611.0" x2="1907.2" y2="611.0" stroke="#a8a8a8" stroke-width="1.5"/><line x1="1165.0" y1="611.0" x2="1171.5" y2="611.0" stroke="#b0b0b0" stroke-width="1.5"/><text x="1164.5" y="618.0" font-size="17.0" fill="#d4d4d4" text-anchor="end">0</text><line x1="1165.0" y1="564.0" x2="1171.5" y2="564.0" stroke="#b0b0b0" stroke-width="1.5"/><text x="1164.5" y="571.0" font-size="17.0" fill="#d4d4d4" text-anchor="end">0.05</text><line x1="1165.0" y1="517.0" x2="1171.5" y2="517.0" stroke="#b0b0b0" stroke-width="1.5"/><text x="1164.5" y="524.0" font-size="17.0" fill="#d4d4d4" text-anchor="end">0.1</text><line x1="1165.0" y1="470.0" x2="1171.5" y2="470.0" stroke="#b0b0b0" stroke-width="1.5"/><text x="1164.5" y="477.0" font-size="17.0" fill="#d4d4d4" text-anchor="end">0.15</text><line x1="1165.0" y1="423.0" x2="1171.5" y2="423.0" stroke="#b0b0b0" stroke-width="1.5"/><text x="1164.5" y="430.0" font-size="17.0" fill="#d4d4d4" text-anchor="end">0.2</text><line x1="1165.0" y1="376.1" x2="1171.5" y2="376.1" stroke="#b0b0b0" stroke-width="1.5"/><text x="1164.5" y="383.1" font-size="17.0" fill="#d4d4d4" text-anchor="end">0.25</text><line x1="1165.0" y1="329.1" x2="1171.5" y2="329.1" stroke="#b0b0b0" stroke-width="1.5"/><text x="1164.5" y="336.1" font-size="17.0" fill="#d4d4d4" text-anchor="end">0.3</text><line x1="1165.0" y1="282.1" x2="1171.5" y2="282.1" stroke="#b0b0b0" stroke-width="1.5"/><text x="1164.5" y="289.1" font-size="17.0" fill="#d4d4d4" text-anchor="end">0.35</text><line x1="1165.0" y1="235.1" x2="1171.5" y2="235.1" stroke="#b0b0b0" stroke-width="1.5"/><text x="1164.5" y="242.1" font-size="17.0" fill="#d4d4d4" text-anchor="end">0.4</text><line x1="1165.0" y1="188.1" x2="1171.5" y2="188.1" stroke="#b0b0b0" stroke-width="1.5"/><text x="1164.5" y="195.1" font-size="17.0" fill="#d4d4d4" text-anchor="end">0.45</text><line x1="1165.0" y1="141.1" x2="1171.5" y2="141.1" stroke="#b0b0b0" stroke-width="1.5"/><text x="1164.5" y="148.1" font-size="17.0" fill="#d4d4d4" text-anchor="end">0.5</text><line x1="1165.0" y1="94.1" x2="1171.5" y2="94.1" stroke="#b0b0b0" stroke-width="1.5"/><text x="1164.5" y="101.1" font-size="17.0" fill="#d4d4d4" text-anchor="end">0.55</text><line x1="1171.8" y1="611.0" x2="1171.8" y2="617.5" stroke="#b0b0b0" stroke-width="1.5"/><text x="1171.8" y="636.0" font-size="17.0" fill="#d4d4d4" text-anchor="middle">0</text><line x1="1232.9" y1="611.0" x2="1232.9" y2="617.5" stroke="#b0b0b0" stroke-width="1.5"/><text x="1232.9" y="636.0" font-size="17.0" fill="#d4d4d4" text-anchor="middle">0.05</text><line x1="1294.0" y1="611.0" x2="1294.0" y2="617.5" stroke="#b0b0b0" stroke-width="1.5"/><text x="1294.0" y="636.0" font-size="17.0" fill="#d4d4d4" text-anchor="middle">0.1</text><line x1="1355.1" y1="611.0" x2="1355.1" y2="617.5" stroke="#b0b0b0" stroke-width="1.5"/><text x="1355.1" y="636.0" font-size="17.0" fill="#d4d4d4" text-anchor="middle">0.15</text><line x1="1416.2" y1="611.0" x2="1416.2" y2="617.5" stroke="#b0b0b0" stroke-width="1.5"/><text x="1416.2" y="636.0" font-size="17.0" fill="#d4d4d4" text-anchor="middle">0.2</text><line x1="1477.3" y1="611.0" x2="1477.3" y2="617.5" stroke="#b0b0b0" stroke-width="1.5"/><text x="1477.3" y="636.0" font-size="17.0" fill="#d4d4d4" text-anchor="middle">0.25</text><line x1="1538.4" y1="611.0" x2="1538.4" y2="617.5" stroke="#b0b0b0" stroke-width="1.5"/><text x="1538.4" y="636.0" font-size="17.0" fill="#d4d4d4" text-anchor="middle">0.3</text><line x1="1599.5" y1="611.0" x2="1599.5" y2="617.5" stroke="#b0b0b0" stroke-width="1.5"/><text x="1599.5" y="636.0" font-size="17.0" fill="#d4d4d4" text-anchor="middle">0.35</text><line x1="1660.6" y1="611.0" x2="1660.6" y2="617.5" stroke="#b0b0b0" stroke-width="1.5"/><text x="1660.6" y="636.0" font-size="17.0" fill="#d4d4d4" text-anchor="middle">0.4</text><line x1="1721.7" y1="611.0" x2="1721.7" y2="617.5" stroke="#b0b0b0" stroke-width="1.5"/><text x="1721.7" y="636.0" font-size="17.0" fill="#d4d4d4" text-anchor="middle">0.45</text><line x1="1782.8" y1="611.0" x2="1782.8" y2="617.5" stroke="#b0b0b0" stroke-width="1.5"/><text x="1782.8" y="636.0" font-size="17.0" fill="#d4d4d4" text-anchor="middle">0.5</text><line x1="1843.9" y1="611.0" x2="1843.9" y2="617.5" stroke="#b0b0b0" stroke-width="1.5"/><text x="1843.9" y="636.0" font-size="17.0" fill="#d4d4d4" text-anchor="middle">0.55</text><g clip-path="url(#pf)"><rect x="1284.4" y="58.1" width="15" height="15" fill="none" stroke="#fff" stroke-width="1.7"/><rect x="1296.8" y="68.8" width="15" height="15" fill="none" stroke="#fff" stroke-width="1.7"/><rect x="1314.0" y="83.2" width="15" height="15" fill="none" stroke="#fff" stroke-width="1.7"/><rect x="1336.1" y="103.5" width="15" height="15" fill="none" stroke="#fff" stroke-width="1.7"/><rect x="1367.3" y="128.9" width="15" height="15" fill="none" stroke="#fff" stroke-width="1.7"/><rect x="1414.4" y="70.2" width="15" height="15" fill="none" stroke="#fff" stroke-width="1.7"/><rect x="1412.1" y="84.0" width="15" height="15" fill="none" stroke="#fff" stroke-width="1.7"/><rect x="1410.7" y="99.1" width="15" height="15" fill="none" stroke="#fff" stroke-width="1.7"/><rect x="1409.8" y="115.8" width="15" height="15" fill="none" stroke="#fff" stroke-width="1.7"/><rect x="1408.4" y="136.7" width="15" height="15" fill="none" stroke="#fff" stroke-width="1.7"/><rect x="1310.7" y="175.5" width="15" height="15" fill="none" stroke="#fff" stroke-width="1.7"/><rect x="1328.5" y="172.1" width="15" height="15" fill="none" stroke="#fff" stroke-width="1.7"/><rect x="1345.3" y="169.3" width="15" height="15" fill="none" stroke="#fff" stroke-width="1.7"/><rect x="1364.2" y="167.5" width="15" height="15" fill="none" stroke="#fff" stroke-width="1.7"/><rect x="1384.1" y="164.5" width="15" height="15" fill="none" stroke="#fff" stroke-width="1.7"/><rect x="1475.6" y="150.1" width="15" height="15" fill="none" stroke="#fff" stroke-width="1.7"/><rect x="1546.7" y="139.5" width="15" height="15" fill="none" stroke="#fff" stroke-width="1.7"/><rect x="1629.8" y="128.2" width="15" height="15" fill="none" stroke="#fff" stroke-width="1.7"/><rect x="1701.5" y="116.9" width="15" height="15" fill="none" stroke="#fff" stroke-width="1.7"/><rect x="1770.0" y="105.5" width="15" height="15" fill="none" stroke="#fff" stroke-width="1.7"/><rect x="1428.3" y="180.3" width="15" height="15" fill="none" stroke="#fff" stroke-width="1.7"/><rect x="1455.1" y="203.6" width="15" height="15" fill="none" stroke="#fff" stroke-width="1.7"/><rect x="1488.0" y="230.4" width="15" height="15" fill="none" stroke="#fff" stroke-width="1.7"/><rect x="1521.2" y="259.3" width="15" height="15" fill="none" stroke="#fff" stroke-width="1.7"/><rect x="1560.2" y="292.1" width="15" height="15" fill="none" stroke="#fff" stroke-width="1.7"/><rect x="1401.5" y="199.2" width="15" height="15" fill="none" stroke="#fff" stroke-width="1.7"/><rect x="1396.8" y="245.2" width="15" height="15" fill="none" stroke="#fff" stroke-width="1.7"/><rect x="1391.2" y="301.7" width="15" height="15" fill="none" stroke="#fff" stroke-width="1.7"/><rect x="1385.0" y="372.4" width="15" height="15" fill="none" stroke="#fff" stroke-width="1.7"/><rect x="1378.2" y="453.2" width="15" height="15" fill="none" stroke="#fff" stroke-width="1.7"/><rect x="1404.9" y="161" width="15.2" height="15.6" fill="none" stroke="#000" stroke-width="1.9"/><circle cx="1287.3" cy="65.6" r="4.6" fill="#0cb00c" stroke="#111" stroke-width="1.4"/><circle cx="1304.3" cy="81.1" r="4.6" fill="#3c9c3c" stroke="#111" stroke-width="1.4"/><circle cx="1322.7" cy="98.9" r="4.6" fill="#5aa05a" stroke="#111" stroke-width="1.4"/><circle cx="1344.6" cy="120.6" r="4.6" fill="#74a874" stroke="#111" stroke-width="1.4"/><circle cx="1372" cy="145.7" r="4.6" fill="#94ac90" stroke="#111" stroke-width="1.4"/><circle cx="1418.5" cy="77.7" r="4.6" fill="#a8a818" stroke="#111" stroke-width="1.4"/><circle cx="1416.8" cy="95.5" r="4.6" fill="#aaa850" stroke="#111" stroke-width="1.4"/><circle cx="1413.2" cy="114.4" r="4.6" fill="#aeac6c" stroke="#111" stroke-width="1.4"/><circle cx="1412.5" cy="133.3" r="4.6" fill="#b2b088" stroke="#111" stroke-width="1.4"/><circle cx="1410.4" cy="154.9" r="4.6" fill="#bcbaa0" stroke="#111" stroke-width="1.4"/><circle cx="1318.2" cy="192.6" r="4.6" fill="#20a8b0" stroke="#111" stroke-width="1.4"/><circle cx="1337.3" cy="189.4" r="4.6" fill="#50acac" stroke="#111" stroke-width="1.4"/><circle cx="1354.5" cy="187.4" r="4.6" fill="#6cb0b0" stroke="#111" stroke-width="1.4"/><circle cx="1370.4" cy="184.4" r="4.6" fill="#88b2b2" stroke="#111" stroke-width="1.4"/><circle cx="1390.5" cy="181.6" r="4.6" fill="#a8b8b8" stroke="#111" stroke-width="1.4"/><circle cx="1470.8" cy="168.6" r="4.6" fill="#b88888" stroke="#111" stroke-width="1.4"/><circle cx="1535.3" cy="157.6" r="4.6" fill="#b07070" stroke="#111" stroke-width="1.4"/><circle cx="1615.2" cy="144.2" r="4.6" fill="#b06464" stroke="#111" stroke-width="1.4"/><circle cx="1693.8" cy="130" r="4.6" fill="#b05050" stroke="#111" stroke-width="1.4"/><circle cx="1785.9" cy="115.3" r="4.6" fill="#c81010" stroke="#111" stroke-width="1.4"/><circle cx="1428.5" cy="197.4" r="4.6" fill="#bca4bc" stroke="#111" stroke-width="1.4"/><circle cx="1451.6" cy="218.7" r="4.6" fill="#b890b8" stroke="#111" stroke-width="1.4"/><circle cx="1479.7" cy="245.4" r="4.6" fill="#b070b0" stroke="#111" stroke-width="1.4"/><circle cx="1510.9" cy="274.5" r="4.6" fill="#b060b0" stroke="#111" stroke-width="1.4"/><circle cx="1550.8" cy="312.6" r="4.6" fill="#b838b8" stroke="#111" stroke-width="1.4"/><circle cx="1404.7" cy="213.2" r="4.6" fill="#a0a0bc" stroke="#111" stroke-width="1.4"/><circle cx="1399.9" cy="257.8" r="4.6" fill="#8080b8" stroke="#111" stroke-width="1.4"/><circle cx="1395" cy="308.1" r="4.6" fill="#6868b8" stroke="#111" stroke-width="1.4"/><circle cx="1389" cy="373.7" r="4.6" fill="#5050b0" stroke="#111" stroke-width="1.4"/><circle cx="1378.3" cy="460.7" r="4.6" fill="#1818a0" stroke="#111" stroke-width="1.4"/><circle cx="1407.7" cy="178.5" r="4.6" fill="#fff" stroke="#111" stroke-width="1.4"/><circle cx="1771.2" cy="130" r="5.2" fill="#000"/></g><rect x="1652.3" y="432.8" width="249.9" height="171.5" fill="#2c2c2c"/><rect x="1655.9" y="436.5" width="242.8" height="164.5" fill="#232323"/><path d="M1655.9 436.5H1778L1898.7 516.4V601H1655.9Z" fill="url(#ig)"/><path d="M1655.9 436.5H1778L1898.7 516.4V591.2L1655.9 446.2Z" fill="#000" fill-opacity="0.42"/><circle cx="1754" cy="512" r="4.6" fill="#b4b014" stroke="#111" stroke-width="1.4"/><rect x="1768.5" y="510.5" width="15" height="15" fill="none" stroke="#fff" stroke-width="1.7"/><rect x="1655.9" y="436.5" width="242.8" height="164.5" fill="none" stroke="#9a9a9a" stroke-width="1.6"/><text x="59.2" y="688.1" font-size="33.6" fill="#f0f0f0" text-anchor="start" textLength="268.5" lengthAdjust="spacingAndGlyphs" stroke="#f0f0f0" stroke-width="0.45">Avg dE2000: 3.24</text><text x="62.7" y="735.0" font-size="33.0" fill="#f0f0f0" text-anchor="start" textLength="262.0" lengthAdjust="spacingAndGlyphs" stroke="#f0f0f0" stroke-width="0.45">Max dE2000: 6.8</text><text x="16.8" y="788.1" font-size="32.1" fill="#f0f0f0" text-anchor="start" textLength="254.6" lengthAdjust="spacingAndGlyphs" stroke="#f0f0f0" stroke-width="0.45">Current Reading</text><text x="17.4" y="831.5" font-size="28.7" fill="#f0f0f0" text-anchor="start" textLength="119.6" lengthAdjust="spacingAndGlyphs" stroke="#f0f0f0" stroke-width="0.45">x: 0.4332</text><text x="197.9" y="831.5" font-size="28.7" fill="#f0f0f0" text-anchor="start" textLength="119.6" lengthAdjust="spacingAndGlyphs" stroke="#f0f0f0" stroke-width="0.45">y: 0.5377</text><text x="18.2" y="877.4" font-size="27.6" fill="#f0f0f0" text-anchor="start" textLength="95.4" lengthAdjust="spacingAndGlyphs" stroke="#f0f0f0" stroke-width="0.45">fL: 59.5</text><text x="17.3" y="916.9" font-size="28.5" fill="#f0f0f0" text-anchor="start" textLength="185.3" lengthAdjust="spacingAndGlyphs" stroke="#f0f0f0" stroke-width="0.45">cd/m²: 203.86</text><text x="489.0" y="691.2" font-size="17.9" fill="#d8d8d8" text-anchor="start" textLength="96.7" lengthAdjust="spacingAndGlyphs">RGB Balance</text><rect x="411.2" y="696.7" width="287.4" height="206.8" fill="#232323"/><line x1="411.2" y1="717.9" x2="698.6" y2="717.9" stroke="#8a8a8a" stroke-width="1.5"/><line x1="404.2" y1="717.9" x2="411.2" y2="717.9" stroke="#b0b0b0" stroke-width="1.5"/><text x="404.0" y="724.1" font-size="16.0" fill="#dcdcdc" text-anchor="end">104</text><line x1="411.2" y1="759.8" x2="698.6" y2="759.8" stroke="#8a8a8a" stroke-width="1.5"/><line x1="404.2" y1="759.8" x2="411.2" y2="759.8" stroke="#b0b0b0" stroke-width="1.5"/><text x="404.0" y="766.0" font-size="16.0" fill="#dcdcdc" text-anchor="end">102</text><line x1="411.2" y1="801.0" x2="698.6" y2="801.0" stroke="#8a8a8a" stroke-width="1.5"/><line x1="404.2" y1="801.0" x2="411.2" y2="801.0" stroke="#b0b0b0" stroke-width="1.5"/><text x="404.0" y="807.2" font-size="16.0" fill="#dcdcdc" text-anchor="end">100</text><line x1="411.2" y1="843.1" x2="698.6" y2="843.1" stroke="#8a8a8a" stroke-width="1.5"/><line x1="404.2" y1="843.1" x2="411.2" y2="843.1" stroke="#b0b0b0" stroke-width="1.5"/><text x="404.0" y="849.3" font-size="16.0" fill="#dcdcdc" text-anchor="end">98</text><line x1="411.2" y1="883.9" x2="698.6" y2="883.9" stroke="#8a8a8a" stroke-width="1.5"/><line x1="404.2" y1="883.9" x2="411.2" y2="883.9" stroke="#b0b0b0" stroke-width="1.5"/><text x="404.0" y="890.1" font-size="16.0" fill="#dcdcdc" text-anchor="end">96</text><rect x="439.8" y="843.4" width="75.4" height="60.1" fill="#000"/><rect x="439.8" y="844.6" width="74.4" height="58.9" fill="url(#rr)"/><rect x="514.6" y="821.2" width="77.6" height="82.3" fill="#000"/><rect x="516.2" y="822.8" width="74.6" height="80.7" fill="url(#rg)"/><rect x="591.0" y="762.0" width="78.0" height="141.5" fill="#000"/><rect x="592.6" y="763.6" width="75.0" height="139.9" fill="url(#rbl)"/><line x1="411.2" y1="696.7" x2="699.4" y2="696.7" stroke="#9a9a9a" stroke-width="1.5"/><line x1="698.6" y1="696.7" x2="698.6" y2="911.0" stroke="#a8a8a8" stroke-width="1.5"/><line x1="411.2" y1="696.0" x2="411.2" y2="911.0" stroke="#a8a8a8" stroke-width="1.5"/><line x1="411.2" y1="903.5" x2="698.6" y2="903.5" stroke="#a8a8a8" stroke-width="2"/><text x="555.4" y="921.8" font-size="16.0" fill="#dcdcdc" text-anchor="middle">100%</text><rect x="721.0" y="660.0" width="840.7" height="272.0" fill="#0c0c0c"/><rect x="722.5" y="661.2" width="837.2" height="16.8" fill="#333333"/><rect x="722.5" y="678.0" width="837.2" height="15.8" fill="#151515"/><rect x="722.5" y="693.8" width="837.2" height="29.8" fill="#3e3e3e"/><rect x="722.5" y="723.4" width="837.2" height="29.8" fill="url(#lr)"/><rect x="722.5" y="753.0" width="837.2" height="29.8" fill="#3e3e3e"/><rect x="722.5" y="782.6" width="837.2" height="29.8" fill="url(#lr)"/><rect x="722.5" y="812.3" width="837.2" height="29.8" fill="#3e3e3e"/><rect x="722.5" y="841.9" width="837.2" height="29.8" fill="url(#lr)"/><rect x="722.5" y="871.5" width="837.2" height="29.8" fill="#3e3e3e"/><rect x="722.5" y="901.2" width="837.2" height="29.8" fill="url(#lr)"/><text x="984.5" y="683.8" font-size="16.7" fill="#f0f0f0" text-anchor="start" textLength="47.3" lengthAdjust="spacingAndGlyphs">20%</text><text x="1106.3" y="683.8" font-size="16.7" fill="#f0f0f0" text-anchor="start" textLength="47.3" lengthAdjust="spacingAndGlyphs">40%</text><text x="1228.6" y="683.8" font-size="16.7" fill="#f0f0f0" text-anchor="start" textLength="47.3" lengthAdjust="spacingAndGlyphs">60%</text><text x="1350.9" y="683.8" font-size="16.7" fill="#f0f0f0" text-anchor="start" textLength="47.3" lengthAdjust="spacingAndGlyphs">80%</text><text x="1466.7" y="683.8" font-size="16.7" fill="#f0f0f0" text-anchor="start" textLength="60.5" lengthAdjust="spacingAndGlyphs">100%</text><text x="744.0" y="715.2" font-size="18.9" fill="#f2f2f2" text-anchor="start" font-weight="bold" textLength="99.0" lengthAdjust="spacingAndGlyphs">x: CIE31</text><text x="954.5" y="715.2" font-size="17.9" fill="#f2f2f2" text-anchor="start" textLength="77.8" lengthAdjust="spacingAndGlyphs">0.3248</text><text x="1076.4" y="715.2" font-size="17.9" fill="#f2f2f2" text-anchor="start" textLength="77.8" lengthAdjust="spacingAndGlyphs">0.3487</text><text x="1198.2" y="715.2" font-size="17.9" fill="#f2f2f2" text-anchor="start" textLength="77.8" lengthAdjust="spacingAndGlyphs">0.3735</text><text x="1320.5" y="715.2" font-size="17.9" fill="#f2f2f2" text-anchor="start" textLength="77.8" lengthAdjust="spacingAndGlyphs">0.4036</text><text x="1442.8" y="715.2" font-size="17.9" fill="#f2f2f2" text-anchor="start" textLength="77.8" lengthAdjust="spacingAndGlyphs">0.4332</text><text x="744.0" y="744.8" font-size="18.9" fill="#f2f2f2" text-anchor="start" font-weight="bold" textLength="99.0" lengthAdjust="spacingAndGlyphs">y: CIE31</text><text x="954.5" y="744.8" font-size="17.9" fill="#f2f2f2" text-anchor="start" textLength="77.8" lengthAdjust="spacingAndGlyphs">0.3561</text><text x="1076.4" y="744.8" font-size="17.9" fill="#f2f2f2" text-anchor="start" textLength="77.8" lengthAdjust="spacingAndGlyphs">0.3975</text><text x="1198.2" y="744.8" font-size="17.9" fill="#f2f2f2" text-anchor="start" textLength="77.8" lengthAdjust="spacingAndGlyphs">0.4409</text><text x="1320.5" y="744.8" font-size="17.9" fill="#f2f2f2" text-anchor="start" textLength="77.8" lengthAdjust="spacingAndGlyphs">0.4880</text><text x="1442.8" y="744.8" font-size="17.9" fill="#f2f2f2" text-anchor="start" textLength="77.8" lengthAdjust="spacingAndGlyphs">0.5377</text><text x="744.0" y="774.4" font-size="18.9" fill="#f2f2f2" text-anchor="start" font-weight="bold" textLength="16.7" lengthAdjust="spacingAndGlyphs">Y</text><text x="954.5" y="774.4" font-size="17.9" fill="#f2f2f2" text-anchor="start" textLength="106.1" lengthAdjust="spacingAndGlyphs">225.0393</text><text x="1076.4" y="774.4" font-size="17.9" fill="#f2f2f2" text-anchor="start" textLength="106.1" lengthAdjust="spacingAndGlyphs">220.2385</text><text x="1198.2" y="774.4" font-size="17.9" fill="#f2f2f2" text-anchor="start" textLength="106.1" lengthAdjust="spacingAndGlyphs">216.4452</text><text x="1320.5" y="774.4" font-size="17.9" fill="#f2f2f2" text-anchor="start" textLength="106.1" lengthAdjust="spacingAndGlyphs">207.8743</text><text x="1442.8" y="774.4" font-size="17.9" fill="#f2f2f2" text-anchor="start" textLength="106.1" lengthAdjust="spacingAndGlyphs">203.8584</text><text x="744.0" y="804.1" font-size="18.9" fill="#f2f2f2" text-anchor="start" font-weight="bold" textLength="175.7" lengthAdjust="spacingAndGlyphs">Target x:CIE31</text><text x="954.5" y="804.1" font-size="17.9" fill="#f2f2f2" text-anchor="start" textLength="77.8" lengthAdjust="spacingAndGlyphs">0.3403</text><text x="1076.4" y="804.1" font-size="17.9" fill="#f2f2f2" text-anchor="start" textLength="77.8" lengthAdjust="spacingAndGlyphs">0.3651</text><text x="1198.2" y="804.1" font-size="17.9" fill="#f2f2f2" text-anchor="start" textLength="77.8" lengthAdjust="spacingAndGlyphs">0.3908</text><text x="1320.5" y="804.1" font-size="17.9" fill="#f2f2f2" text-anchor="start" textLength="77.8" lengthAdjust="spacingAndGlyphs">0.4159</text><text x="1442.8" y="804.1" font-size="17.9" fill="#f2f2f2" text-anchor="start" textLength="77.8" lengthAdjust="spacingAndGlyphs">0.4378</text><text x="744.0" y="833.7" font-size="18.9" fill="#f2f2f2" text-anchor="start" font-weight="bold" textLength="175.7" lengthAdjust="spacingAndGlyphs">Target y:CIE31</text><text x="954.5" y="833.7" font-size="17.9" fill="#f2f2f2" text-anchor="start" textLength="77.8" lengthAdjust="spacingAndGlyphs">0.3746</text><text x="1076.4" y="833.7" font-size="17.9" fill="#f2f2f2" text-anchor="start" textLength="77.8" lengthAdjust="spacingAndGlyphs">0.4156</text><text x="1198.2" y="833.7" font-size="17.9" fill="#f2f2f2" text-anchor="start" textLength="77.8" lengthAdjust="spacingAndGlyphs">0.4581</text><text x="1320.5" y="833.7" font-size="17.9" fill="#f2f2f2" text-anchor="start" textLength="77.8" lengthAdjust="spacingAndGlyphs">0.4997</text><text x="1442.8" y="833.7" font-size="17.9" fill="#f2f2f2" text-anchor="start" textLength="77.8" lengthAdjust="spacingAndGlyphs">0.5359</text><text x="744.0" y="863.3" font-size="18.9" fill="#f2f2f2" text-anchor="start" font-weight="bold" textLength="100.4" lengthAdjust="spacingAndGlyphs">Target Y</text><text x="954.5" y="863.3" font-size="17.9" fill="#f2f2f2" text-anchor="start" textLength="106.1" lengthAdjust="spacingAndGlyphs">224.9869</text><text x="1076.4" y="863.3" font-size="17.9" fill="#f2f2f2" text-anchor="start" textLength="106.1" lengthAdjust="spacingAndGlyphs">220.8239</text><text x="1198.2" y="863.3" font-size="17.9" fill="#f2f2f2" text-anchor="start" textLength="106.1" lengthAdjust="spacingAndGlyphs">217.4253</text><text x="1320.5" y="863.3" font-size="17.9" fill="#f2f2f2" text-anchor="start" textLength="106.1" lengthAdjust="spacingAndGlyphs">214.7313</text><text x="1442.8" y="863.3" font-size="17.9" fill="#f2f2f2" text-anchor="start" textLength="106.1" lengthAdjust="spacingAndGlyphs">212.7689</text><text x="744.0" y="893.0" font-size="18.9" fill="#f2f2f2" text-anchor="start" font-weight="bold" textLength="97.5" lengthAdjust="spacingAndGlyphs">ΔE 2000</text><text x="954.5" y="893.0" font-size="17.9" fill="#f2f2f2" text-anchor="start" textLength="77.8" lengthAdjust="spacingAndGlyphs">4.8945</text><text x="1076.4" y="893.0" font-size="17.9" fill="#f2f2f2" text-anchor="start" textLength="77.8" lengthAdjust="spacingAndGlyphs">3.7572</text><text x="1198.2" y="893.0" font-size="17.9" fill="#f2f2f2" text-anchor="start" textLength="77.8" lengthAdjust="spacingAndGlyphs">3.3542</text><text x="1320.5" y="893.0" font-size="17.9" fill="#f2f2f2" text-anchor="start" textLength="77.8" lengthAdjust="spacingAndGlyphs">2.6007</text><text x="1442.8" y="893.0" font-size="17.9" fill="#f2f2f2" text-anchor="start" textLength="77.8" lengthAdjust="spacingAndGlyphs">1.4452</text><text x="744.0" y="922.6" font-size="18.9" fill="#f2f2f2" text-anchor="start" font-weight="bold" textLength="80.8" lengthAdjust="spacingAndGlyphs">ΔE ITP</text><text x="954.5" y="922.6" font-size="17.9" fill="#f2f2f2" text-anchor="start" textLength="77.8" lengthAdjust="spacingAndGlyphs">9.7420</text><text x="1076.4" y="922.6" font-size="17.9" fill="#f2f2f2" text-anchor="start" textLength="91.9" lengthAdjust="spacingAndGlyphs">10.6804</text><text x="1198.2" y="922.6" font-size="17.9" fill="#f2f2f2" text-anchor="start" textLength="91.9" lengthAdjust="spacingAndGlyphs">12.2334</text><text x="1320.5" y="922.6" font-size="17.9" fill="#f2f2f2" text-anchor="start" textLength="91.9" lengthAdjust="spacingAndGlyphs">11.3570</text><text x="1442.8" y="922.6" font-size="17.9" fill="#f2f2f2" text-anchor="start" textLength="77.8" lengthAdjust="spacingAndGlyphs">4.5329</text><rect x="0.0" y="1104.8" width="1920.0" height="60.7" fill="url(#bar)"/><rect x="2.5" y="1104.8" width="797.5" height="60.7" fill="#262626"/><rect x="0.0" y="1165.5" width="1920.0" height="1.5" fill="#a8a8a8"/><rect x="2" y="1105" width="43.8" height="59.6" rx="4" fill="url(#btn)"/><circle cx="24" cy="1114" r="7" fill="#777" opacity="0.7"/><path d="M19.5 1117H28.5L24 1111.5Z" fill="#222"/><rect x="7" y="1130.7" width="34.4" height="29.3" rx="3" fill="#ffff00" stroke="#6a6a7a" stroke-width="0.8"/><rect x="52" y="1105" width="147.7" height="59.7" rx="4" fill="url(#btn)"/><rect x="57.5" y="1110" width="137.5" height="35" rx="3" fill="#c0c3a0" stroke="#7a7a6a" stroke-width="0.8"/><text x="126.0" y="1160.0" font-size="11.5" fill="#2e2e2e" text-anchor="middle" stroke="#2e2e2e" stroke-width="0.35">20%</text><rect x="202" y="1105" width="147.7" height="59.7" rx="4" fill="url(#btn)"/><rect x="207.5" y="1110" width="137.5" height="35" rx="3" fill="#c3c286" stroke="#7a7a6a" stroke-width="0.8"/><text x="276.0" y="1160.0" font-size="11.5" fill="#2e2e2e" text-anchor="middle" stroke="#2e2e2e" stroke-width="0.35">40%</text><rect x="352" y="1105" width="147.7" height="59.7" rx="4" fill="url(#btn)"/><rect x="357.5" y="1110" width="137.5" height="35" rx="3" fill="#c4c262" stroke="#7a7a6a" stroke-width="0.8"/><text x="426.0" y="1160.0" font-size="11.5" fill="#2e2e2e" text-anchor="middle" stroke="#2e2e2e" stroke-width="0.35">60%</text><rect x="502" y="1105" width="147.7" height="59.7" rx="4" fill="url(#btn)"/><rect x="507.5" y="1110" width="137.5" height="35" rx="3" fill="#c3c14a" stroke="#7a7a6a" stroke-width="0.8"/><text x="576.0" y="1160.0" font-size="11.5" fill="#2e2e2e" text-anchor="middle" stroke="#2e2e2e" stroke-width="0.35">80%</text><rect x="650" y="1105" width="148" height="59.7" rx="4" fill="url(#sel)"/><rect x="655.5" y="1110" width="137.5" height="35" rx="3" fill="#c2c000"/><text x="724.0" y="1160.0" font-size="11.5" fill="#ffffff" text-anchor="middle" font-weight="bold">100%</text><rect x="1650" y="1105" width="268" height="30" rx="3" fill="url(#nb)"/><line x1="1694.5" y1="1105.0" x2="1694.5" y2="1134.0" stroke="#3a3a3a" stroke-width="1"/><line x1="1739.0" y1="1105.0" x2="1739.0" y2="1134.0" stroke="#3a3a3a" stroke-width="1"/><line x1="1783.5" y1="1105.0" x2="1783.5" y2="1134.0" stroke="#3a3a3a" stroke-width="1"/><line x1="1828.0" y1="1105.0" x2="1828.0" y2="1134.0" stroke="#3a3a3a" stroke-width="1"/><line x1="1872.6" y1="1105.0" x2="1872.6" y2="1134.0" stroke="#3a3a3a" stroke-width="1"/><circle cx="1672" cy="1127" r="8" fill="#9a9a9a" opacity="0.6"/><circle cx="1716.5" cy="1127" r="8" fill="#9a9a9a" opacity="0.6"/><circle cx="1761" cy="1127" r="8" fill="#9a9a9a" opacity="0.6"/><circle cx="1805.5" cy="1127" r="8" fill="#9a9a9a" opacity="0.6"/><circle cx="1850" cy="1127" r="8" fill="#9a9a9a" opacity="0.6"/><circle cx="1895" cy="1127" r="8" fill="#9a9a9a" opacity="0.6"/><rect x="1602" y="1125" width="46" height="40" rx="3" fill="url(#nb)"/><rect x="1610" y="1129.5" width="29" height="28.5" rx="3" fill="#999" stroke="#222" stroke-width="2"/><rect x="1618" y="1137.3" width="13" height="13.5" fill="#000"/><rect x="1649" y="1135.7" width="269" height="29.5" rx="3" fill="url(#nb2)"/><line x1="1783.5" y1="1135.7" x2="1783.5" y2="1165.0" stroke="#2a2a2a" stroke-width="1.2"/><circle cx="1680" cy="1150.3" r="9.4" fill="#8a8a8a"/><circle cx="1889.3" cy="1150.3" r="9.4" fill="#8a8a8a"/><text x="1680.0" y="1156.5" font-size="20.0" fill="#222" text-anchor="middle">«</text><text x="1889.3" y="1156.5" font-size="20.0" fill="#222" text-anchor="middle">»</text><text x="1704.1" y="1157.6" font-size="21.9" fill="#262626" text-anchor="start" textLength="51.3" lengthAdjust="spacingAndGlyphs">Back</text><text x="1809.6" y="1157.6" font-size="21.9" fill="#262626" text-anchor="start" textLength="52.8" lengthAdjust="spacingAndGlyphs">Next</text><rect x="1910.0" y="652.0" width="9.0" height="515.0" fill="url(#re)"/><rect x="1919.0" y="0.0" width="1.0" height="1167.0" fill="#a0a0a0"/><g><path d="M1591.5 1125.8L1588.3 1097.7L1542.5 1087.8L1544.6 1134.2L1573.8 1148.8L1628 1132L1554 1128.8" fill="none" stroke="#d0d0d0" stroke-opacity="0.55" stroke-width="8" stroke-linejoin="round" stroke-linecap="round"/><path d="M1591.5 1125.8L1588.3 1097.7L1542.5 1087.8L1544.6 1134.2L1573.8 1148.8L1628 1132L1554 1128.8" fill="none" stroke="#8e2a2a" stroke-opacity="0.9" stroke-width="4.6" stroke-linejoin="round" stroke-linecap="round"/><path d="M1553.5 1106.5L1563 1101.5L1572 1113.5L1598 1083.5L1600 1086L1573.5 1122.5Z" fill="none" stroke="#d0d0d0" stroke-opacity="0.8" stroke-width="3" stroke-linejoin="round"/><path d="M1553.5 1106.5L1563 1101.5L1572 1113.5L1598 1083.5L1600 1086L1573.5 1122.5Z" fill="#3a3a3a"/></g><g opacity="0.72"><text x="1599" y="1124" font-size="36" font-weight="bold" fill="none" stroke="#dadada" stroke-width="4.2" stroke-linejoin="round" textLength="194" lengthAdjust="spacingAndGlyphs">NOTEBOOK</text><text x="1599" y="1124" font-size="36" font-weight="bold" fill="#a83434" stroke="#a83434" stroke-width="1.6" stroke-linejoin="round" textLength="194" lengthAdjust="spacingAndGlyphs">NOTEBOOK</text></g><g opacity="0.72"><text x="1793" y="1124" font-size="36" font-weight="bold" fill="none" stroke="#dadada" stroke-width="4.2" stroke-linejoin="round" textLength="118" lengthAdjust="spacingAndGlyphs">CHECK</text><text x="1793" y="1124" font-size="36" font-weight="bold" fill="#303030" stroke="#303030" stroke-width="1.6" stroke-linejoin="round" textLength="118" lengthAdjust="spacingAndGlyphs">CHECK</text></g>
</svg></body></html>
